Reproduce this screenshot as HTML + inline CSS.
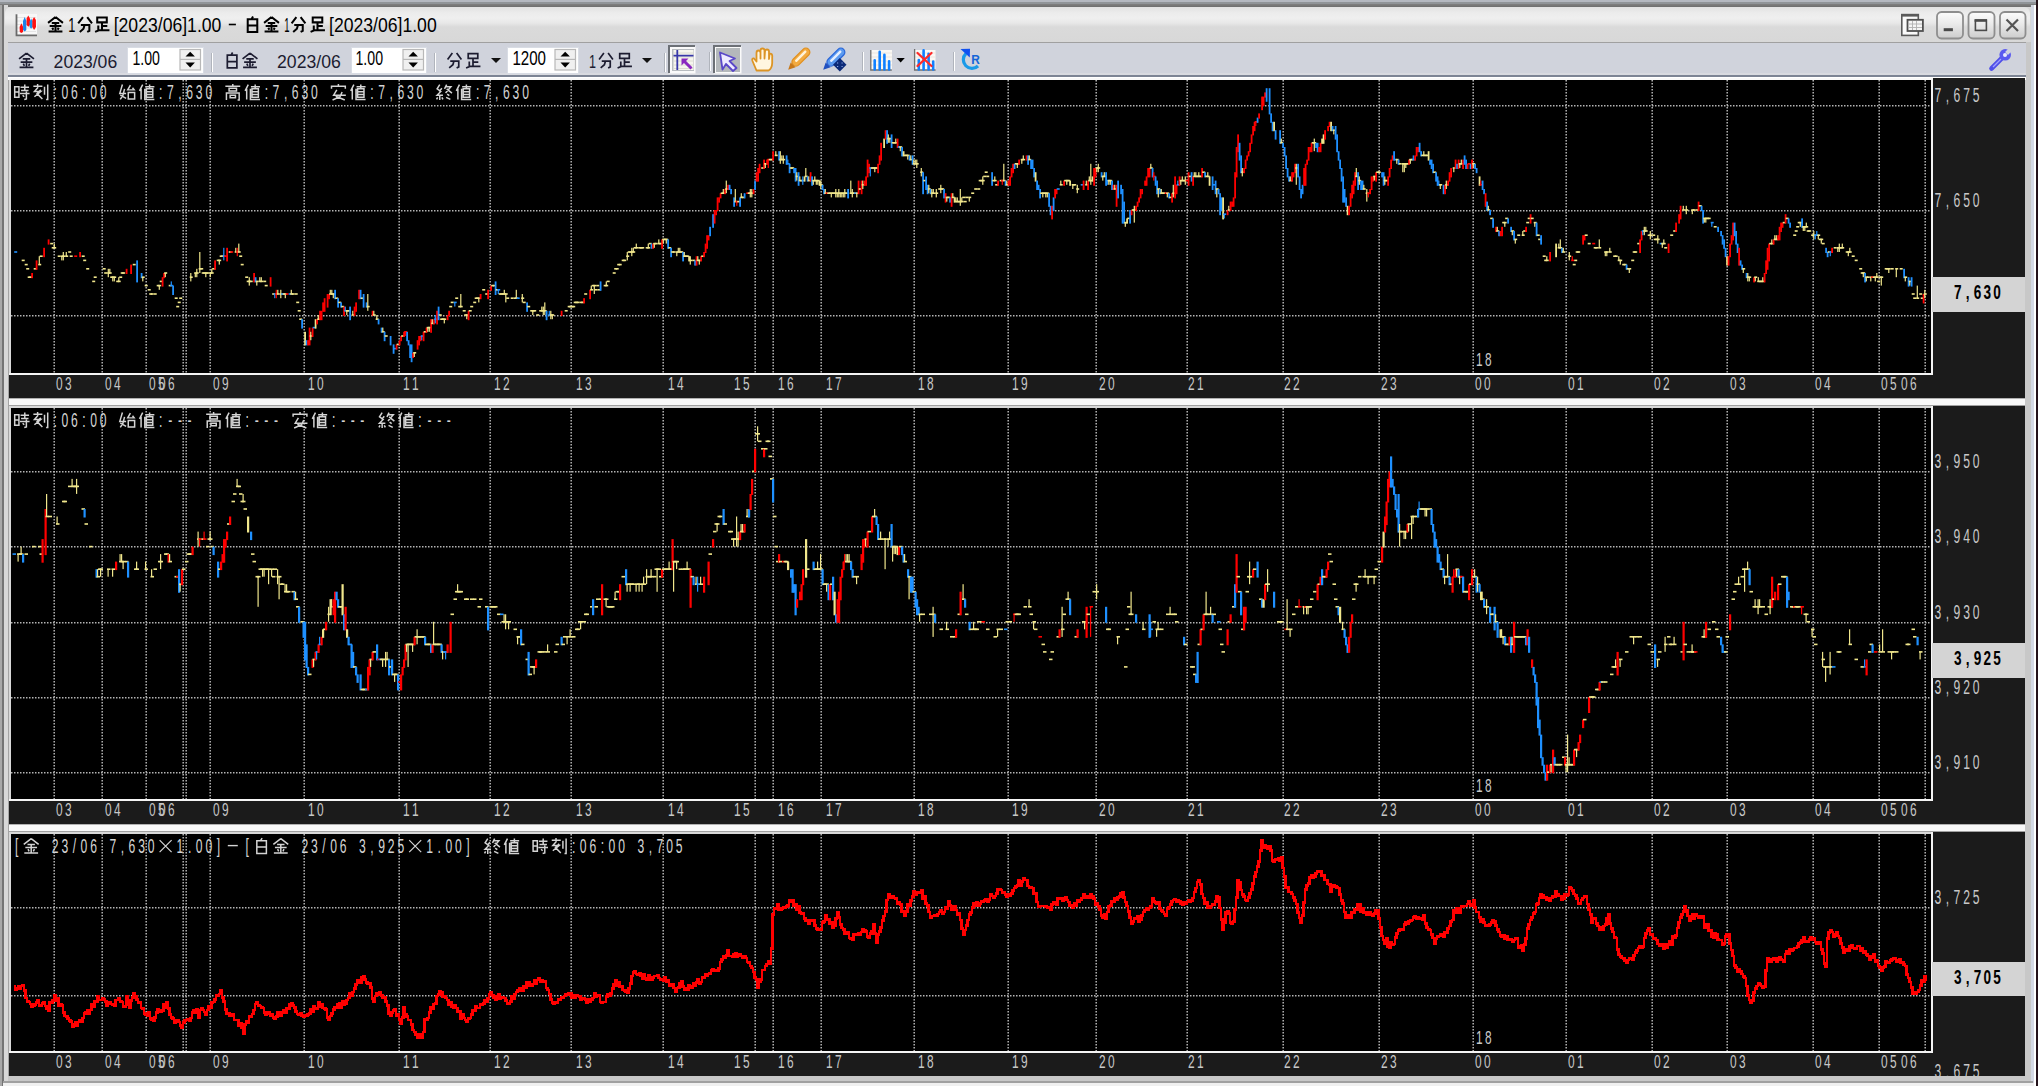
<!DOCTYPE html>
<html><head><meta charset="utf-8">
<style>
*{margin:0;padding:0;box-sizing:border-box}
html,body{width:2038px;height:1086px;overflow:hidden;background:#b4b8c0;font-family:"Liberation Sans",sans-serif}
.a{position:absolute}
#win{left:0;top:4px;width:2036px;height:1082px;background:#d8d8d8}
#rt{left:2036px;top:0;width:2px;height:1086px;background:#24121a}
#title{left:5px;top:7px;width:2025px;height:35px;border-radius:6px 6px 0 0;background:linear-gradient(#e2e2e2 0px,#ececec 6px,#efefef 11px,#e8e8e8 16px,#dadada 20px,#d8d8d8 35px)}
#tb{left:8px;top:42px;width:2018px;height:35px;background:#d0d3dc;border-top:1px solid #a0a0a0}
.tt{font-size:19px;color:#000;white-space:nowrap;transform-origin:0 0}
.tbt{font-size:18px;color:#1a1a2a;white-space:nowrap}
.inp{background:#fff;border:1px solid #d8dce4}
.inp span{position:absolute;left:5px;top:1px;font-size:17px;color:#000;transform:scaleY(1.1);transform-origin:0 0}
.spin{position:absolute;top:1px;width:21px;height:23px;background:#e6e6e6;border:1px solid #c8c8c8}
.sep{width:2px;height:19px;background:linear-gradient(90deg,#b0b4bc 50%,#fff 50%)}
.tri{width:0;height:0;border-left:5px solid transparent;border-right:5px solid transparent}
</style></head><body>
<div class="a" id="win"></div>
<div class="a" style="left:0;top:2px;width:2036px;height:2px;background:#909498"></div>
<div class="a" style="left:0;top:4px;width:2036px;height:3px;background:linear-gradient(#808080,#6e6e6e)"></div>
<div class="a" style="left:0;top:5px;width:2px;height:1081px;background:#a8a8a8"></div>
<div class="a" style="left:2px;top:5px;width:2px;height:1081px;background:#747474"></div>
<div class="a" style="left:4px;top:5px;width:4px;height:1081px;background:#d8d8d8"></div>
<div class="a" style="left:8px;top:42px;width:1px;height:1040px;background:#a4a4a4"></div>
<div class="a" style="left:2025px;top:42px;width:6px;height:1040px;background:#c8c8c8"></div>
<div class="a" style="left:2031px;top:5px;width:3px;height:1081px;background:#d4d8e4"></div>
<div class="a" style="left:2034px;top:5px;width:2px;height:1081px;background:#ffffff"></div>
<div class="a" id="rt"></div>
<div class="a" style="left:8px;top:1076px;width:2023px;height:5px;background:#c8c8c8"></div>
<div class="a" style="left:3px;top:1081px;width:2030px;height:2px;background:#a0a0a0"></div>
<div class="a" style="left:3px;top:1083px;width:2031px;height:3px;background:#f0f0f0"></div>
<div class="a" id="title"></div>
<!-- title icon -->
<svg class="a" style="left:10px;top:8px" width="35" height="34" viewBox="10 8 35 34">
<rect x="16" y="14" width="21" height="21" fill="#f8f8f8"/>
<path d="M17 17.5h19M17 21h19M17 24.5h19M17 28h19M17 31.5h19" stroke="#e4e4e4" stroke-width="1"/>
<path d="M21.4 23.3L23.2 27L23 32L21.4 33L19.8 32L19.6 27Z" fill="#ff1010"/>
<path d="M24.7 17L26.4 21L26.3 30L24.7 31.5L23.1 30L23 21Z" fill="#1a82e8"/>
<path d="M28.3 15.5L30 18.5L30 25L28.3 26.8L26.6 25L26.6 18.5Z" fill="#ff1010"/>
<path d="M31.1 18.6L32.6 21.5L32.6 27L31.1 28.7L29.6 27L29.6 21.5Z" fill="#1a90f0"/>
<path d="M34.1 17L35.9 20L36 27L34.1 29.9L32.3 27L32.3 20Z" fill="#ff1010"/>
<path d="M16.5 14.3V35.3H37" stroke="#6a6a6a" stroke-width="1.8" fill="none"/>
</svg>
<!-- title buttons -->
<svg class="a" style="left:1895px;top:8px" width="135" height="34" viewBox="1895 8 135 34">
<rect x="1901.8" y="14.6" width="16.5" height="20.8" fill="#fafafa" stroke="#5a5a5a" stroke-width="1.6"/>
<path d="M1902 15.5h16" stroke="#5a5a5a" stroke-width="2.2"/>
<rect x="1907.5" y="19.8" width="15.4" height="11.2" fill="#f4f4f4" stroke="#505050" stroke-width="1.8"/>
<path d="M1909 24h13M1909 27.5h13M1912.5 21v9M1916.5 21v9" stroke="#b0b0b0" stroke-width="0.9"/>
<defs><linearGradient id="bg" x1="0" y1="0" x2="0" y2="1"><stop offset="0" stop-color="#fcfcfc"/><stop offset="0.45" stop-color="#eaeaea"/><stop offset="1" stop-color="#cccccc"/></linearGradient></defs>
<rect x="1937" y="12" width="26" height="26.5" rx="4.5" fill="url(#bg)" stroke="#8e8e8e" stroke-width="1.8"/>
<rect x="1968.5" y="12" width="26" height="26.5" rx="4.5" fill="url(#bg)" stroke="#8e8e8e" stroke-width="1.8"/>
<rect x="2000" y="12" width="25.5" height="26.5" rx="4.5" fill="url(#bg)" stroke="#8e8e8e" stroke-width="1.8"/>
<rect x="1943.7" y="28.2" width="9.2" height="3" fill="#4a4a4a"/>
<rect x="1975.4" y="20.2" width="11" height="10.2" fill="none" stroke="#4a4a4a" stroke-width="1.6"/>
<rect x="1974.6" y="19.2" width="12.4" height="2.6" fill="#4a4a4a"/>
<path d="M2006.5 19.5L2018 31M2018 19.5L2006.5 31" stroke="#555" stroke-width="2.2"/>
</svg>
<!-- toolbar -->
<div class="a" id="tb"></div>
<div class="a" style="left:8px;top:73px;width:2018px;height:2px;background:#d8dae0"></div>
<div class="a" style="left:8px;top:75px;width:2018px;height:2px;background:#7c8494"></div>
<div class="a" style="left:8px;top:77px;width:2018px;height:3px;background:#ffffff"></div>
<div class="a inp" style="left:127px;top:47px;width:77px;height:27px"></div>
<div class="a sep" style="left:211px;top:53px"></div>
<div class="a inp" style="left:351px;top:47px;width:76px;height:27px"></div>
<div class="a sep" style="left:434px;top:53px"></div>
<div class="a tri" style="left:491px;top:58px;border-top:5px solid #111"></div>
<div class="a inp" style="left:507px;top:47px;width:72px;height:27px"></div>
<div class="a tri" style="left:642px;top:58px;border-top:5px solid #111"></div>
<div class="a sep" style="left:664px;top:53px"></div>
<!-- icons -->
<svg class="a" style="left:0;top:0" width="1100" height="80" viewBox="0 0 1100 80">
<rect x="669" y="46" width="26.5" height="27.5" fill="#fafafa"/>
<path d="M669 73V46H695" stroke="#6c7076" stroke-width="2" fill="none"/>
<rect x="672" y="49" width="22" height="22" fill="#b8bcc0"/>
<rect x="673.5" y="50" width="20" height="20" fill="#f6f6ee"/>
<path d="M674 53h19M674 57h19M674 61h19M674 65h19M674 68.5h19" stroke="#dcdcd0" stroke-width="1"/>
<path d="M677.3 50v20M673.5 55.7h20" stroke="#3838a8" stroke-width="1.8"/>
<path d="M683 60l8.5 8.5" stroke="#8a28c0" stroke-width="3"/>
<path d="M681.5 58.5h7l-7 7z" fill="#8a28c0"/>
<rect x="709" y="52" width="1" height="19" fill="#b0b4bc"/><rect x="710" y="52" width="1" height="19" fill="#fff"/>
<rect x="714" y="46" width="27.5" height="27.5" fill="#fafafa"/>
<path d="M714 73V46H741" stroke="#6c7076" stroke-width="2" fill="none"/>
<rect x="716" y="48" width="24" height="24" fill="#b4b8bb"/>
<path d="M720 52.5L735 58.5L729.5 61L736.5 68L733 71L726 64L722.5 69.5Z" fill="#eeeaff" stroke="#5a48c8" stroke-width="1.8" stroke-linejoin="round"/>
<path d="M756.5 70.5L752.5 61Q751.5 58 754 58.5L756.5 61.5V53Q756.5 50.5 758.5 50.5Q760.5 50.5 760.5 53V58.5V50.5Q760.5 48.5 762.5 48.5Q764.5 48.5 764.5 50.5V58.5L765 51.5Q765 49.5 767 49.5Q769 49.5 769 51.5V59L769.5 55Q770 53 771.5 54Q772.5 55 772.2 57V63Q772 68.5 768.5 70.5Z" fill="#fff6e0" stroke="#dc9424" stroke-width="1.8" stroke-linejoin="round"/>
<g transform="translate(799.5,58.5) rotate(-45)"><rect x="-9" y="-4" width="22" height="8" rx="4" fill="#f2aa40" stroke="#e09020" stroke-width="1.2"/><rect x="-5" y="-2" width="15" height="2.5" rx="1" fill="#fff2d8"/><path d="M-9 -3.5L-16 0L-9 3.5Z" fill="#c87818"/></g>
<g transform="translate(834.5,58.5) rotate(-45)"><rect x="-9" y="-4" width="22" height="8" rx="4" fill="#5a9af0" stroke="#2a66d8" stroke-width="1.2"/><rect x="-5" y="-2" width="15" height="2.5" rx="1" fill="#e4eeff"/><path d="M-9 -3.5L-16 0L-9 3.5Z" fill="#2050c0"/></g>
<rect x="835" y="60" width="9.5" height="9.5" transform="rotate(45 839.8 64.8)" fill="#0c2a78"/>
<path d="M837 63h1.2M841.5 63h1.2M837 66.5h1.2M841.5 66.5h1.2" stroke="#8aa8e8" stroke-width="1.2"/>
<rect x="862" y="52" width="1" height="19" fill="#b0b4bc"/><rect x="863" y="52" width="1" height="19" fill="#fff"/>
<rect x="871" y="50" width="21" height="20" fill="#faf8f4"/>
<path d="M871 53h21M871 57h21M871 61h21M871 65h21" stroke="#ece6de" stroke-width="1"/>
<path d="M870.8 50v20h21" stroke="#707070" stroke-width="1.3" fill="none"/>
<path d="M874.7 69.5V60.3M879.7 69.5V51.7M884.4 69.5V54.7M889.1 69.5V61.4" stroke="#1080ff" stroke-width="2.6" stroke-linecap="round"/>
<path d="M896.5 58h8.3l-4.15 4.6z" fill="#000"/>
<rect x="915" y="50" width="20.5" height="20" fill="#faf8f4"/>
<path d="M915 53h20M915 57h20M915 61h20M915 65h20" stroke="#ece6de" stroke-width="1"/>
<path d="M914.6 49v21h21" stroke="#707070" stroke-width="1.3" fill="none"/>
<path d="M918.8 69.5V60M923.6 69.5V50.4M928.6 69.5V53.8M933.2 69.5V61.6" stroke="#1080ff" stroke-width="2.6" stroke-linecap="round"/>
<path d="M917.5 53L931.5 66M931.5 53L917.5 66" stroke="#ff2a2a" stroke-width="2.3" stroke-linecap="round"/>
<rect x="953" y="52" width="1" height="19" fill="#b0b4bc"/><rect x="954" y="52" width="1" height="19" fill="#fff"/>
<path d="M966 53.5A8.5 8.5 0 1 0 978 66" fill="none" stroke="#1a9ae8" stroke-width="3.2"/>
<path d="M960.5 49L970 48.8L969.8 57.5Z" fill="#1050f0"/>
<text x="971.3" y="63.8" font-family="Liberation Sans" font-weight="bold" font-size="13.5" fill="#1466d8" textLength="8.6" lengthAdjust="spacingAndGlyphs">R</text>
</svg>
<svg class="a" style="left:0;top:0" width="2038" height="80" viewBox="0 0 2038 80">
<path d="M1991.5 68.5L2002 58" stroke="#5050e8" stroke-width="4.6" stroke-linecap="round"/>
<circle cx="2005.2" cy="54.8" r="5.8" fill="#5a5af0"/>
<circle cx="2005" cy="55" r="2" fill="#e8e8ff"/>
<path d="M2006.5 53.5L2013 47" stroke="#d0d3dc" stroke-width="4"/>
<path d="M1993 67L2001 59" stroke="#a0a0ff" stroke-width="1.2"/>
</svg>
<svg width="2038" height="1086" style="position:absolute;left:0;top:0">
<rect x="9" y="78" width="2016" height="320" fill="#1b1b1b"/>
<rect x="11" y="80" width="1920" height="293" fill="#000"/>
<rect x="9" y="78" width="2" height="296" fill="#d8d8d8"/>
<rect x="9" y="78" width="1924" height="2" fill="#f8f8f8"/>
<rect x="1931" y="78" width="2" height="297" fill="#f4f4f4"/>
<rect x="9" y="373" width="1924" height="2" fill="#f4f4f4"/>
<g stroke="#b4b4b4" stroke-width="1.5" stroke-dasharray="1.5 1.5"><line x1="54.2" y1="80" x2="54.2" y2="373"/><line x1="102.2" y1="80" x2="102.2" y2="373"/><line x1="146.2" y1="80" x2="146.2" y2="373"/><line x1="183.2" y1="80" x2="183.2" y2="373"/><line x1="186.2" y1="80" x2="186.2" y2="373"/><line x1="210.2" y1="80" x2="210.2" y2="373"/><line x1="304.2" y1="80" x2="304.2" y2="373"/><line x1="399.2" y1="80" x2="399.2" y2="373"/><line x1="490.2" y1="80" x2="490.2" y2="373"/><line x1="571.2" y1="80" x2="571.2" y2="373"/><line x1="663.2" y1="80" x2="663.2" y2="373"/><line x1="755.2" y1="80" x2="755.2" y2="373"/><line x1="773.2" y1="80" x2="773.2" y2="373"/><line x1="821.2" y1="80" x2="821.2" y2="373"/><line x1="914.2" y1="80" x2="914.2" y2="373"/><line x1="1008.2" y1="80" x2="1008.2" y2="373"/><line x1="1096.2" y1="80" x2="1096.2" y2="373"/><line x1="1187.2" y1="80" x2="1187.2" y2="373"/><line x1="1283.2" y1="80" x2="1283.2" y2="373"/><line x1="1379.2" y1="80" x2="1379.2" y2="373"/><line x1="1473.2" y1="80" x2="1473.2" y2="373"/><line x1="1566.2" y1="80" x2="1566.2" y2="373"/><line x1="1652.2" y1="80" x2="1652.2" y2="373"/><line x1="1727.2" y1="80" x2="1727.2" y2="373"/><line x1="1813.2" y1="80" x2="1813.2" y2="373"/><line x1="1879.2" y1="80" x2="1879.2" y2="373"/><line x1="1925.2" y1="80" x2="1925.2" y2="373"/><line x1="11" y1="105.8" x2="1931" y2="105.8"/><line x1="11" y1="210.8" x2="1931" y2="210.8"/><line x1="11" y1="315.8" x2="1931" y2="315.8"/></g>
<path transform="translate(13.10,83.50) scale(1.0625)" d="M1.5 3H5.5V13H1.5ZM1.5 8H5.5M7 3.5H15M11 1V6M7.5 6.5H14.5M6.5 9.5H15.5M12.5 7.5V14.5L10.5 15M9 11L10.5 12.5" fill="none" stroke="#d4d4d4" stroke-width="1.40"/>
<path transform="translate(32.30,83.50) scale(1.0625)" d="M5 0.5V2.5M1 2.5H9.5M5.5 3.5L2 7.5H8L2 12.5M8 6L4 10M5 10L9.5 14.5M11.5 3V10.5M14.5 1V15L13 15" fill="none" stroke="#d4d4d4" stroke-width="1.40"/>
<path transform="translate(118.70,83.50) scale(1.0625)" d="M3.5 1L2 6L1 9.5H7M5.5 5L4 11L1.5 15M1.5 11L7 14M11 1.5L8.5 6H14.5L13 4M9 8.5H15V14.5H9Z" fill="none" stroke="#d4d4d4" stroke-width="1.40"/>
<path transform="translate(137.90,83.50) scale(1.0625)" d="M4.5 1L1.5 7M3 5V15M7 3H15.5M11 1V5M8 5H14V13H8ZM8 7.7H14M8 10.3H14M6.5 5V15H15.5" fill="none" stroke="#d4d4d4" stroke-width="1.40"/>
<path transform="translate(224.30,83.50) scale(1.0625)" d="M8 0.5V2M1 2.5H15M4.5 4.5H11.5V7H4.5ZM2 15.5V9H14V15.5L12.5 15.5M5.5 11H10.5V13.5H5.5Z" fill="none" stroke="#d4d4d4" stroke-width="1.40"/>
<path transform="translate(243.50,83.50) scale(1.0625)" d="M4.5 1L1.5 7M3 5V15M7 3H15.5M11 1V5M8 5H14V13H8ZM8 7.7H14M8 10.3H14M6.5 5V15H15.5" fill="none" stroke="#d4d4d4" stroke-width="1.40"/>
<path transform="translate(329.90,83.50) scale(1.0625)" d="M8 0.5V2.5M1.5 5V2.5H14.5V5M6.5 6L3.5 11H15M11.5 8L9.5 12.5L2.5 15.5M5.5 12L14 15.5" fill="none" stroke="#d4d4d4" stroke-width="1.40"/>
<path transform="translate(349.10,83.50) scale(1.0625)" d="M4.5 1L1.5 7M3 5V15M7 3H15.5M11 1V5M8 5H14V13H8ZM8 7.7H14M8 10.3H14M6.5 5V15H15.5" fill="none" stroke="#d4d4d4" stroke-width="1.40"/>
<path transform="translate(435.50,83.50) scale(1.0625)" d="M4 1L1.5 5L5 7.5L1.5 11H7M6 4.5L3.5 7.5M4 11V15.5M2 13L1 15M6 13L7 15M10.5 1L8.5 5M9.5 3H14.5L9.5 9M10.5 5L15.5 9M11 10L13 11.5M10 13L14 15" fill="none" stroke="#d4d4d4" stroke-width="1.40"/>
<path transform="translate(454.70,83.50) scale(1.0625)" d="M4.5 1L1.5 7M3 5V15M7 3H15.5M11 1V5M8 5H14V13H8ZM8 7.7H14M8 10.3H14M6.5 5V15H15.5" fill="none" stroke="#d4d4d4" stroke-width="1.40"/>
<g transform="translate(0,98.60) scale(0.760,1.230)"><text x="72.63 85.26 97.89 110.53 123.16 135.79 211.58 224.21 236.84 249.47 262.11 274.74 350.53 363.16 375.79 388.42 401.05 413.68 489.47 502.11 514.74 527.37 540.00 552.63 628.42 641.05 653.68 666.32 678.95 691.58" y="0" text-anchor="middle" fill="#d4d4d4" font-family="Liberation Sans" font-size="16" font-weight="normal">:06:00:7,630:7,630:7,630:7,630</text></g>
<g transform="translate(0,101.50) scale(0.760,1.230)"><text x="2549.74 2562.37 2575.00 2587.63 2600.26" y="0" text-anchor="middle" fill="#c8c8c8" font-family="Liberation Sans" font-size="16" font-weight="normal">7,675</text></g>
<g transform="translate(0,206.50) scale(0.760,1.230)"><text x="2549.74 2562.37 2575.00 2587.63 2600.26" y="0" text-anchor="middle" fill="#c8c8c8" font-family="Liberation Sans" font-size="16" font-weight="normal">7,650</text></g>
<rect x="1932" y="277" width="93" height="35" fill="#d4d4d4"/>
<g transform="translate(0,299.30) scale(0.850,1.300)"><text x="2303.41 2314.94 2326.47 2338.00 2349.53" y="0" text-anchor="middle" fill="#000" font-family="Liberation Sans" font-size="16" font-weight="bold">7,630</text></g>
<g transform="translate(0,389.50) scale(0.850,1.310)"><text x="69.88 80.24" y="0" text-anchor="middle" fill="#c8c8c8" font-family="Liberation Sans" font-size="14" font-weight="normal">03</text></g>
<g transform="translate(0,389.50) scale(0.850,1.310)"><text x="127.53 137.88" y="0" text-anchor="middle" fill="#c8c8c8" font-family="Liberation Sans" font-size="14" font-weight="normal">04</text></g>
<g transform="translate(0,389.50) scale(0.850,1.310)"><text x="179.29 189.65" y="0" text-anchor="middle" fill="#c8c8c8" font-family="Liberation Sans" font-size="14" font-weight="normal">05</text></g>
<g transform="translate(0,389.50) scale(0.850,1.310)"><text x="191.06 201.41" y="0" text-anchor="middle" fill="#c8c8c8" font-family="Liberation Sans" font-size="14" font-weight="normal">06</text></g>
<g transform="translate(0,389.50) scale(0.850,1.310)"><text x="254.59 264.94" y="0" text-anchor="middle" fill="#c8c8c8" font-family="Liberation Sans" font-size="14" font-weight="normal">09</text></g>
<g transform="translate(0,389.50) scale(0.850,1.310)"><text x="366.35 376.71" y="0" text-anchor="middle" fill="#c8c8c8" font-family="Liberation Sans" font-size="14" font-weight="normal">10</text></g>
<g transform="translate(0,389.50) scale(0.850,1.310)"><text x="478.12 488.47" y="0" text-anchor="middle" fill="#c8c8c8" font-family="Liberation Sans" font-size="14" font-weight="normal">11</text></g>
<g transform="translate(0,389.50) scale(0.850,1.310)"><text x="585.18 595.53" y="0" text-anchor="middle" fill="#c8c8c8" font-family="Liberation Sans" font-size="14" font-weight="normal">12</text></g>
<g transform="translate(0,389.50) scale(0.850,1.310)"><text x="681.65 692.00" y="0" text-anchor="middle" fill="#c8c8c8" font-family="Liberation Sans" font-size="14" font-weight="normal">13</text></g>
<g transform="translate(0,389.50) scale(0.850,1.310)"><text x="789.88 800.24" y="0" text-anchor="middle" fill="#c8c8c8" font-family="Liberation Sans" font-size="14" font-weight="normal">14</text></g>
<g transform="translate(0,389.50) scale(0.850,1.310)"><text x="867.53 877.88" y="0" text-anchor="middle" fill="#c8c8c8" font-family="Liberation Sans" font-size="14" font-weight="normal">15</text></g>
<g transform="translate(0,389.50) scale(0.850,1.310)"><text x="919.29 929.65" y="0" text-anchor="middle" fill="#c8c8c8" font-family="Liberation Sans" font-size="14" font-weight="normal">16</text></g>
<g transform="translate(0,389.50) scale(0.850,1.310)"><text x="975.76 986.12" y="0" text-anchor="middle" fill="#c8c8c8" font-family="Liberation Sans" font-size="14" font-weight="normal">17</text></g>
<g transform="translate(0,389.50) scale(0.850,1.310)"><text x="1084.00 1094.35" y="0" text-anchor="middle" fill="#c8c8c8" font-family="Liberation Sans" font-size="14" font-weight="normal">18</text></g>
<g transform="translate(0,389.50) scale(0.850,1.310)"><text x="1194.59 1204.94" y="0" text-anchor="middle" fill="#c8c8c8" font-family="Liberation Sans" font-size="14" font-weight="normal">19</text></g>
<g transform="translate(0,389.50) scale(0.850,1.310)"><text x="1296.94 1307.29" y="0" text-anchor="middle" fill="#c8c8c8" font-family="Liberation Sans" font-size="14" font-weight="normal">20</text></g>
<g transform="translate(0,389.50) scale(0.850,1.310)"><text x="1401.65 1412.00" y="0" text-anchor="middle" fill="#c8c8c8" font-family="Liberation Sans" font-size="14" font-weight="normal">21</text></g>
<g transform="translate(0,389.50) scale(0.850,1.310)"><text x="1514.59 1524.94" y="0" text-anchor="middle" fill="#c8c8c8" font-family="Liberation Sans" font-size="14" font-weight="normal">22</text></g>
<g transform="translate(0,389.50) scale(0.850,1.310)"><text x="1628.71 1639.06" y="0" text-anchor="middle" fill="#c8c8c8" font-family="Liberation Sans" font-size="14" font-weight="normal">23</text></g>
<g transform="translate(0,389.50) scale(0.850,1.310)"><text x="1739.29 1749.65" y="0" text-anchor="middle" fill="#c8c8c8" font-family="Liberation Sans" font-size="14" font-weight="normal">00</text></g>
<g transform="translate(0,389.50) scale(0.850,1.310)"><text x="1848.71 1859.06" y="0" text-anchor="middle" fill="#c8c8c8" font-family="Liberation Sans" font-size="14" font-weight="normal">01</text></g>
<g transform="translate(0,389.50) scale(0.850,1.310)"><text x="1949.88 1960.24" y="0" text-anchor="middle" fill="#c8c8c8" font-family="Liberation Sans" font-size="14" font-weight="normal">02</text></g>
<g transform="translate(0,389.50) scale(0.850,1.310)"><text x="2039.29 2049.65" y="0" text-anchor="middle" fill="#c8c8c8" font-family="Liberation Sans" font-size="14" font-weight="normal">03</text></g>
<g transform="translate(0,389.50) scale(0.850,1.310)"><text x="2139.29 2149.65" y="0" text-anchor="middle" fill="#c8c8c8" font-family="Liberation Sans" font-size="14" font-weight="normal">04</text></g>
<g transform="translate(0,389.50) scale(0.850,1.310)"><text x="2216.94 2227.29" y="0" text-anchor="middle" fill="#c8c8c8" font-family="Liberation Sans" font-size="14" font-weight="normal">05</text></g>
<g transform="translate(0,389.50) scale(0.850,1.310)"><text x="2240.47 2250.82" y="0" text-anchor="middle" fill="#c8c8c8" font-family="Liberation Sans" font-size="14" font-weight="normal">06</text></g>
<g transform="translate(0,366.00) scale(0.850,1.310)"><text x="1740.47 1750.82" y="0" text-anchor="middle" fill="#c8c8c8" font-family="Liberation Sans" font-size="14" font-weight="normal">18</text></g>
<rect x="9" y="406" width="2016" height="418" fill="#1b1b1b"/>
<rect x="11" y="408" width="1920" height="391" fill="#000"/>
<rect x="9" y="406" width="2" height="394" fill="#d8d8d8"/>
<rect x="9" y="406" width="1924" height="2" fill="#d8d8d8"/>
<rect x="1931" y="406" width="2" height="395" fill="#f4f4f4"/>
<rect x="9" y="799" width="1924" height="2" fill="#f4f4f4"/>
<g stroke="#b4b4b4" stroke-width="1.5" stroke-dasharray="1.5 1.5"><line x1="54.2" y1="408" x2="54.2" y2="799"/><line x1="102.2" y1="408" x2="102.2" y2="799"/><line x1="146.2" y1="408" x2="146.2" y2="799"/><line x1="183.2" y1="408" x2="183.2" y2="799"/><line x1="186.2" y1="408" x2="186.2" y2="799"/><line x1="210.2" y1="408" x2="210.2" y2="799"/><line x1="304.2" y1="408" x2="304.2" y2="799"/><line x1="399.2" y1="408" x2="399.2" y2="799"/><line x1="490.2" y1="408" x2="490.2" y2="799"/><line x1="571.2" y1="408" x2="571.2" y2="799"/><line x1="663.2" y1="408" x2="663.2" y2="799"/><line x1="755.2" y1="408" x2="755.2" y2="799"/><line x1="773.2" y1="408" x2="773.2" y2="799"/><line x1="821.2" y1="408" x2="821.2" y2="799"/><line x1="914.2" y1="408" x2="914.2" y2="799"/><line x1="1008.2" y1="408" x2="1008.2" y2="799"/><line x1="1096.2" y1="408" x2="1096.2" y2="799"/><line x1="1187.2" y1="408" x2="1187.2" y2="799"/><line x1="1283.2" y1="408" x2="1283.2" y2="799"/><line x1="1379.2" y1="408" x2="1379.2" y2="799"/><line x1="1473.2" y1="408" x2="1473.2" y2="799"/><line x1="1566.2" y1="408" x2="1566.2" y2="799"/><line x1="1652.2" y1="408" x2="1652.2" y2="799"/><line x1="1727.2" y1="408" x2="1727.2" y2="799"/><line x1="1813.2" y1="408" x2="1813.2" y2="799"/><line x1="1879.2" y1="408" x2="1879.2" y2="799"/><line x1="1925.2" y1="408" x2="1925.2" y2="799"/><line x1="11" y1="471.8" x2="1931" y2="471.8"/><line x1="11" y1="546.8" x2="1931" y2="546.8"/><line x1="11" y1="622.8" x2="1931" y2="622.8"/><line x1="11" y1="697.8" x2="1931" y2="697.8"/><line x1="11" y1="772.8" x2="1931" y2="772.8"/></g>
<path transform="translate(13.10,411.50) scale(1.0625)" d="M1.5 3H5.5V13H1.5ZM1.5 8H5.5M7 3.5H15M11 1V6M7.5 6.5H14.5M6.5 9.5H15.5M12.5 7.5V14.5L10.5 15M9 11L10.5 12.5" fill="none" stroke="#d4d4d4" stroke-width="1.40"/>
<path transform="translate(32.30,411.50) scale(1.0625)" d="M5 0.5V2.5M1 2.5H9.5M5.5 3.5L2 7.5H8L2 12.5M8 6L4 10M5 10L9.5 14.5M11.5 3V10.5M14.5 1V15L13 15" fill="none" stroke="#d4d4d4" stroke-width="1.40"/>
<path transform="translate(118.70,411.50) scale(1.0625)" d="M3.5 1L2 6L1 9.5H7M5.5 5L4 11L1.5 15M1.5 11L7 14M11 1.5L8.5 6H14.5L13 4M9 8.5H15V14.5H9Z" fill="none" stroke="#d4d4d4" stroke-width="1.40"/>
<path transform="translate(137.90,411.50) scale(1.0625)" d="M4.5 1L1.5 7M3 5V15M7 3H15.5M11 1V5M8 5H14V13H8ZM8 7.7H14M8 10.3H14M6.5 5V15H15.5" fill="none" stroke="#d4d4d4" stroke-width="1.40"/>
<path transform="translate(205.10,411.50) scale(1.0625)" d="M8 0.5V2M1 2.5H15M4.5 4.5H11.5V7H4.5ZM2 15.5V9H14V15.5L12.5 15.5M5.5 11H10.5V13.5H5.5Z" fill="none" stroke="#d4d4d4" stroke-width="1.40"/>
<path transform="translate(224.30,411.50) scale(1.0625)" d="M4.5 1L1.5 7M3 5V15M7 3H15.5M11 1V5M8 5H14V13H8ZM8 7.7H14M8 10.3H14M6.5 5V15H15.5" fill="none" stroke="#d4d4d4" stroke-width="1.40"/>
<path transform="translate(291.50,411.50) scale(1.0625)" d="M8 0.5V2.5M1.5 5V2.5H14.5V5M6.5 6L3.5 11H15M11.5 8L9.5 12.5L2.5 15.5M5.5 12L14 15.5" fill="none" stroke="#d4d4d4" stroke-width="1.40"/>
<path transform="translate(310.70,411.50) scale(1.0625)" d="M4.5 1L1.5 7M3 5V15M7 3H15.5M11 1V5M8 5H14V13H8ZM8 7.7H14M8 10.3H14M6.5 5V15H15.5" fill="none" stroke="#d4d4d4" stroke-width="1.40"/>
<path transform="translate(377.90,411.50) scale(1.0625)" d="M4 1L1.5 5L5 7.5L1.5 11H7M6 4.5L3.5 7.5M4 11V15.5M2 13L1 15M6 13L7 15M10.5 1L8.5 5M9.5 3H14.5L9.5 9M10.5 5L15.5 9M11 10L13 11.5M10 13L14 15" fill="none" stroke="#d4d4d4" stroke-width="1.40"/>
<path transform="translate(397.10,411.50) scale(1.0625)" d="M4.5 1L1.5 7M3 5V15M7 3H15.5M11 1V5M8 5H14V13H8ZM8 7.7H14M8 10.3H14M6.5 5V15H15.5" fill="none" stroke="#d4d4d4" stroke-width="1.40"/>
<g transform="translate(0,426.60) scale(0.760,1.230)"><text x="72.63 85.26 97.89 110.53 123.16 135.79 211.58 224.21 236.84 249.47 325.26 337.89 350.53 363.16 438.95 451.58 464.21 476.84 552.63 565.26 577.89 590.53" y="0" text-anchor="middle" fill="#d4d4d4" font-family="Liberation Sans" font-size="16" font-weight="normal">:06:00:---:---:---:---</text></g>
<g transform="translate(0,467.50) scale(0.760,1.230)"><text x="2549.74 2562.37 2575.00 2587.63 2600.26" y="0" text-anchor="middle" fill="#c8c8c8" font-family="Liberation Sans" font-size="16" font-weight="normal">3,950</text></g>
<g transform="translate(0,542.50) scale(0.760,1.230)"><text x="2549.74 2562.37 2575.00 2587.63 2600.26" y="0" text-anchor="middle" fill="#c8c8c8" font-family="Liberation Sans" font-size="16" font-weight="normal">3,940</text></g>
<g transform="translate(0,618.50) scale(0.760,1.230)"><text x="2549.74 2562.37 2575.00 2587.63 2600.26" y="0" text-anchor="middle" fill="#c8c8c8" font-family="Liberation Sans" font-size="16" font-weight="normal">3,930</text></g>
<g transform="translate(0,693.50) scale(0.760,1.230)"><text x="2549.74 2562.37 2575.00 2587.63 2600.26" y="0" text-anchor="middle" fill="#c8c8c8" font-family="Liberation Sans" font-size="16" font-weight="normal">3,920</text></g>
<g transform="translate(0,768.50) scale(0.760,1.230)"><text x="2549.74 2562.37 2575.00 2587.63 2600.26" y="0" text-anchor="middle" fill="#c8c8c8" font-family="Liberation Sans" font-size="16" font-weight="normal">3,910</text></g>
<rect x="1932" y="643" width="93" height="35" fill="#d4d4d4"/>
<g transform="translate(0,665.30) scale(0.850,1.300)"><text x="2303.41 2314.94 2326.47 2338.00 2349.53" y="0" text-anchor="middle" fill="#000" font-family="Liberation Sans" font-size="16" font-weight="bold">3,925</text></g>
<g transform="translate(0,816.00) scale(0.850,1.310)"><text x="69.88 80.24" y="0" text-anchor="middle" fill="#c8c8c8" font-family="Liberation Sans" font-size="14" font-weight="normal">03</text></g>
<g transform="translate(0,816.00) scale(0.850,1.310)"><text x="127.53 137.88" y="0" text-anchor="middle" fill="#c8c8c8" font-family="Liberation Sans" font-size="14" font-weight="normal">04</text></g>
<g transform="translate(0,816.00) scale(0.850,1.310)"><text x="179.29 189.65" y="0" text-anchor="middle" fill="#c8c8c8" font-family="Liberation Sans" font-size="14" font-weight="normal">05</text></g>
<g transform="translate(0,816.00) scale(0.850,1.310)"><text x="191.06 201.41" y="0" text-anchor="middle" fill="#c8c8c8" font-family="Liberation Sans" font-size="14" font-weight="normal">06</text></g>
<g transform="translate(0,816.00) scale(0.850,1.310)"><text x="254.59 264.94" y="0" text-anchor="middle" fill="#c8c8c8" font-family="Liberation Sans" font-size="14" font-weight="normal">09</text></g>
<g transform="translate(0,816.00) scale(0.850,1.310)"><text x="366.35 376.71" y="0" text-anchor="middle" fill="#c8c8c8" font-family="Liberation Sans" font-size="14" font-weight="normal">10</text></g>
<g transform="translate(0,816.00) scale(0.850,1.310)"><text x="478.12 488.47" y="0" text-anchor="middle" fill="#c8c8c8" font-family="Liberation Sans" font-size="14" font-weight="normal">11</text></g>
<g transform="translate(0,816.00) scale(0.850,1.310)"><text x="585.18 595.53" y="0" text-anchor="middle" fill="#c8c8c8" font-family="Liberation Sans" font-size="14" font-weight="normal">12</text></g>
<g transform="translate(0,816.00) scale(0.850,1.310)"><text x="681.65 692.00" y="0" text-anchor="middle" fill="#c8c8c8" font-family="Liberation Sans" font-size="14" font-weight="normal">13</text></g>
<g transform="translate(0,816.00) scale(0.850,1.310)"><text x="789.88 800.24" y="0" text-anchor="middle" fill="#c8c8c8" font-family="Liberation Sans" font-size="14" font-weight="normal">14</text></g>
<g transform="translate(0,816.00) scale(0.850,1.310)"><text x="867.53 877.88" y="0" text-anchor="middle" fill="#c8c8c8" font-family="Liberation Sans" font-size="14" font-weight="normal">15</text></g>
<g transform="translate(0,816.00) scale(0.850,1.310)"><text x="919.29 929.65" y="0" text-anchor="middle" fill="#c8c8c8" font-family="Liberation Sans" font-size="14" font-weight="normal">16</text></g>
<g transform="translate(0,816.00) scale(0.850,1.310)"><text x="975.76 986.12" y="0" text-anchor="middle" fill="#c8c8c8" font-family="Liberation Sans" font-size="14" font-weight="normal">17</text></g>
<g transform="translate(0,816.00) scale(0.850,1.310)"><text x="1084.00 1094.35" y="0" text-anchor="middle" fill="#c8c8c8" font-family="Liberation Sans" font-size="14" font-weight="normal">18</text></g>
<g transform="translate(0,816.00) scale(0.850,1.310)"><text x="1194.59 1204.94" y="0" text-anchor="middle" fill="#c8c8c8" font-family="Liberation Sans" font-size="14" font-weight="normal">19</text></g>
<g transform="translate(0,816.00) scale(0.850,1.310)"><text x="1296.94 1307.29" y="0" text-anchor="middle" fill="#c8c8c8" font-family="Liberation Sans" font-size="14" font-weight="normal">20</text></g>
<g transform="translate(0,816.00) scale(0.850,1.310)"><text x="1401.65 1412.00" y="0" text-anchor="middle" fill="#c8c8c8" font-family="Liberation Sans" font-size="14" font-weight="normal">21</text></g>
<g transform="translate(0,816.00) scale(0.850,1.310)"><text x="1514.59 1524.94" y="0" text-anchor="middle" fill="#c8c8c8" font-family="Liberation Sans" font-size="14" font-weight="normal">22</text></g>
<g transform="translate(0,816.00) scale(0.850,1.310)"><text x="1628.71 1639.06" y="0" text-anchor="middle" fill="#c8c8c8" font-family="Liberation Sans" font-size="14" font-weight="normal">23</text></g>
<g transform="translate(0,816.00) scale(0.850,1.310)"><text x="1739.29 1749.65" y="0" text-anchor="middle" fill="#c8c8c8" font-family="Liberation Sans" font-size="14" font-weight="normal">00</text></g>
<g transform="translate(0,816.00) scale(0.850,1.310)"><text x="1848.71 1859.06" y="0" text-anchor="middle" fill="#c8c8c8" font-family="Liberation Sans" font-size="14" font-weight="normal">01</text></g>
<g transform="translate(0,816.00) scale(0.850,1.310)"><text x="1949.88 1960.24" y="0" text-anchor="middle" fill="#c8c8c8" font-family="Liberation Sans" font-size="14" font-weight="normal">02</text></g>
<g transform="translate(0,816.00) scale(0.850,1.310)"><text x="2039.29 2049.65" y="0" text-anchor="middle" fill="#c8c8c8" font-family="Liberation Sans" font-size="14" font-weight="normal">03</text></g>
<g transform="translate(0,816.00) scale(0.850,1.310)"><text x="2139.29 2149.65" y="0" text-anchor="middle" fill="#c8c8c8" font-family="Liberation Sans" font-size="14" font-weight="normal">04</text></g>
<g transform="translate(0,816.00) scale(0.850,1.310)"><text x="2216.94 2227.29" y="0" text-anchor="middle" fill="#c8c8c8" font-family="Liberation Sans" font-size="14" font-weight="normal">05</text></g>
<g transform="translate(0,816.00) scale(0.850,1.310)"><text x="2240.47 2250.82" y="0" text-anchor="middle" fill="#c8c8c8" font-family="Liberation Sans" font-size="14" font-weight="normal">06</text></g>
<g transform="translate(0,792.00) scale(0.850,1.310)"><text x="1740.47 1750.82" y="0" text-anchor="middle" fill="#c8c8c8" font-family="Liberation Sans" font-size="14" font-weight="normal">18</text></g>
<rect x="9" y="832" width="2016" height="244" fill="#1b1b1b"/>
<rect x="11" y="834" width="1920" height="217" fill="#000"/>
<rect x="9" y="832" width="2" height="220" fill="#d8d8d8"/>
<rect x="9" y="832" width="1924" height="2" fill="#d8d8d8"/>
<rect x="1931" y="832" width="2" height="221" fill="#f4f4f4"/>
<rect x="9" y="1051" width="1924" height="2" fill="#f4f4f4"/>
<g stroke="#b4b4b4" stroke-width="1.5" stroke-dasharray="1.5 1.5"><line x1="54.2" y1="834" x2="54.2" y2="1051"/><line x1="102.2" y1="834" x2="102.2" y2="1051"/><line x1="146.2" y1="834" x2="146.2" y2="1051"/><line x1="183.2" y1="834" x2="183.2" y2="1051"/><line x1="186.2" y1="834" x2="186.2" y2="1051"/><line x1="210.2" y1="834" x2="210.2" y2="1051"/><line x1="304.2" y1="834" x2="304.2" y2="1051"/><line x1="399.2" y1="834" x2="399.2" y2="1051"/><line x1="490.2" y1="834" x2="490.2" y2="1051"/><line x1="571.2" y1="834" x2="571.2" y2="1051"/><line x1="663.2" y1="834" x2="663.2" y2="1051"/><line x1="755.2" y1="834" x2="755.2" y2="1051"/><line x1="773.2" y1="834" x2="773.2" y2="1051"/><line x1="821.2" y1="834" x2="821.2" y2="1051"/><line x1="914.2" y1="834" x2="914.2" y2="1051"/><line x1="1008.2" y1="834" x2="1008.2" y2="1051"/><line x1="1096.2" y1="834" x2="1096.2" y2="1051"/><line x1="1187.2" y1="834" x2="1187.2" y2="1051"/><line x1="1283.2" y1="834" x2="1283.2" y2="1051"/><line x1="1379.2" y1="834" x2="1379.2" y2="1051"/><line x1="1473.2" y1="834" x2="1473.2" y2="1051"/><line x1="1566.2" y1="834" x2="1566.2" y2="1051"/><line x1="1652.2" y1="834" x2="1652.2" y2="1051"/><line x1="1727.2" y1="834" x2="1727.2" y2="1051"/><line x1="1813.2" y1="834" x2="1813.2" y2="1051"/><line x1="1879.2" y1="834" x2="1879.2" y2="1051"/><line x1="1925.2" y1="834" x2="1925.2" y2="1051"/><line x1="11" y1="907.8" x2="1931" y2="907.8"/><line x1="11" y1="995.8" x2="1931" y2="995.8"/></g>
<path transform="translate(22.70,837.50) scale(1.0625)" d="M8 1L1 6.5M8 1L15 6.5M4.5 6.5H11.5M2.5 9.5H13.5M8 6.5V14.5M5 11L6 13M11 11L10 13M1.5 14.5H14.5" fill="none" stroke="#d4d4d4" stroke-width="1.40"/>
<path d="M159.6 840.1L171.6 852.1M171.6 840.1L159.6 852.1" stroke="#d4d4d4" stroke-width="1.2"/>
<path d="M227.8 845.6H237.8" stroke="#d4d4d4" stroke-width="1.4"/>
<path transform="translate(253.10,837.50) scale(1.0625)" d="M8.5 0.5L7 3M3.5 3H12.5V15H3.5ZM3.5 9H12.5" fill="none" stroke="#d4d4d4" stroke-width="1.40"/>
<path transform="translate(272.30,837.50) scale(1.0625)" d="M8 1L1 6.5M8 1L15 6.5M4.5 6.5H11.5M2.5 9.5H13.5M8 6.5V14.5M5 11L6 13M11 11L10 13M1.5 14.5H14.5" fill="none" stroke="#d4d4d4" stroke-width="1.40"/>
<path d="M409.2 840.1L421.2 852.1M421.2 840.1L409.2 852.1" stroke="#d4d4d4" stroke-width="1.2"/>
<path transform="translate(483.50,837.50) scale(1.0625)" d="M4 1L1.5 5L5 7.5L1.5 11H7M6 4.5L3.5 7.5M4 11V15.5M2 13L1 15M6 13L7 15M10.5 1L8.5 5M9.5 3H14.5L9.5 9M10.5 5L15.5 9M11 10L13 11.5M10 13L14 15" fill="none" stroke="#d4d4d4" stroke-width="1.40"/>
<path transform="translate(502.70,837.50) scale(1.0625)" d="M4.5 1L1.5 7M3 5V15M7 3H15.5M11 1V5M8 5H14V13H8ZM8 7.7H14M8 10.3H14M6.5 5V15H15.5" fill="none" stroke="#d4d4d4" stroke-width="1.40"/>
<path transform="translate(531.50,837.50) scale(1.0625)" d="M1.5 3H5.5V13H1.5ZM1.5 8H5.5M7 3.5H15M11 1V6M7.5 6.5H14.5M6.5 9.5H15.5M12.5 7.5V14.5L10.5 15M9 11L10.5 12.5" fill="none" stroke="#d4d4d4" stroke-width="1.40"/>
<path transform="translate(550.70,837.50) scale(1.0625)" d="M5 0.5V2.5M1 2.5H9.5M5.5 3.5L2 7.5H8L2 12.5M8 6L4 10M5 10L9.5 14.5M11.5 3V10.5M14.5 1V15L13 15" fill="none" stroke="#d4d4d4" stroke-width="1.40"/>
<g transform="translate(0,852.60) scale(0.760,1.230)"><text x="22.11 72.63 85.26 97.89 110.53 123.16 148.42 161.05 173.68 186.32 198.95 236.84 249.47 262.11 274.74 287.37 325.26 401.05 413.68 426.32 438.95 451.58 476.84 489.47 502.11 514.74 527.37 565.26 577.89 590.53 603.16 615.79 754.74 767.37 780.00 792.63 805.26 817.89 843.16 855.79 868.42 881.05 893.68" y="0" text-anchor="middle" fill="#d4d4d4" font-family="Liberation Sans" font-size="16" font-weight="normal">[23/067,6301.00][23/063,9251.00]:06:003,705</text></g>
<g transform="translate(0,903.50) scale(0.760,1.230)"><text x="2549.74 2562.37 2575.00 2587.63 2600.26" y="0" text-anchor="middle" fill="#c8c8c8" font-family="Liberation Sans" font-size="16" font-weight="normal">3,725</text></g>
<g transform="translate(0,1077.50) scale(0.760,1.230)"><text x="2549.74 2562.37 2575.00 2587.63 2600.26" y="0" text-anchor="middle" fill="#c8c8c8" font-family="Liberation Sans" font-size="16" font-weight="normal">3,675</text></g>
<rect x="1932" y="962" width="93" height="34" fill="#d4d4d4"/>
<g transform="translate(0,983.80) scale(0.850,1.300)"><text x="2303.41 2314.94 2326.47 2338.00 2349.53" y="0" text-anchor="middle" fill="#000" font-family="Liberation Sans" font-size="16" font-weight="bold">3,705</text></g>
<g transform="translate(0,1067.50) scale(0.850,1.310)"><text x="69.88 80.24" y="0" text-anchor="middle" fill="#c8c8c8" font-family="Liberation Sans" font-size="14" font-weight="normal">03</text></g>
<g transform="translate(0,1067.50) scale(0.850,1.310)"><text x="127.53 137.88" y="0" text-anchor="middle" fill="#c8c8c8" font-family="Liberation Sans" font-size="14" font-weight="normal">04</text></g>
<g transform="translate(0,1067.50) scale(0.850,1.310)"><text x="179.29 189.65" y="0" text-anchor="middle" fill="#c8c8c8" font-family="Liberation Sans" font-size="14" font-weight="normal">05</text></g>
<g transform="translate(0,1067.50) scale(0.850,1.310)"><text x="191.06 201.41" y="0" text-anchor="middle" fill="#c8c8c8" font-family="Liberation Sans" font-size="14" font-weight="normal">06</text></g>
<g transform="translate(0,1067.50) scale(0.850,1.310)"><text x="254.59 264.94" y="0" text-anchor="middle" fill="#c8c8c8" font-family="Liberation Sans" font-size="14" font-weight="normal">09</text></g>
<g transform="translate(0,1067.50) scale(0.850,1.310)"><text x="366.35 376.71" y="0" text-anchor="middle" fill="#c8c8c8" font-family="Liberation Sans" font-size="14" font-weight="normal">10</text></g>
<g transform="translate(0,1067.50) scale(0.850,1.310)"><text x="478.12 488.47" y="0" text-anchor="middle" fill="#c8c8c8" font-family="Liberation Sans" font-size="14" font-weight="normal">11</text></g>
<g transform="translate(0,1067.50) scale(0.850,1.310)"><text x="585.18 595.53" y="0" text-anchor="middle" fill="#c8c8c8" font-family="Liberation Sans" font-size="14" font-weight="normal">12</text></g>
<g transform="translate(0,1067.50) scale(0.850,1.310)"><text x="681.65 692.00" y="0" text-anchor="middle" fill="#c8c8c8" font-family="Liberation Sans" font-size="14" font-weight="normal">13</text></g>
<g transform="translate(0,1067.50) scale(0.850,1.310)"><text x="789.88 800.24" y="0" text-anchor="middle" fill="#c8c8c8" font-family="Liberation Sans" font-size="14" font-weight="normal">14</text></g>
<g transform="translate(0,1067.50) scale(0.850,1.310)"><text x="867.53 877.88" y="0" text-anchor="middle" fill="#c8c8c8" font-family="Liberation Sans" font-size="14" font-weight="normal">15</text></g>
<g transform="translate(0,1067.50) scale(0.850,1.310)"><text x="919.29 929.65" y="0" text-anchor="middle" fill="#c8c8c8" font-family="Liberation Sans" font-size="14" font-weight="normal">16</text></g>
<g transform="translate(0,1067.50) scale(0.850,1.310)"><text x="975.76 986.12" y="0" text-anchor="middle" fill="#c8c8c8" font-family="Liberation Sans" font-size="14" font-weight="normal">17</text></g>
<g transform="translate(0,1067.50) scale(0.850,1.310)"><text x="1084.00 1094.35" y="0" text-anchor="middle" fill="#c8c8c8" font-family="Liberation Sans" font-size="14" font-weight="normal">18</text></g>
<g transform="translate(0,1067.50) scale(0.850,1.310)"><text x="1194.59 1204.94" y="0" text-anchor="middle" fill="#c8c8c8" font-family="Liberation Sans" font-size="14" font-weight="normal">19</text></g>
<g transform="translate(0,1067.50) scale(0.850,1.310)"><text x="1296.94 1307.29" y="0" text-anchor="middle" fill="#c8c8c8" font-family="Liberation Sans" font-size="14" font-weight="normal">20</text></g>
<g transform="translate(0,1067.50) scale(0.850,1.310)"><text x="1401.65 1412.00" y="0" text-anchor="middle" fill="#c8c8c8" font-family="Liberation Sans" font-size="14" font-weight="normal">21</text></g>
<g transform="translate(0,1067.50) scale(0.850,1.310)"><text x="1514.59 1524.94" y="0" text-anchor="middle" fill="#c8c8c8" font-family="Liberation Sans" font-size="14" font-weight="normal">22</text></g>
<g transform="translate(0,1067.50) scale(0.850,1.310)"><text x="1628.71 1639.06" y="0" text-anchor="middle" fill="#c8c8c8" font-family="Liberation Sans" font-size="14" font-weight="normal">23</text></g>
<g transform="translate(0,1067.50) scale(0.850,1.310)"><text x="1739.29 1749.65" y="0" text-anchor="middle" fill="#c8c8c8" font-family="Liberation Sans" font-size="14" font-weight="normal">00</text></g>
<g transform="translate(0,1067.50) scale(0.850,1.310)"><text x="1848.71 1859.06" y="0" text-anchor="middle" fill="#c8c8c8" font-family="Liberation Sans" font-size="14" font-weight="normal">01</text></g>
<g transform="translate(0,1067.50) scale(0.850,1.310)"><text x="1949.88 1960.24" y="0" text-anchor="middle" fill="#c8c8c8" font-family="Liberation Sans" font-size="14" font-weight="normal">02</text></g>
<g transform="translate(0,1067.50) scale(0.850,1.310)"><text x="2039.29 2049.65" y="0" text-anchor="middle" fill="#c8c8c8" font-family="Liberation Sans" font-size="14" font-weight="normal">03</text></g>
<g transform="translate(0,1067.50) scale(0.850,1.310)"><text x="2139.29 2149.65" y="0" text-anchor="middle" fill="#c8c8c8" font-family="Liberation Sans" font-size="14" font-weight="normal">04</text></g>
<g transform="translate(0,1067.50) scale(0.850,1.310)"><text x="2216.94 2227.29" y="0" text-anchor="middle" fill="#c8c8c8" font-family="Liberation Sans" font-size="14" font-weight="normal">05</text></g>
<g transform="translate(0,1067.50) scale(0.850,1.310)"><text x="2240.47 2250.82" y="0" text-anchor="middle" fill="#c8c8c8" font-family="Liberation Sans" font-size="14" font-weight="normal">06</text></g>
<g transform="translate(0,1044.00) scale(0.850,1.310)"><text x="1740.47 1750.82" y="0" text-anchor="middle" fill="#c8c8c8" font-family="Liberation Sans" font-size="14" font-weight="normal">18</text></g>
<rect x="9" y="398" width="2016" height="1" fill="#b0b0b0"/>
<rect x="9" y="399" width="2016" height="6" fill="#f8f8f8"/>
<rect x="9" y="405" width="2016" height="1" fill="#a0a0a0"/>
<rect x="9" y="824" width="2016" height="1" fill="#b0b0b0"/>
<rect x="9" y="825" width="2016" height="6" fill="#f8f8f8"/>
<rect x="9" y="831" width="2016" height="1" fill="#a0a0a0"/>
<g>
<rect x="14.2" y="251.2" width="3.0" height="1.6" fill="#1e90ff"/>
<rect x="21.7" y="259.6" width="3.0" height="1.6" fill="#f0e68c"/>
<rect x="24.7" y="263.8" width="3.0" height="1.6" fill="#f0e68c"/>
<rect x="26.2" y="268.0" width="3.0" height="1.6" fill="#f0e68c"/>
<rect x="27.7" y="276.4" width="3.0" height="1.6" fill="#f0e68c"/>
<rect x="29.2" y="276.4" width="3.0" height="1.6" fill="#f0e68c"/>
<rect x="31.2" y="273.0" width="1.8" height="5.2" fill="#ff0000"/>
<rect x="33.7" y="268.0" width="3.0" height="1.6" fill="#f0e68c"/>
<rect x="35.7" y="260.4" width="1.8" height="9.4" fill="#ff0000"/>
<rect x="38.7" y="256.2" width="1.2" height="8.4" fill="#f0e68c"/>
<rect x="38.2" y="263.8" width="3.0" height="1.6" fill="#f0e68c"/>
<rect x="39.7" y="255.4" width="3.0" height="1.6" fill="#f0e68c"/>
<rect x="43.2" y="247.8" width="1.8" height="9.4" fill="#ff0000"/>
<rect x="47.7" y="239.4" width="1.8" height="5.2" fill="#ff0000"/>
<rect x="50.2" y="242.8" width="3.0" height="1.6" fill="#f0e68c"/>
<rect x="51.7" y="247.0" width="3.0" height="1.6" fill="#f0e68c"/>
<rect x="53.7" y="243.6" width="1.2" height="4.2" fill="#f0e68c"/>
<rect x="53.2" y="247.0" width="3.0" height="1.6" fill="#f0e68c"/>
<rect x="57.7" y="255.4" width="3.0" height="1.6" fill="#f0e68c"/>
<rect x="61.2" y="256.2" width="1.2" height="4.2" fill="#f0e68c"/>
<rect x="60.7" y="255.4" width="3.0" height="1.6" fill="#f0e68c"/>
<rect x="62.7" y="252.0" width="1.2" height="8.4" fill="#f0e68c"/>
<rect x="62.2" y="255.4" width="3.0" height="1.6" fill="#f0e68c"/>
<rect x="65.7" y="252.0" width="1.2" height="4.2" fill="#f0e68c"/>
<rect x="65.2" y="255.4" width="3.0" height="1.6" fill="#f0e68c"/>
<rect x="68.2" y="251.2" width="3.0" height="1.6" fill="#f0e68c"/>
<rect x="69.7" y="255.4" width="3.0" height="1.6" fill="#f0e68c"/>
<rect x="74.2" y="255.4" width="3.0" height="1.6" fill="#ff0000"/>
<rect x="79.2" y="252.0" width="1.8" height="5.2" fill="#ff0000"/>
<rect x="81.7" y="255.4" width="3.0" height="1.6" fill="#f0e68c"/>
<rect x="83.2" y="259.6" width="3.0" height="1.6" fill="#f0e68c"/>
<rect x="86.2" y="268.0" width="3.0" height="1.6" fill="#f0e68c"/>
<rect x="92.2" y="280.6" width="3.0" height="1.6" fill="#f0e68c"/>
<rect x="93.7" y="276.4" width="3.0" height="1.6" fill="#f0e68c"/>
<rect x="102.7" y="268.0" width="3.0" height="1.6" fill="#f0e68c"/>
<rect x="104.2" y="272.2" width="3.0" height="1.6" fill="#f0e68c"/>
<rect x="107.7" y="268.8" width="1.2" height="8.4" fill="#f0e68c"/>
<rect x="107.2" y="272.2" width="3.0" height="1.6" fill="#f0e68c"/>
<rect x="109.2" y="268.8" width="1.2" height="4.2" fill="#f0e68c"/>
<rect x="108.7" y="272.2" width="3.0" height="1.6" fill="#f0e68c"/>
<rect x="110.2" y="276.4" width="3.0" height="1.6" fill="#f0e68c"/>
<rect x="112.2" y="277.2" width="1.2" height="4.2" fill="#f0e68c"/>
<rect x="111.7" y="276.4" width="3.0" height="1.6" fill="#f0e68c"/>
<rect x="113.7" y="277.2" width="1.2" height="4.2" fill="#f0e68c"/>
<rect x="113.2" y="276.4" width="3.0" height="1.6" fill="#f0e68c"/>
<rect x="116.2" y="280.6" width="3.0" height="1.6" fill="#f0e68c"/>
<rect x="118.2" y="277.2" width="1.2" height="4.2" fill="#f0e68c"/>
<rect x="117.7" y="280.6" width="3.0" height="1.6" fill="#f0e68c"/>
<rect x="119.2" y="276.4" width="3.0" height="1.6" fill="#f0e68c"/>
<rect x="120.7" y="272.2" width="3.0" height="1.6" fill="#f0e68c"/>
<rect x="122.2" y="272.2" width="3.0" height="1.6" fill="#f0e68c"/>
<rect x="125.7" y="268.8" width="1.8" height="5.2" fill="#ff0000"/>
<rect x="130.2" y="264.6" width="1.8" height="9.4" fill="#ff0000"/>
<rect x="132.7" y="263.8" width="3.0" height="1.6" fill="#f0e68c"/>
<rect x="136.2" y="260.4" width="1.8" height="22.0" fill="#1e90ff"/>
<rect x="140.7" y="273.0" width="1.8" height="5.2" fill="#1e90ff"/>
<rect x="142.2" y="277.2" width="1.2" height="4.2" fill="#f0e68c"/>
<rect x="141.7" y="276.4" width="3.0" height="1.6" fill="#f0e68c"/>
<rect x="144.7" y="284.8" width="3.0" height="1.6" fill="#f0e68c"/>
<rect x="147.7" y="289.0" width="3.0" height="1.6" fill="#f0e68c"/>
<rect x="149.2" y="293.2" width="3.0" height="1.6" fill="#f0e68c"/>
<rect x="150.7" y="293.2" width="3.0" height="1.6" fill="#f0e68c"/>
<rect x="153.7" y="293.2" width="3.0" height="1.6" fill="#f0e68c"/>
<rect x="156.7" y="284.8" width="3.0" height="1.6" fill="#f0e68c"/>
<rect x="158.7" y="285.6" width="1.2" height="4.2" fill="#f0e68c"/>
<rect x="158.2" y="284.8" width="3.0" height="1.6" fill="#f0e68c"/>
<rect x="159.7" y="280.6" width="3.0" height="1.6" fill="#f0e68c"/>
<rect x="161.7" y="277.2" width="1.8" height="9.4" fill="#ff0000"/>
<rect x="163.2" y="273.0" width="1.8" height="5.2" fill="#ff0000"/>
<rect x="164.7" y="273.0" width="1.2" height="4.2" fill="#f0e68c"/>
<rect x="164.2" y="272.2" width="3.0" height="1.6" fill="#f0e68c"/>
<rect x="168.7" y="284.8" width="3.0" height="1.6" fill="#f0e68c"/>
<rect x="170.7" y="281.4" width="1.2" height="4.2" fill="#1e90ff"/>
<rect x="170.2" y="284.8" width="3.0" height="1.6" fill="#1e90ff"/>
<rect x="172.2" y="285.6" width="1.8" height="9.4" fill="#1e90ff"/>
<rect x="174.7" y="297.4" width="3.0" height="1.6" fill="#f0e68c"/>
<rect x="176.2" y="305.8" width="3.0" height="1.6" fill="#f0e68c"/>
<rect x="177.7" y="301.6" width="3.0" height="1.6" fill="#f0e68c"/>
<rect x="179.2" y="297.4" width="3.0" height="1.6" fill="#f0e68c"/>
<rect x="190.2" y="273.0" width="1.2" height="8.4" fill="#f0e68c"/>
<rect x="189.7" y="276.4" width="3.0" height="1.6" fill="#f0e68c"/>
<rect x="194.7" y="273.0" width="1.2" height="4.2" fill="#f0e68c"/>
<rect x="194.2" y="272.2" width="3.0" height="1.6" fill="#f0e68c"/>
<rect x="196.2" y="268.8" width="1.2" height="8.4" fill="#f0e68c"/>
<rect x="195.7" y="272.2" width="3.0" height="1.6" fill="#f0e68c"/>
<rect x="199.2" y="252.0" width="1.2" height="21.0" fill="#f0e68c"/>
<rect x="198.7" y="268.0" width="3.0" height="1.6" fill="#f0e68c"/>
<rect x="200.2" y="268.0" width="3.0" height="1.6" fill="#f0e68c"/>
<rect x="201.7" y="272.2" width="3.0" height="1.6" fill="#f0e68c"/>
<rect x="203.2" y="272.2" width="3.0" height="1.6" fill="#f0e68c"/>
<rect x="205.2" y="273.0" width="1.2" height="4.2" fill="#f0e68c"/>
<rect x="204.7" y="272.2" width="3.0" height="1.6" fill="#f0e68c"/>
<rect x="206.2" y="272.2" width="3.0" height="1.6" fill="#f0e68c"/>
<rect x="209.7" y="273.0" width="1.2" height="4.2" fill="#f0e68c"/>
<rect x="209.2" y="272.2" width="3.0" height="1.6" fill="#f0e68c"/>
<rect x="211.2" y="268.8" width="1.2" height="4.2" fill="#f0e68c"/>
<rect x="210.7" y="272.2" width="3.0" height="1.6" fill="#f0e68c"/>
<rect x="212.2" y="268.0" width="3.0" height="1.6" fill="#f0e68c"/>
<rect x="214.2" y="260.4" width="1.8" height="9.4" fill="#ff0000"/>
<rect x="216.7" y="259.6" width="3.0" height="1.6" fill="#f0e68c"/>
<rect x="218.7" y="260.4" width="1.2" height="4.2" fill="#f0e68c"/>
<rect x="218.2" y="259.6" width="3.0" height="1.6" fill="#f0e68c"/>
<rect x="219.7" y="255.4" width="3.0" height="1.6" fill="#f0e68c"/>
<rect x="221.2" y="255.4" width="3.0" height="1.6" fill="#f0e68c"/>
<rect x="223.2" y="247.8" width="1.2" height="12.6" fill="#1e90ff"/>
<rect x="222.7" y="255.4" width="3.0" height="1.6" fill="#1e90ff"/>
<rect x="224.2" y="255.4" width="3.0" height="1.6" fill="#ff0000"/>
<rect x="226.2" y="247.8" width="1.8" height="13.6" fill="#ff0000"/>
<rect x="228.7" y="251.2" width="3.0" height="1.6" fill="#f0e68c"/>
<rect x="230.2" y="251.2" width="3.0" height="1.6" fill="#ff0000"/>
<rect x="235.2" y="247.8" width="1.2" height="4.2" fill="#f0e68c"/>
<rect x="234.7" y="251.2" width="3.0" height="1.6" fill="#f0e68c"/>
<rect x="236.7" y="247.8" width="1.2" height="8.4" fill="#ff0000"/>
<rect x="236.2" y="251.2" width="3.0" height="1.6" fill="#ff0000"/>
<rect x="238.2" y="243.6" width="1.2" height="8.4" fill="#f0e68c"/>
<rect x="237.7" y="251.2" width="3.0" height="1.6" fill="#f0e68c"/>
<rect x="239.2" y="255.4" width="3.0" height="1.6" fill="#f0e68c"/>
<rect x="240.7" y="263.8" width="3.0" height="1.6" fill="#f0e68c"/>
<rect x="245.2" y="276.4" width="3.0" height="1.6" fill="#f0e68c"/>
<rect x="246.7" y="280.6" width="3.0" height="1.6" fill="#f0e68c"/>
<rect x="248.7" y="277.2" width="1.2" height="8.4" fill="#f0e68c"/>
<rect x="248.2" y="280.6" width="3.0" height="1.6" fill="#f0e68c"/>
<rect x="249.7" y="280.6" width="3.0" height="1.6" fill="#f0e68c"/>
<rect x="253.2" y="273.0" width="1.8" height="9.4" fill="#ff0000"/>
<rect x="254.7" y="277.2" width="1.8" height="5.2" fill="#1e90ff"/>
<rect x="256.2" y="281.4" width="1.2" height="4.2" fill="#f0e68c"/>
<rect x="255.7" y="280.6" width="3.0" height="1.6" fill="#f0e68c"/>
<rect x="259.2" y="277.2" width="1.2" height="4.2" fill="#f0e68c"/>
<rect x="258.7" y="280.6" width="3.0" height="1.6" fill="#f0e68c"/>
<rect x="260.7" y="277.2" width="1.2" height="4.2" fill="#f0e68c"/>
<rect x="260.2" y="280.6" width="3.0" height="1.6" fill="#f0e68c"/>
<rect x="263.2" y="280.6" width="3.0" height="1.6" fill="#f0e68c"/>
<rect x="264.7" y="284.8" width="3.0" height="1.6" fill="#f0e68c"/>
<rect x="269.7" y="277.2" width="1.8" height="9.4" fill="#ff0000"/>
<rect x="272.2" y="293.2" width="3.0" height="1.6" fill="#f0e68c"/>
<rect x="274.2" y="294.0" width="1.2" height="4.2" fill="#1e90ff"/>
<rect x="273.7" y="293.2" width="3.0" height="1.6" fill="#1e90ff"/>
<rect x="275.7" y="289.8" width="1.2" height="8.4" fill="#ff0000"/>
<rect x="275.2" y="293.2" width="3.0" height="1.6" fill="#ff0000"/>
<rect x="277.2" y="289.8" width="1.2" height="4.2" fill="#f0e68c"/>
<rect x="276.7" y="293.2" width="3.0" height="1.6" fill="#f0e68c"/>
<rect x="280.2" y="289.8" width="1.2" height="8.4" fill="#f0e68c"/>
<rect x="279.7" y="293.2" width="3.0" height="1.6" fill="#f0e68c"/>
<rect x="281.2" y="293.2" width="3.0" height="1.6" fill="#1e90ff"/>
<rect x="282.7" y="293.2" width="3.0" height="1.6" fill="#f0e68c"/>
<rect x="284.7" y="294.0" width="1.2" height="4.2" fill="#f0e68c"/>
<rect x="284.2" y="293.2" width="3.0" height="1.6" fill="#f0e68c"/>
<rect x="285.7" y="293.2" width="3.0" height="1.6" fill="#ff0000"/>
<rect x="288.7" y="293.2" width="3.0" height="1.6" fill="#1e90ff"/>
<rect x="290.7" y="289.8" width="1.2" height="4.2" fill="#f0e68c"/>
<rect x="290.2" y="293.2" width="3.0" height="1.6" fill="#f0e68c"/>
<rect x="291.7" y="293.2" width="3.0" height="1.6" fill="#f0e68c"/>
<rect x="294.7" y="293.2" width="3.0" height="1.6" fill="#f0e68c"/>
<rect x="296.2" y="301.6" width="3.0" height="1.6" fill="#f0e68c"/>
<rect x="297.7" y="310.0" width="3.0" height="1.6" fill="#f0e68c"/>
<rect x="299.2" y="318.4" width="3.0" height="1.6" fill="#f0e68c"/>
<rect x="301.2" y="319.2" width="1.8" height="9.4" fill="#1e90ff"/>
<rect x="304.2" y="331.8" width="1.8" height="13.6" fill="#f0e68c"/>
<rect x="305.7" y="340.2" width="1.8" height="5.2" fill="#1e90ff"/>
<rect x="307.2" y="340.2" width="1.8" height="5.2" fill="#ff0000"/>
<rect x="308.7" y="327.6" width="1.8" height="17.8" fill="#ff0000"/>
<rect x="310.2" y="331.8" width="1.2" height="8.4" fill="#f0e68c"/>
<rect x="309.7" y="335.2" width="3.0" height="1.6" fill="#f0e68c"/>
<rect x="311.7" y="327.6" width="1.8" height="9.4" fill="#ff0000"/>
<rect x="312.7" y="326.8" width="3.0" height="1.6" fill="#1e90ff"/>
<rect x="314.7" y="319.2" width="1.8" height="9.4" fill="#f0e68c"/>
<rect x="316.2" y="319.2" width="1.8" height="5.2" fill="#ff0000"/>
<rect x="317.7" y="315.0" width="1.2" height="4.2" fill="#f0e68c"/>
<rect x="317.2" y="318.4" width="3.0" height="1.6" fill="#f0e68c"/>
<rect x="319.2" y="310.8" width="1.8" height="9.4" fill="#ff0000"/>
<rect x="320.7" y="310.8" width="1.8" height="9.4" fill="#ff0000"/>
<rect x="322.2" y="302.4" width="1.8" height="9.4" fill="#ff0000"/>
<rect x="323.7" y="298.2" width="1.8" height="13.6" fill="#ff0000"/>
<rect x="326.7" y="294.0" width="1.8" height="13.6" fill="#ff0000"/>
<rect x="328.2" y="294.0" width="1.8" height="5.2" fill="#ff0000"/>
<rect x="329.7" y="289.8" width="1.2" height="4.2" fill="#f0e68c"/>
<rect x="329.2" y="293.2" width="3.0" height="1.6" fill="#f0e68c"/>
<rect x="331.2" y="289.8" width="1.2" height="4.2" fill="#f0e68c"/>
<rect x="330.7" y="293.2" width="3.0" height="1.6" fill="#f0e68c"/>
<rect x="332.7" y="294.0" width="1.2" height="4.2" fill="#f0e68c"/>
<rect x="332.2" y="293.2" width="3.0" height="1.6" fill="#f0e68c"/>
<rect x="334.2" y="289.8" width="1.8" height="9.4" fill="#1e90ff"/>
<rect x="335.2" y="297.4" width="3.0" height="1.6" fill="#f0e68c"/>
<rect x="337.2" y="298.2" width="1.8" height="9.4" fill="#1e90ff"/>
<rect x="338.2" y="301.6" width="3.0" height="1.6" fill="#f0e68c"/>
<rect x="340.2" y="302.4" width="1.8" height="5.2" fill="#1e90ff"/>
<rect x="341.2" y="305.8" width="3.0" height="1.6" fill="#f0e68c"/>
<rect x="343.2" y="306.6" width="1.8" height="9.4" fill="#ff0000"/>
<rect x="344.7" y="306.6" width="1.2" height="4.2" fill="#1e90ff"/>
<rect x="344.2" y="310.0" width="3.0" height="1.6" fill="#1e90ff"/>
<rect x="346.2" y="310.8" width="1.2" height="4.2" fill="#f0e68c"/>
<rect x="345.7" y="310.0" width="3.0" height="1.6" fill="#f0e68c"/>
<rect x="347.2" y="310.0" width="3.0" height="1.6" fill="#f0e68c"/>
<rect x="349.2" y="306.6" width="1.8" height="13.6" fill="#1e90ff"/>
<rect x="352.2" y="310.8" width="1.2" height="4.2" fill="#f0e68c"/>
<rect x="351.7" y="314.2" width="3.0" height="1.6" fill="#f0e68c"/>
<rect x="353.7" y="306.6" width="1.8" height="9.4" fill="#ff0000"/>
<rect x="355.2" y="302.4" width="1.8" height="9.4" fill="#ff0000"/>
<rect x="358.2" y="289.8" width="1.8" height="9.4" fill="#ff0000"/>
<rect x="359.7" y="289.8" width="1.8" height="9.4" fill="#1e90ff"/>
<rect x="360.7" y="297.4" width="3.0" height="1.6" fill="#f0e68c"/>
<rect x="362.7" y="294.0" width="1.8" height="13.6" fill="#1e90ff"/>
<rect x="365.7" y="302.4" width="1.8" height="5.2" fill="#1e90ff"/>
<rect x="367.2" y="294.0" width="1.2" height="16.8" fill="#f0e68c"/>
<rect x="366.7" y="305.8" width="3.0" height="1.6" fill="#f0e68c"/>
<rect x="371.7" y="310.8" width="1.8" height="5.2" fill="#ff0000"/>
<rect x="373.2" y="310.8" width="1.2" height="4.2" fill="#f0e68c"/>
<rect x="372.7" y="314.2" width="3.0" height="1.6" fill="#f0e68c"/>
<rect x="376.2" y="315.0" width="1.2" height="4.2" fill="#f0e68c"/>
<rect x="375.7" y="318.4" width="3.0" height="1.6" fill="#f0e68c"/>
<rect x="377.7" y="319.2" width="1.8" height="5.2" fill="#1e90ff"/>
<rect x="380.7" y="327.6" width="1.8" height="5.2" fill="#1e90ff"/>
<rect x="382.2" y="327.6" width="1.2" height="4.2" fill="#f0e68c"/>
<rect x="381.7" y="331.0" width="3.0" height="1.6" fill="#f0e68c"/>
<rect x="383.7" y="331.8" width="1.8" height="9.4" fill="#1e90ff"/>
<rect x="384.7" y="335.2" width="3.0" height="1.6" fill="#f0e68c"/>
<rect x="389.7" y="336.0" width="1.8" height="9.4" fill="#1e90ff"/>
<rect x="392.7" y="344.4" width="1.8" height="9.4" fill="#1e90ff"/>
<rect x="393.7" y="347.8" width="3.0" height="1.6" fill="#1e90ff"/>
<rect x="395.7" y="344.4" width="1.8" height="5.2" fill="#ff0000"/>
<rect x="396.7" y="343.6" width="3.0" height="1.6" fill="#f0e68c"/>
<rect x="398.7" y="340.2" width="1.8" height="5.2" fill="#ff0000"/>
<rect x="400.2" y="336.0" width="1.8" height="5.2" fill="#ff0000"/>
<rect x="401.2" y="335.2" width="3.0" height="1.6" fill="#f0e68c"/>
<rect x="403.2" y="331.8" width="1.8" height="5.2" fill="#ff0000"/>
<rect x="404.7" y="331.8" width="1.2" height="4.2" fill="#ff0000"/>
<rect x="404.2" y="331.0" width="3.0" height="1.6" fill="#ff0000"/>
<rect x="406.2" y="331.8" width="1.8" height="9.4" fill="#1e90ff"/>
<rect x="407.7" y="340.2" width="1.8" height="5.2" fill="#1e90ff"/>
<rect x="409.2" y="344.4" width="1.8" height="13.6" fill="#1e90ff"/>
<rect x="410.7" y="344.4" width="1.8" height="17.8" fill="#1e90ff"/>
<rect x="412.2" y="352.8" width="1.8" height="5.2" fill="#ff0000"/>
<rect x="413.7" y="352.8" width="1.2" height="4.2" fill="#f0e68c"/>
<rect x="413.2" y="352.0" width="3.0" height="1.6" fill="#f0e68c"/>
<rect x="416.7" y="340.2" width="1.8" height="9.4" fill="#ff0000"/>
<rect x="418.2" y="336.0" width="1.8" height="9.4" fill="#ff0000"/>
<rect x="419.7" y="336.0" width="1.8" height="5.2" fill="#ff0000"/>
<rect x="421.2" y="336.0" width="1.2" height="4.2" fill="#1e90ff"/>
<rect x="420.7" y="335.2" width="3.0" height="1.6" fill="#1e90ff"/>
<rect x="422.7" y="331.8" width="1.8" height="9.4" fill="#ff0000"/>
<rect x="423.7" y="331.0" width="3.0" height="1.6" fill="#f0e68c"/>
<rect x="425.7" y="327.6" width="1.8" height="5.2" fill="#ff0000"/>
<rect x="427.2" y="327.6" width="1.2" height="4.2" fill="#f0e68c"/>
<rect x="426.7" y="326.8" width="3.0" height="1.6" fill="#f0e68c"/>
<rect x="428.7" y="327.6" width="1.2" height="4.2" fill="#f0e68c"/>
<rect x="428.2" y="326.8" width="3.0" height="1.6" fill="#f0e68c"/>
<rect x="430.2" y="319.2" width="1.8" height="13.6" fill="#ff0000"/>
<rect x="431.7" y="319.2" width="1.2" height="4.2" fill="#f0e68c"/>
<rect x="431.2" y="322.6" width="3.0" height="1.6" fill="#f0e68c"/>
<rect x="433.2" y="319.2" width="1.8" height="5.2" fill="#ff0000"/>
<rect x="434.7" y="315.0" width="1.2" height="8.4" fill="#1e90ff"/>
<rect x="434.2" y="318.4" width="3.0" height="1.6" fill="#1e90ff"/>
<rect x="436.2" y="310.8" width="1.8" height="13.6" fill="#ff0000"/>
<rect x="437.7" y="306.6" width="1.8" height="13.6" fill="#1e90ff"/>
<rect x="438.7" y="314.2" width="3.0" height="1.6" fill="#f0e68c"/>
<rect x="440.2" y="318.4" width="3.0" height="1.6" fill="#f0e68c"/>
<rect x="441.7" y="318.4" width="3.0" height="1.6" fill="#f0e68c"/>
<rect x="443.7" y="319.2" width="1.2" height="4.2" fill="#f0e68c"/>
<rect x="443.2" y="318.4" width="3.0" height="1.6" fill="#f0e68c"/>
<rect x="446.7" y="315.0" width="1.8" height="5.2" fill="#ff0000"/>
<rect x="448.2" y="310.8" width="1.8" height="5.2" fill="#ff0000"/>
<rect x="449.2" y="305.8" width="3.0" height="1.6" fill="#f0e68c"/>
<rect x="450.7" y="301.6" width="3.0" height="1.6" fill="#f0e68c"/>
<rect x="454.2" y="302.4" width="1.2" height="4.2" fill="#1e90ff"/>
<rect x="453.7" y="301.6" width="3.0" height="1.6" fill="#1e90ff"/>
<rect x="455.2" y="297.4" width="3.0" height="1.6" fill="#f0e68c"/>
<rect x="458.2" y="305.8" width="3.0" height="1.6" fill="#f0e68c"/>
<rect x="460.2" y="294.0" width="1.2" height="12.6" fill="#f0e68c"/>
<rect x="459.7" y="305.8" width="3.0" height="1.6" fill="#f0e68c"/>
<rect x="462.7" y="310.0" width="3.0" height="1.6" fill="#f0e68c"/>
<rect x="464.2" y="314.2" width="3.0" height="1.6" fill="#f0e68c"/>
<rect x="466.2" y="315.0" width="1.2" height="4.2" fill="#f0e68c"/>
<rect x="465.7" y="314.2" width="3.0" height="1.6" fill="#f0e68c"/>
<rect x="467.7" y="310.8" width="1.8" height="9.4" fill="#ff0000"/>
<rect x="468.7" y="310.0" width="3.0" height="1.6" fill="#f0e68c"/>
<rect x="470.2" y="305.8" width="3.0" height="1.6" fill="#f0e68c"/>
<rect x="473.2" y="301.6" width="3.0" height="1.6" fill="#f0e68c"/>
<rect x="474.7" y="297.4" width="3.0" height="1.6" fill="#f0e68c"/>
<rect x="476.2" y="297.4" width="3.0" height="1.6" fill="#f0e68c"/>
<rect x="478.2" y="298.2" width="1.2" height="4.2" fill="#f0e68c"/>
<rect x="477.7" y="297.4" width="3.0" height="1.6" fill="#f0e68c"/>
<rect x="479.7" y="294.0" width="1.8" height="5.2" fill="#ff0000"/>
<rect x="482.2" y="289.0" width="3.0" height="1.6" fill="#f0e68c"/>
<rect x="485.2" y="293.2" width="3.0" height="1.6" fill="#f0e68c"/>
<rect x="487.2" y="289.8" width="1.8" height="9.4" fill="#ff0000"/>
<rect x="490.2" y="285.6" width="1.8" height="5.2" fill="#ff0000"/>
<rect x="491.2" y="284.8" width="3.0" height="1.6" fill="#f0e68c"/>
<rect x="492.7" y="284.8" width="3.0" height="1.6" fill="#f0e68c"/>
<rect x="494.7" y="281.4" width="1.8" height="13.6" fill="#1e90ff"/>
<rect x="495.7" y="289.0" width="3.0" height="1.6" fill="#f0e68c"/>
<rect x="497.7" y="289.8" width="1.2" height="4.2" fill="#1e90ff"/>
<rect x="497.2" y="289.0" width="3.0" height="1.6" fill="#1e90ff"/>
<rect x="498.7" y="293.2" width="3.0" height="1.6" fill="#f0e68c"/>
<rect x="500.2" y="293.2" width="3.0" height="1.6" fill="#f0e68c"/>
<rect x="501.7" y="293.2" width="3.0" height="1.6" fill="#f0e68c"/>
<rect x="503.7" y="289.8" width="1.2" height="4.2" fill="#f0e68c"/>
<rect x="503.2" y="293.2" width="3.0" height="1.6" fill="#f0e68c"/>
<rect x="505.2" y="294.0" width="1.2" height="8.4" fill="#f0e68c"/>
<rect x="504.7" y="293.2" width="3.0" height="1.6" fill="#f0e68c"/>
<rect x="506.2" y="297.4" width="3.0" height="1.6" fill="#f0e68c"/>
<rect x="510.7" y="297.4" width="3.0" height="1.6" fill="#f0e68c"/>
<rect x="513.7" y="297.4" width="3.0" height="1.6" fill="#f0e68c"/>
<rect x="515.7" y="289.8" width="1.2" height="8.4" fill="#f0e68c"/>
<rect x="515.2" y="297.4" width="3.0" height="1.6" fill="#f0e68c"/>
<rect x="516.7" y="297.4" width="3.0" height="1.6" fill="#1e90ff"/>
<rect x="521.7" y="294.0" width="1.2" height="8.4" fill="#f0e68c"/>
<rect x="521.2" y="297.4" width="3.0" height="1.6" fill="#f0e68c"/>
<rect x="522.7" y="301.6" width="3.0" height="1.6" fill="#f0e68c"/>
<rect x="526.2" y="302.4" width="1.8" height="9.4" fill="#1e90ff"/>
<rect x="527.2" y="305.8" width="3.0" height="1.6" fill="#f0e68c"/>
<rect x="530.2" y="310.0" width="3.0" height="1.6" fill="#f0e68c"/>
<rect x="532.2" y="310.8" width="1.2" height="4.2" fill="#f0e68c"/>
<rect x="531.7" y="310.0" width="3.0" height="1.6" fill="#f0e68c"/>
<rect x="533.2" y="310.0" width="3.0" height="1.6" fill="#f0e68c"/>
<rect x="536.2" y="314.2" width="3.0" height="1.6" fill="#f0e68c"/>
<rect x="539.2" y="310.0" width="3.0" height="1.6" fill="#f0e68c"/>
<rect x="541.2" y="306.6" width="1.2" height="4.2" fill="#f0e68c"/>
<rect x="540.7" y="310.0" width="3.0" height="1.6" fill="#f0e68c"/>
<rect x="542.7" y="306.6" width="1.2" height="8.4" fill="#f0e68c"/>
<rect x="542.2" y="310.0" width="3.0" height="1.6" fill="#f0e68c"/>
<rect x="544.2" y="302.4" width="1.2" height="12.6" fill="#f0e68c"/>
<rect x="543.7" y="310.0" width="3.0" height="1.6" fill="#f0e68c"/>
<rect x="545.7" y="310.8" width="1.8" height="9.4" fill="#1e90ff"/>
<rect x="548.7" y="310.8" width="1.2" height="4.2" fill="#1e90ff"/>
<rect x="548.2" y="314.2" width="3.0" height="1.6" fill="#1e90ff"/>
<rect x="550.2" y="310.8" width="1.2" height="8.4" fill="#f0e68c"/>
<rect x="549.7" y="314.2" width="3.0" height="1.6" fill="#f0e68c"/>
<rect x="551.7" y="315.0" width="1.2" height="4.2" fill="#f0e68c"/>
<rect x="551.2" y="314.2" width="3.0" height="1.6" fill="#f0e68c"/>
<rect x="560.7" y="310.8" width="1.8" height="5.2" fill="#ff0000"/>
<rect x="564.7" y="310.0" width="3.0" height="1.6" fill="#f0e68c"/>
<rect x="567.7" y="305.8" width="3.0" height="1.6" fill="#f0e68c"/>
<rect x="569.2" y="305.8" width="3.0" height="1.6" fill="#f0e68c"/>
<rect x="570.7" y="305.8" width="3.0" height="1.6" fill="#f0e68c"/>
<rect x="572.2" y="305.8" width="3.0" height="1.6" fill="#f0e68c"/>
<rect x="573.7" y="301.6" width="3.0" height="1.6" fill="#f0e68c"/>
<rect x="575.2" y="301.6" width="3.0" height="1.6" fill="#f0e68c"/>
<rect x="576.7" y="301.6" width="3.0" height="1.6" fill="#f0e68c"/>
<rect x="579.7" y="301.6" width="3.0" height="1.6" fill="#f0e68c"/>
<rect x="581.2" y="301.6" width="3.0" height="1.6" fill="#f0e68c"/>
<rect x="583.2" y="298.2" width="1.8" height="5.2" fill="#ff0000"/>
<rect x="584.2" y="293.2" width="3.0" height="1.6" fill="#f0e68c"/>
<rect x="589.2" y="289.8" width="1.8" height="9.4" fill="#ff0000"/>
<rect x="590.7" y="285.6" width="1.2" height="4.2" fill="#f0e68c"/>
<rect x="590.2" y="289.0" width="3.0" height="1.6" fill="#f0e68c"/>
<rect x="591.7" y="284.8" width="3.0" height="1.6" fill="#f0e68c"/>
<rect x="593.7" y="285.6" width="1.2" height="8.4" fill="#f0e68c"/>
<rect x="593.2" y="284.8" width="3.0" height="1.6" fill="#f0e68c"/>
<rect x="594.7" y="289.0" width="3.0" height="1.6" fill="#f0e68c"/>
<rect x="596.2" y="284.8" width="3.0" height="1.6" fill="#f0e68c"/>
<rect x="597.7" y="289.0" width="3.0" height="1.6" fill="#f0e68c"/>
<rect x="599.7" y="281.4" width="1.8" height="9.4" fill="#1e90ff"/>
<rect x="603.7" y="284.8" width="3.0" height="1.6" fill="#f0e68c"/>
<rect x="605.7" y="281.4" width="1.2" height="4.2" fill="#f0e68c"/>
<rect x="605.2" y="284.8" width="3.0" height="1.6" fill="#f0e68c"/>
<rect x="606.7" y="280.6" width="3.0" height="1.6" fill="#f0e68c"/>
<rect x="612.7" y="272.2" width="3.0" height="1.6" fill="#f0e68c"/>
<rect x="614.2" y="268.0" width="3.0" height="1.6" fill="#f0e68c"/>
<rect x="615.7" y="268.0" width="3.0" height="1.6" fill="#f0e68c"/>
<rect x="617.2" y="263.8" width="3.0" height="1.6" fill="#f0e68c"/>
<rect x="618.7" y="263.8" width="3.0" height="1.6" fill="#f0e68c"/>
<rect x="621.7" y="259.6" width="3.0" height="1.6" fill="#f0e68c"/>
<rect x="623.2" y="259.6" width="3.0" height="1.6" fill="#f0e68c"/>
<rect x="626.7" y="252.0" width="1.2" height="8.4" fill="#f0e68c"/>
<rect x="626.2" y="255.4" width="3.0" height="1.6" fill="#f0e68c"/>
<rect x="627.7" y="251.2" width="3.0" height="1.6" fill="#f0e68c"/>
<rect x="629.2" y="251.2" width="3.0" height="1.6" fill="#f0e68c"/>
<rect x="631.2" y="247.8" width="1.2" height="8.4" fill="#f0e68c"/>
<rect x="630.7" y="251.2" width="3.0" height="1.6" fill="#f0e68c"/>
<rect x="632.7" y="247.8" width="1.2" height="4.2" fill="#f0e68c"/>
<rect x="632.2" y="251.2" width="3.0" height="1.6" fill="#f0e68c"/>
<rect x="633.7" y="247.0" width="3.0" height="1.6" fill="#f0e68c"/>
<rect x="635.7" y="243.6" width="1.2" height="4.2" fill="#f0e68c"/>
<rect x="635.2" y="247.0" width="3.0" height="1.6" fill="#f0e68c"/>
<rect x="638.2" y="247.0" width="3.0" height="1.6" fill="#f0e68c"/>
<rect x="639.7" y="247.0" width="3.0" height="1.6" fill="#f0e68c"/>
<rect x="641.2" y="247.0" width="3.0" height="1.6" fill="#f0e68c"/>
<rect x="645.7" y="247.0" width="3.0" height="1.6" fill="#f0e68c"/>
<rect x="647.7" y="243.6" width="1.2" height="4.2" fill="#f0e68c"/>
<rect x="647.2" y="247.0" width="3.0" height="1.6" fill="#f0e68c"/>
<rect x="648.7" y="242.8" width="3.0" height="1.6" fill="#f0e68c"/>
<rect x="650.7" y="243.6" width="1.8" height="5.2" fill="#1e90ff"/>
<rect x="652.2" y="243.6" width="1.8" height="5.2" fill="#ff0000"/>
<rect x="653.7" y="243.6" width="1.2" height="4.2" fill="#f0e68c"/>
<rect x="653.2" y="242.8" width="3.0" height="1.6" fill="#f0e68c"/>
<rect x="654.7" y="242.8" width="3.0" height="1.6" fill="#f0e68c"/>
<rect x="658.2" y="239.4" width="1.2" height="4.2" fill="#f0e68c"/>
<rect x="657.7" y="242.8" width="3.0" height="1.6" fill="#f0e68c"/>
<rect x="659.2" y="242.8" width="3.0" height="1.6" fill="#f0e68c"/>
<rect x="661.2" y="239.4" width="1.8" height="9.4" fill="#ff0000"/>
<rect x="662.7" y="239.4" width="1.2" height="4.2" fill="#f0e68c"/>
<rect x="662.2" y="238.6" width="3.0" height="1.6" fill="#f0e68c"/>
<rect x="663.7" y="238.6" width="3.0" height="1.6" fill="#f0e68c"/>
<rect x="665.7" y="239.4" width="1.2" height="4.2" fill="#f0e68c"/>
<rect x="665.2" y="238.6" width="3.0" height="1.6" fill="#f0e68c"/>
<rect x="667.2" y="239.4" width="1.8" height="9.4" fill="#1e90ff"/>
<rect x="668.2" y="247.0" width="3.0" height="1.6" fill="#f0e68c"/>
<rect x="670.2" y="247.8" width="1.8" height="9.4" fill="#1e90ff"/>
<rect x="671.2" y="251.2" width="3.0" height="1.6" fill="#f0e68c"/>
<rect x="672.7" y="251.2" width="3.0" height="1.6" fill="#f0e68c"/>
<rect x="676.2" y="252.0" width="1.2" height="4.2" fill="#f0e68c"/>
<rect x="675.7" y="251.2" width="3.0" height="1.6" fill="#f0e68c"/>
<rect x="677.7" y="247.8" width="1.2" height="4.2" fill="#f0e68c"/>
<rect x="677.2" y="251.2" width="3.0" height="1.6" fill="#f0e68c"/>
<rect x="679.2" y="247.8" width="1.2" height="4.2" fill="#f0e68c"/>
<rect x="678.7" y="251.2" width="3.0" height="1.6" fill="#f0e68c"/>
<rect x="680.2" y="251.2" width="3.0" height="1.6" fill="#f0e68c"/>
<rect x="682.2" y="252.0" width="1.8" height="9.4" fill="#1e90ff"/>
<rect x="683.7" y="252.0" width="1.2" height="4.2" fill="#f0e68c"/>
<rect x="683.2" y="255.4" width="3.0" height="1.6" fill="#f0e68c"/>
<rect x="684.7" y="255.4" width="3.0" height="1.6" fill="#f0e68c"/>
<rect x="686.2" y="255.4" width="3.0" height="1.6" fill="#f0e68c"/>
<rect x="688.2" y="256.2" width="1.8" height="5.2" fill="#f0e68c"/>
<rect x="689.7" y="256.2" width="1.2" height="8.4" fill="#f0e68c"/>
<rect x="689.2" y="259.6" width="3.0" height="1.6" fill="#f0e68c"/>
<rect x="692.2" y="259.6" width="3.0" height="1.6" fill="#f0e68c"/>
<rect x="694.2" y="260.4" width="1.8" height="5.2" fill="#1e90ff"/>
<rect x="695.7" y="256.2" width="1.8" height="9.4" fill="#ff0000"/>
<rect x="697.2" y="256.2" width="1.2" height="4.2" fill="#f0e68c"/>
<rect x="696.7" y="259.6" width="3.0" height="1.6" fill="#f0e68c"/>
<rect x="698.7" y="260.4" width="1.2" height="4.2" fill="#f0e68c"/>
<rect x="698.2" y="259.6" width="3.0" height="1.6" fill="#f0e68c"/>
<rect x="700.2" y="256.2" width="1.8" height="5.2" fill="#ff0000"/>
<rect x="701.2" y="255.4" width="3.0" height="1.6" fill="#f0e68c"/>
<rect x="703.2" y="252.0" width="1.8" height="5.2" fill="#ff0000"/>
<rect x="704.7" y="243.6" width="1.8" height="9.4" fill="#ff0000"/>
<rect x="706.2" y="235.2" width="1.8" height="13.6" fill="#ff0000"/>
<rect x="707.7" y="235.2" width="1.8" height="5.2" fill="#ff0000"/>
<rect x="709.2" y="226.8" width="1.8" height="9.4" fill="#1e90ff"/>
<rect x="712.2" y="214.2" width="1.8" height="13.6" fill="#1e90ff"/>
<rect x="713.7" y="210.0" width="1.8" height="13.6" fill="#ff0000"/>
<rect x="715.2" y="210.0" width="1.8" height="5.2" fill="#ff0000"/>
<rect x="716.7" y="197.4" width="1.8" height="13.6" fill="#ff0000"/>
<rect x="718.2" y="197.4" width="1.8" height="5.2" fill="#ff0000"/>
<rect x="719.7" y="193.2" width="1.8" height="5.2" fill="#ff0000"/>
<rect x="720.7" y="192.4" width="3.0" height="1.6" fill="#f0e68c"/>
<rect x="722.7" y="189.0" width="1.2" height="4.2" fill="#f0e68c"/>
<rect x="722.2" y="192.4" width="3.0" height="1.6" fill="#f0e68c"/>
<rect x="724.2" y="189.0" width="1.8" height="5.2" fill="#ff0000"/>
<rect x="725.7" y="180.6" width="1.2" height="12.6" fill="#f0e68c"/>
<rect x="725.2" y="188.2" width="3.0" height="1.6" fill="#f0e68c"/>
<rect x="727.2" y="184.8" width="1.8" height="5.2" fill="#ff0000"/>
<rect x="728.7" y="184.8" width="1.8" height="5.2" fill="#1e90ff"/>
<rect x="730.2" y="189.0" width="1.8" height="5.2" fill="#1e90ff"/>
<rect x="733.2" y="197.4" width="1.8" height="9.4" fill="#1e90ff"/>
<rect x="734.7" y="189.0" width="1.2" height="12.6" fill="#f0e68c"/>
<rect x="734.2" y="200.8" width="3.0" height="1.6" fill="#f0e68c"/>
<rect x="736.2" y="201.6" width="1.2" height="4.2" fill="#ff0000"/>
<rect x="735.7" y="200.8" width="3.0" height="1.6" fill="#ff0000"/>
<rect x="737.2" y="200.8" width="3.0" height="1.6" fill="#f0e68c"/>
<rect x="739.2" y="197.4" width="1.8" height="9.4" fill="#1e90ff"/>
<rect x="740.7" y="193.2" width="1.2" height="4.2" fill="#f0e68c"/>
<rect x="740.2" y="196.6" width="3.0" height="1.6" fill="#f0e68c"/>
<rect x="741.7" y="196.6" width="3.0" height="1.6" fill="#f0e68c"/>
<rect x="743.7" y="193.2" width="1.8" height="5.2" fill="#1e90ff"/>
<rect x="746.2" y="192.4" width="3.0" height="1.6" fill="#ff0000"/>
<rect x="747.7" y="192.4" width="3.0" height="1.6" fill="#f0e68c"/>
<rect x="749.7" y="189.0" width="1.2" height="8.4" fill="#f0e68c"/>
<rect x="749.2" y="192.4" width="3.0" height="1.6" fill="#f0e68c"/>
<rect x="751.2" y="189.0" width="1.2" height="8.4" fill="#f0e68c"/>
<rect x="750.7" y="192.4" width="3.0" height="1.6" fill="#f0e68c"/>
<rect x="752.7" y="189.0" width="1.8" height="5.2" fill="#ff0000"/>
<rect x="754.2" y="180.6" width="1.8" height="9.4" fill="#1e90ff"/>
<rect x="755.7" y="172.2" width="1.8" height="9.4" fill="#ff0000"/>
<rect x="757.2" y="168.0" width="1.8" height="13.6" fill="#ff0000"/>
<rect x="758.7" y="163.8" width="1.8" height="9.4" fill="#ff0000"/>
<rect x="761.2" y="167.2" width="3.0" height="1.6" fill="#f0e68c"/>
<rect x="763.2" y="159.6" width="1.8" height="9.4" fill="#ff0000"/>
<rect x="764.7" y="163.8" width="1.2" height="4.2" fill="#f0e68c"/>
<rect x="764.2" y="163.0" width="3.0" height="1.6" fill="#f0e68c"/>
<rect x="766.2" y="159.6" width="1.8" height="5.2" fill="#ff0000"/>
<rect x="767.7" y="159.6" width="1.2" height="8.4" fill="#ff0000"/>
<rect x="767.2" y="158.8" width="3.0" height="1.6" fill="#ff0000"/>
<rect x="768.7" y="158.8" width="3.0" height="1.6" fill="#f0e68c"/>
<rect x="770.2" y="158.8" width="3.0" height="1.6" fill="#f0e68c"/>
<rect x="772.2" y="151.2" width="1.8" height="9.4" fill="#ff0000"/>
<rect x="775.2" y="151.2" width="1.2" height="4.2" fill="#f0e68c"/>
<rect x="774.7" y="154.6" width="3.0" height="1.6" fill="#f0e68c"/>
<rect x="778.2" y="151.2" width="1.8" height="9.4" fill="#1e90ff"/>
<rect x="779.7" y="151.2" width="1.2" height="12.6" fill="#f0e68c"/>
<rect x="779.2" y="158.8" width="3.0" height="1.6" fill="#f0e68c"/>
<rect x="781.2" y="155.4" width="1.2" height="4.2" fill="#f0e68c"/>
<rect x="780.7" y="158.8" width="3.0" height="1.6" fill="#f0e68c"/>
<rect x="782.7" y="155.4" width="1.2" height="8.4" fill="#f0e68c"/>
<rect x="782.2" y="158.8" width="3.0" height="1.6" fill="#f0e68c"/>
<rect x="785.7" y="155.4" width="1.8" height="9.4" fill="#1e90ff"/>
<rect x="787.2" y="159.6" width="1.2" height="4.2" fill="#1e90ff"/>
<rect x="786.7" y="163.0" width="3.0" height="1.6" fill="#1e90ff"/>
<rect x="788.7" y="163.8" width="1.8" height="9.4" fill="#1e90ff"/>
<rect x="789.7" y="167.2" width="3.0" height="1.6" fill="#f0e68c"/>
<rect x="791.2" y="167.2" width="3.0" height="1.6" fill="#f0e68c"/>
<rect x="793.2" y="168.0" width="1.8" height="5.2" fill="#1e90ff"/>
<rect x="794.7" y="168.0" width="1.8" height="13.6" fill="#1e90ff"/>
<rect x="796.2" y="172.2" width="1.2" height="8.4" fill="#f0e68c"/>
<rect x="795.7" y="175.6" width="3.0" height="1.6" fill="#f0e68c"/>
<rect x="797.7" y="172.2" width="1.8" height="13.6" fill="#1e90ff"/>
<rect x="799.2" y="176.4" width="1.2" height="4.2" fill="#f0e68c"/>
<rect x="798.7" y="179.8" width="3.0" height="1.6" fill="#f0e68c"/>
<rect x="800.2" y="179.8" width="3.0" height="1.6" fill="#f0e68c"/>
<rect x="802.2" y="176.4" width="1.2" height="8.4" fill="#1e90ff"/>
<rect x="801.7" y="179.8" width="3.0" height="1.6" fill="#1e90ff"/>
<rect x="803.7" y="176.4" width="1.8" height="5.2" fill="#f0e68c"/>
<rect x="805.2" y="168.0" width="1.2" height="8.4" fill="#f0e68c"/>
<rect x="804.7" y="175.6" width="3.0" height="1.6" fill="#f0e68c"/>
<rect x="806.7" y="176.4" width="1.8" height="5.2" fill="#1e90ff"/>
<rect x="808.2" y="176.4" width="1.2" height="4.2" fill="#f0e68c"/>
<rect x="807.7" y="179.8" width="3.0" height="1.6" fill="#f0e68c"/>
<rect x="809.7" y="172.2" width="1.8" height="9.4" fill="#ff0000"/>
<rect x="811.2" y="176.4" width="1.8" height="9.4" fill="#1e90ff"/>
<rect x="812.7" y="180.6" width="1.2" height="4.2" fill="#f0e68c"/>
<rect x="812.2" y="179.8" width="3.0" height="1.6" fill="#f0e68c"/>
<rect x="814.2" y="176.4" width="1.2" height="4.2" fill="#f0e68c"/>
<rect x="813.7" y="179.8" width="3.0" height="1.6" fill="#f0e68c"/>
<rect x="815.7" y="180.6" width="1.2" height="4.2" fill="#f0e68c"/>
<rect x="815.2" y="179.8" width="3.0" height="1.6" fill="#f0e68c"/>
<rect x="817.2" y="180.6" width="1.2" height="4.2" fill="#f0e68c"/>
<rect x="816.7" y="179.8" width="3.0" height="1.6" fill="#f0e68c"/>
<rect x="818.7" y="180.6" width="1.8" height="5.2" fill="#f0e68c"/>
<rect x="820.2" y="180.6" width="1.2" height="8.4" fill="#f0e68c"/>
<rect x="819.7" y="184.0" width="3.0" height="1.6" fill="#f0e68c"/>
<rect x="821.7" y="184.8" width="1.8" height="5.2" fill="#1e90ff"/>
<rect x="823.2" y="189.0" width="1.8" height="5.2" fill="#1e90ff"/>
<rect x="824.7" y="189.0" width="1.2" height="4.2" fill="#f0e68c"/>
<rect x="824.2" y="192.4" width="3.0" height="1.6" fill="#f0e68c"/>
<rect x="825.7" y="192.4" width="3.0" height="1.6" fill="#ff0000"/>
<rect x="827.2" y="192.4" width="3.0" height="1.6" fill="#f0e68c"/>
<rect x="828.7" y="192.4" width="3.0" height="1.6" fill="#f0e68c"/>
<rect x="830.7" y="193.2" width="1.2" height="4.2" fill="#f0e68c"/>
<rect x="830.2" y="192.4" width="3.0" height="1.6" fill="#f0e68c"/>
<rect x="831.7" y="192.4" width="3.0" height="1.6" fill="#f0e68c"/>
<rect x="833.2" y="192.4" width="3.0" height="1.6" fill="#f0e68c"/>
<rect x="835.2" y="189.0" width="1.2" height="8.4" fill="#f0e68c"/>
<rect x="834.7" y="192.4" width="3.0" height="1.6" fill="#f0e68c"/>
<rect x="836.7" y="193.2" width="1.2" height="4.2" fill="#f0e68c"/>
<rect x="836.2" y="192.4" width="3.0" height="1.6" fill="#f0e68c"/>
<rect x="838.2" y="189.0" width="1.2" height="8.4" fill="#f0e68c"/>
<rect x="837.7" y="192.4" width="3.0" height="1.6" fill="#f0e68c"/>
<rect x="839.7" y="193.2" width="1.2" height="4.2" fill="#f0e68c"/>
<rect x="839.2" y="192.4" width="3.0" height="1.6" fill="#f0e68c"/>
<rect x="841.2" y="193.2" width="1.2" height="4.2" fill="#f0e68c"/>
<rect x="840.7" y="192.4" width="3.0" height="1.6" fill="#f0e68c"/>
<rect x="842.7" y="193.2" width="1.2" height="4.2" fill="#f0e68c"/>
<rect x="842.2" y="192.4" width="3.0" height="1.6" fill="#f0e68c"/>
<rect x="844.2" y="189.0" width="1.2" height="8.4" fill="#f0e68c"/>
<rect x="843.7" y="192.4" width="3.0" height="1.6" fill="#f0e68c"/>
<rect x="845.2" y="192.4" width="3.0" height="1.6" fill="#f0e68c"/>
<rect x="847.2" y="189.0" width="1.8" height="9.4" fill="#1e90ff"/>
<rect x="850.2" y="180.6" width="1.2" height="12.6" fill="#f0e68c"/>
<rect x="849.7" y="192.4" width="3.0" height="1.6" fill="#f0e68c"/>
<rect x="851.7" y="189.0" width="1.2" height="8.4" fill="#f0e68c"/>
<rect x="851.2" y="192.4" width="3.0" height="1.6" fill="#f0e68c"/>
<rect x="852.7" y="192.4" width="3.0" height="1.6" fill="#f0e68c"/>
<rect x="854.2" y="192.4" width="3.0" height="1.6" fill="#1e90ff"/>
<rect x="856.2" y="193.2" width="1.2" height="4.2" fill="#f0e68c"/>
<rect x="855.7" y="192.4" width="3.0" height="1.6" fill="#f0e68c"/>
<rect x="857.7" y="180.6" width="1.8" height="13.6" fill="#ff0000"/>
<rect x="858.7" y="188.2" width="3.0" height="1.6" fill="#f0e68c"/>
<rect x="860.7" y="180.6" width="1.8" height="13.6" fill="#ff0000"/>
<rect x="862.2" y="180.6" width="1.2" height="8.4" fill="#f0e68c"/>
<rect x="861.7" y="184.0" width="3.0" height="1.6" fill="#f0e68c"/>
<rect x="863.7" y="180.6" width="1.8" height="5.2" fill="#ff0000"/>
<rect x="865.2" y="176.4" width="1.8" height="9.4" fill="#ff0000"/>
<rect x="866.7" y="159.6" width="1.8" height="17.8" fill="#ff0000"/>
<rect x="868.2" y="163.8" width="1.8" height="9.4" fill="#ff0000"/>
<rect x="869.7" y="168.0" width="1.2" height="8.4" fill="#1e90ff"/>
<rect x="869.2" y="167.2" width="3.0" height="1.6" fill="#1e90ff"/>
<rect x="870.7" y="167.2" width="3.0" height="1.6" fill="#f0e68c"/>
<rect x="872.2" y="167.2" width="3.0" height="1.6" fill="#f0e68c"/>
<rect x="874.2" y="168.0" width="1.2" height="4.2" fill="#f0e68c"/>
<rect x="873.7" y="167.2" width="3.0" height="1.6" fill="#f0e68c"/>
<rect x="875.2" y="167.2" width="3.0" height="1.6" fill="#f0e68c"/>
<rect x="877.2" y="163.8" width="1.8" height="9.4" fill="#ff0000"/>
<rect x="878.7" y="155.4" width="1.8" height="9.4" fill="#ff0000"/>
<rect x="880.2" y="142.8" width="1.8" height="17.8" fill="#ff0000"/>
<rect x="883.2" y="138.6" width="1.8" height="9.4" fill="#f0e68c"/>
<rect x="884.7" y="130.2" width="1.8" height="9.4" fill="#ff0000"/>
<rect x="886.2" y="130.2" width="1.8" height="13.6" fill="#1e90ff"/>
<rect x="887.7" y="134.4" width="1.2" height="8.4" fill="#f0e68c"/>
<rect x="887.2" y="137.8" width="3.0" height="1.6" fill="#f0e68c"/>
<rect x="889.2" y="138.6" width="1.2" height="4.2" fill="#f0e68c"/>
<rect x="888.7" y="137.8" width="3.0" height="1.6" fill="#f0e68c"/>
<rect x="890.7" y="134.4" width="1.8" height="13.6" fill="#1e90ff"/>
<rect x="891.7" y="142.0" width="3.0" height="1.6" fill="#f0e68c"/>
<rect x="893.2" y="142.0" width="3.0" height="1.6" fill="#f0e68c"/>
<rect x="895.2" y="138.6" width="1.2" height="4.2" fill="#f0e68c"/>
<rect x="894.7" y="142.0" width="3.0" height="1.6" fill="#f0e68c"/>
<rect x="896.7" y="138.6" width="1.8" height="9.4" fill="#ff0000"/>
<rect x="897.7" y="146.2" width="3.0" height="1.6" fill="#1e90ff"/>
<rect x="899.7" y="147.0" width="1.2" height="4.2" fill="#f0e68c"/>
<rect x="899.2" y="146.2" width="3.0" height="1.6" fill="#f0e68c"/>
<rect x="901.2" y="147.0" width="1.8" height="9.4" fill="#1e90ff"/>
<rect x="902.7" y="151.2" width="1.8" height="5.2" fill="#f0e68c"/>
<rect x="903.7" y="154.6" width="3.0" height="1.6" fill="#f0e68c"/>
<rect x="905.2" y="154.6" width="3.0" height="1.6" fill="#f0e68c"/>
<rect x="907.2" y="155.4" width="1.2" height="4.2" fill="#f0e68c"/>
<rect x="906.7" y="154.6" width="3.0" height="1.6" fill="#f0e68c"/>
<rect x="908.7" y="155.4" width="1.8" height="5.2" fill="#1e90ff"/>
<rect x="910.2" y="155.4" width="1.2" height="4.2" fill="#f0e68c"/>
<rect x="909.7" y="158.8" width="3.0" height="1.6" fill="#f0e68c"/>
<rect x="911.7" y="155.4" width="1.8" height="9.4" fill="#1e90ff"/>
<rect x="913.2" y="159.6" width="1.2" height="4.2" fill="#f0e68c"/>
<rect x="912.7" y="163.0" width="3.0" height="1.6" fill="#f0e68c"/>
<rect x="914.7" y="159.6" width="1.2" height="4.2" fill="#f0e68c"/>
<rect x="914.2" y="163.0" width="3.0" height="1.6" fill="#f0e68c"/>
<rect x="916.2" y="159.6" width="1.2" height="8.4" fill="#f0e68c"/>
<rect x="915.7" y="163.0" width="3.0" height="1.6" fill="#f0e68c"/>
<rect x="920.7" y="168.0" width="1.2" height="8.4" fill="#f0e68c"/>
<rect x="920.2" y="171.4" width="3.0" height="1.6" fill="#f0e68c"/>
<rect x="922.2" y="172.2" width="1.8" height="22.0" fill="#1e90ff"/>
<rect x="923.2" y="179.8" width="3.0" height="1.6" fill="#f0e68c"/>
<rect x="925.2" y="176.4" width="1.8" height="13.6" fill="#1e90ff"/>
<rect x="926.7" y="184.8" width="1.8" height="9.4" fill="#1e90ff"/>
<rect x="928.2" y="184.8" width="1.2" height="8.4" fill="#f0e68c"/>
<rect x="927.7" y="188.2" width="3.0" height="1.6" fill="#f0e68c"/>
<rect x="929.7" y="189.0" width="1.8" height="5.2" fill="#1e90ff"/>
<rect x="931.2" y="189.0" width="1.2" height="8.4" fill="#f0e68c"/>
<rect x="930.7" y="192.4" width="3.0" height="1.6" fill="#f0e68c"/>
<rect x="932.7" y="189.0" width="1.2" height="4.2" fill="#f0e68c"/>
<rect x="932.2" y="192.4" width="3.0" height="1.6" fill="#f0e68c"/>
<rect x="935.7" y="189.0" width="1.2" height="8.4" fill="#f0e68c"/>
<rect x="935.2" y="192.4" width="3.0" height="1.6" fill="#f0e68c"/>
<rect x="938.2" y="188.2" width="3.0" height="1.6" fill="#f0e68c"/>
<rect x="940.2" y="184.8" width="1.2" height="8.4" fill="#f0e68c"/>
<rect x="939.7" y="188.2" width="3.0" height="1.6" fill="#f0e68c"/>
<rect x="941.2" y="188.2" width="3.0" height="1.6" fill="#f0e68c"/>
<rect x="943.2" y="189.0" width="1.8" height="9.4" fill="#1e90ff"/>
<rect x="944.7" y="193.2" width="1.8" height="9.4" fill="#ff0000"/>
<rect x="946.2" y="197.4" width="1.2" height="4.2" fill="#f0e68c"/>
<rect x="945.7" y="196.6" width="3.0" height="1.6" fill="#f0e68c"/>
<rect x="947.2" y="196.6" width="3.0" height="1.6" fill="#f0e68c"/>
<rect x="949.2" y="197.4" width="1.8" height="5.2" fill="#1e90ff"/>
<rect x="950.7" y="193.2" width="1.8" height="13.6" fill="#ff0000"/>
<rect x="952.2" y="193.2" width="1.2" height="4.2" fill="#f0e68c"/>
<rect x="951.7" y="196.6" width="3.0" height="1.6" fill="#f0e68c"/>
<rect x="953.7" y="197.4" width="1.8" height="5.2" fill="#f0e68c"/>
<rect x="955.2" y="197.4" width="1.2" height="4.2" fill="#f0e68c"/>
<rect x="954.7" y="200.8" width="3.0" height="1.6" fill="#f0e68c"/>
<rect x="956.7" y="197.4" width="1.2" height="4.2" fill="#f0e68c"/>
<rect x="956.2" y="200.8" width="3.0" height="1.6" fill="#f0e68c"/>
<rect x="957.7" y="200.8" width="3.0" height="1.6" fill="#f0e68c"/>
<rect x="959.7" y="189.0" width="1.2" height="16.8" fill="#f0e68c"/>
<rect x="959.2" y="200.8" width="3.0" height="1.6" fill="#f0e68c"/>
<rect x="961.2" y="197.4" width="1.2" height="4.2" fill="#f0e68c"/>
<rect x="960.7" y="200.8" width="3.0" height="1.6" fill="#f0e68c"/>
<rect x="962.2" y="196.6" width="3.0" height="1.6" fill="#f0e68c"/>
<rect x="963.7" y="200.8" width="3.0" height="1.6" fill="#f0e68c"/>
<rect x="965.2" y="196.6" width="3.0" height="1.6" fill="#f0e68c"/>
<rect x="968.7" y="197.4" width="1.2" height="4.2" fill="#f0e68c"/>
<rect x="968.2" y="196.6" width="3.0" height="1.6" fill="#f0e68c"/>
<rect x="971.2" y="192.4" width="3.0" height="1.6" fill="#f0e68c"/>
<rect x="974.2" y="188.2" width="3.0" height="1.6" fill="#f0e68c"/>
<rect x="977.2" y="188.2" width="3.0" height="1.6" fill="#f0e68c"/>
<rect x="978.7" y="179.8" width="3.0" height="1.6" fill="#f0e68c"/>
<rect x="980.2" y="179.8" width="3.0" height="1.6" fill="#f0e68c"/>
<rect x="982.2" y="176.4" width="1.2" height="8.4" fill="#f0e68c"/>
<rect x="981.7" y="179.8" width="3.0" height="1.6" fill="#f0e68c"/>
<rect x="983.2" y="175.6" width="3.0" height="1.6" fill="#f0e68c"/>
<rect x="984.7" y="171.4" width="3.0" height="1.6" fill="#f0e68c"/>
<rect x="986.2" y="175.6" width="3.0" height="1.6" fill="#f0e68c"/>
<rect x="991.2" y="172.2" width="1.8" height="13.6" fill="#1e90ff"/>
<rect x="992.2" y="179.8" width="3.0" height="1.6" fill="#f0e68c"/>
<rect x="994.2" y="176.4" width="1.2" height="4.2" fill="#f0e68c"/>
<rect x="993.7" y="179.8" width="3.0" height="1.6" fill="#f0e68c"/>
<rect x="995.2" y="184.0" width="3.0" height="1.6" fill="#f0e68c"/>
<rect x="997.2" y="180.6" width="1.8" height="5.2" fill="#ff0000"/>
<rect x="999.7" y="179.8" width="3.0" height="1.6" fill="#f0e68c"/>
<rect x="1001.7" y="180.6" width="1.2" height="4.2" fill="#ff0000"/>
<rect x="1001.2" y="179.8" width="3.0" height="1.6" fill="#ff0000"/>
<rect x="1003.2" y="163.8" width="1.2" height="16.8" fill="#f0e68c"/>
<rect x="1002.7" y="179.8" width="3.0" height="1.6" fill="#f0e68c"/>
<rect x="1004.7" y="180.6" width="1.8" height="5.2" fill="#1e90ff"/>
<rect x="1006.2" y="180.6" width="1.2" height="4.2" fill="#f0e68c"/>
<rect x="1005.7" y="184.0" width="3.0" height="1.6" fill="#f0e68c"/>
<rect x="1007.7" y="180.6" width="1.8" height="5.2" fill="#ff0000"/>
<rect x="1009.2" y="176.4" width="1.8" height="9.4" fill="#ff0000"/>
<rect x="1010.7" y="168.0" width="1.8" height="9.4" fill="#ff0000"/>
<rect x="1012.2" y="163.8" width="1.8" height="9.4" fill="#ff0000"/>
<rect x="1013.7" y="163.8" width="1.8" height="5.2" fill="#1e90ff"/>
<rect x="1014.7" y="163.0" width="3.0" height="1.6" fill="#f0e68c"/>
<rect x="1016.7" y="163.8" width="1.2" height="4.2" fill="#f0e68c"/>
<rect x="1016.2" y="163.0" width="3.0" height="1.6" fill="#f0e68c"/>
<rect x="1018.2" y="159.6" width="1.8" height="5.2" fill="#ff0000"/>
<rect x="1021.2" y="159.6" width="1.2" height="4.2" fill="#f0e68c"/>
<rect x="1020.7" y="158.8" width="3.0" height="1.6" fill="#f0e68c"/>
<rect x="1022.7" y="155.4" width="1.2" height="4.2" fill="#f0e68c"/>
<rect x="1022.2" y="158.8" width="3.0" height="1.6" fill="#f0e68c"/>
<rect x="1025.7" y="155.4" width="1.8" height="5.2" fill="#ff0000"/>
<rect x="1027.2" y="155.4" width="1.8" height="9.4" fill="#1e90ff"/>
<rect x="1028.7" y="155.4" width="1.2" height="4.2" fill="#f0e68c"/>
<rect x="1028.2" y="158.8" width="3.0" height="1.6" fill="#f0e68c"/>
<rect x="1030.2" y="159.6" width="1.8" height="9.4" fill="#1e90ff"/>
<rect x="1031.7" y="159.6" width="1.8" height="9.4" fill="#1e90ff"/>
<rect x="1033.2" y="168.0" width="1.8" height="9.4" fill="#1e90ff"/>
<rect x="1034.7" y="172.2" width="1.8" height="9.4" fill="#f0e68c"/>
<rect x="1036.2" y="180.6" width="1.8" height="9.4" fill="#1e90ff"/>
<rect x="1037.7" y="184.8" width="1.8" height="5.2" fill="#1e90ff"/>
<rect x="1039.2" y="189.0" width="1.8" height="9.4" fill="#1e90ff"/>
<rect x="1040.2" y="192.4" width="3.0" height="1.6" fill="#f0e68c"/>
<rect x="1042.2" y="193.2" width="1.2" height="4.2" fill="#f0e68c"/>
<rect x="1041.7" y="192.4" width="3.0" height="1.6" fill="#f0e68c"/>
<rect x="1043.2" y="192.4" width="3.0" height="1.6" fill="#f0e68c"/>
<rect x="1045.2" y="193.2" width="1.2" height="4.2" fill="#f0e68c"/>
<rect x="1044.7" y="192.4" width="3.0" height="1.6" fill="#f0e68c"/>
<rect x="1046.7" y="193.2" width="1.2" height="4.2" fill="#f0e68c"/>
<rect x="1046.2" y="192.4" width="3.0" height="1.6" fill="#f0e68c"/>
<rect x="1048.2" y="193.2" width="1.8" height="13.6" fill="#1e90ff"/>
<rect x="1049.7" y="205.8" width="1.8" height="9.4" fill="#1e90ff"/>
<rect x="1051.2" y="205.8" width="1.8" height="13.6" fill="#ff0000"/>
<rect x="1052.7" y="197.4" width="1.8" height="13.6" fill="#1e90ff"/>
<rect x="1054.2" y="189.0" width="1.8" height="9.4" fill="#ff0000"/>
<rect x="1055.7" y="189.0" width="1.8" height="5.2" fill="#ff0000"/>
<rect x="1056.7" y="188.2" width="3.0" height="1.6" fill="#1e90ff"/>
<rect x="1060.2" y="180.6" width="1.2" height="4.2" fill="#f0e68c"/>
<rect x="1059.7" y="184.0" width="3.0" height="1.6" fill="#f0e68c"/>
<rect x="1063.2" y="180.6" width="1.8" height="5.2" fill="#ff0000"/>
<rect x="1064.2" y="179.8" width="3.0" height="1.6" fill="#f0e68c"/>
<rect x="1066.2" y="180.6" width="1.2" height="4.2" fill="#f0e68c"/>
<rect x="1065.7" y="179.8" width="3.0" height="1.6" fill="#f0e68c"/>
<rect x="1067.2" y="179.8" width="3.0" height="1.6" fill="#f0e68c"/>
<rect x="1069.2" y="180.6" width="1.8" height="5.2" fill="#f0e68c"/>
<rect x="1072.2" y="184.8" width="1.2" height="4.2" fill="#f0e68c"/>
<rect x="1071.7" y="184.0" width="3.0" height="1.6" fill="#f0e68c"/>
<rect x="1073.2" y="184.0" width="3.0" height="1.6" fill="#f0e68c"/>
<rect x="1076.7" y="184.8" width="1.2" height="8.4" fill="#f0e68c"/>
<rect x="1076.2" y="188.2" width="3.0" height="1.6" fill="#f0e68c"/>
<rect x="1080.7" y="184.0" width="3.0" height="1.6" fill="#1e90ff"/>
<rect x="1082.7" y="180.6" width="1.8" height="9.4" fill="#ff0000"/>
<rect x="1085.7" y="180.6" width="1.2" height="4.2" fill="#f0e68c"/>
<rect x="1085.2" y="184.0" width="3.0" height="1.6" fill="#f0e68c"/>
<rect x="1087.2" y="180.6" width="1.8" height="9.4" fill="#ff0000"/>
<rect x="1088.7" y="176.4" width="1.2" height="4.2" fill="#f0e68c"/>
<rect x="1088.2" y="179.8" width="3.0" height="1.6" fill="#f0e68c"/>
<rect x="1090.2" y="163.8" width="1.2" height="21.0" fill="#f0e68c"/>
<rect x="1089.7" y="179.8" width="3.0" height="1.6" fill="#f0e68c"/>
<rect x="1091.7" y="176.4" width="1.8" height="5.2" fill="#f0e68c"/>
<rect x="1093.2" y="168.0" width="1.8" height="17.8" fill="#ff0000"/>
<rect x="1094.7" y="168.0" width="1.8" height="9.4" fill="#ff0000"/>
<rect x="1096.2" y="168.0" width="1.2" height="4.2" fill="#f0e68c"/>
<rect x="1095.7" y="167.2" width="3.0" height="1.6" fill="#f0e68c"/>
<rect x="1097.7" y="163.8" width="1.2" height="8.4" fill="#f0e68c"/>
<rect x="1097.2" y="167.2" width="3.0" height="1.6" fill="#f0e68c"/>
<rect x="1100.7" y="172.2" width="1.8" height="5.2" fill="#1e90ff"/>
<rect x="1102.2" y="176.4" width="1.2" height="4.2" fill="#f0e68c"/>
<rect x="1101.7" y="175.6" width="3.0" height="1.6" fill="#f0e68c"/>
<rect x="1103.7" y="172.2" width="1.2" height="4.2" fill="#f0e68c"/>
<rect x="1103.2" y="175.6" width="3.0" height="1.6" fill="#f0e68c"/>
<rect x="1105.2" y="172.2" width="1.8" height="13.6" fill="#1e90ff"/>
<rect x="1106.7" y="180.6" width="1.2" height="4.2" fill="#1e90ff"/>
<rect x="1106.2" y="179.8" width="3.0" height="1.6" fill="#1e90ff"/>
<rect x="1108.2" y="180.6" width="1.2" height="4.2" fill="#f0e68c"/>
<rect x="1107.7" y="179.8" width="3.0" height="1.6" fill="#f0e68c"/>
<rect x="1109.7" y="180.6" width="1.2" height="4.2" fill="#f0e68c"/>
<rect x="1109.2" y="179.8" width="3.0" height="1.6" fill="#f0e68c"/>
<rect x="1111.2" y="180.6" width="1.8" height="9.4" fill="#1e90ff"/>
<rect x="1112.7" y="184.8" width="1.8" height="5.2" fill="#ff0000"/>
<rect x="1114.2" y="184.8" width="1.2" height="4.2" fill="#f0e68c"/>
<rect x="1113.7" y="188.2" width="3.0" height="1.6" fill="#f0e68c"/>
<rect x="1115.7" y="184.8" width="1.8" height="22.0" fill="#ff0000"/>
<rect x="1117.2" y="180.6" width="1.8" height="17.8" fill="#1e90ff"/>
<rect x="1120.2" y="184.8" width="1.8" height="9.4" fill="#1e90ff"/>
<rect x="1121.7" y="189.0" width="1.8" height="34.6" fill="#1e90ff"/>
<rect x="1123.2" y="201.6" width="1.8" height="22.0" fill="#1e90ff"/>
<rect x="1124.7" y="222.6" width="1.2" height="4.2" fill="#f0e68c"/>
<rect x="1124.2" y="221.8" width="3.0" height="1.6" fill="#f0e68c"/>
<rect x="1126.2" y="218.4" width="1.8" height="5.2" fill="#f0e68c"/>
<rect x="1127.2" y="217.6" width="3.0" height="1.6" fill="#f0e68c"/>
<rect x="1129.2" y="210.0" width="1.8" height="13.6" fill="#1e90ff"/>
<rect x="1130.7" y="210.0" width="1.8" height="5.2" fill="#ff0000"/>
<rect x="1131.7" y="209.2" width="3.0" height="1.6" fill="#f0e68c"/>
<rect x="1133.7" y="205.8" width="1.2" height="16.8" fill="#f0e68c"/>
<rect x="1133.2" y="209.2" width="3.0" height="1.6" fill="#f0e68c"/>
<rect x="1135.2" y="205.8" width="1.8" height="5.2" fill="#ff0000"/>
<rect x="1136.7" y="201.6" width="1.8" height="5.2" fill="#ff0000"/>
<rect x="1138.2" y="197.4" width="1.8" height="5.2" fill="#ff0000"/>
<rect x="1139.7" y="189.0" width="1.8" height="9.4" fill="#ff0000"/>
<rect x="1141.2" y="189.0" width="1.8" height="5.2" fill="#ff0000"/>
<rect x="1144.2" y="180.6" width="1.8" height="5.2" fill="#ff0000"/>
<rect x="1145.7" y="176.4" width="1.8" height="9.4" fill="#ff0000"/>
<rect x="1147.2" y="168.0" width="1.8" height="9.4" fill="#ff0000"/>
<rect x="1148.7" y="168.0" width="1.8" height="9.4" fill="#ff0000"/>
<rect x="1150.2" y="163.8" width="1.2" height="4.2" fill="#f0e68c"/>
<rect x="1149.7" y="167.2" width="3.0" height="1.6" fill="#f0e68c"/>
<rect x="1151.7" y="168.0" width="1.8" height="9.4" fill="#1e90ff"/>
<rect x="1153.2" y="172.2" width="1.2" height="8.4" fill="#ff0000"/>
<rect x="1152.7" y="175.6" width="3.0" height="1.6" fill="#ff0000"/>
<rect x="1154.7" y="176.4" width="1.8" height="9.4" fill="#1e90ff"/>
<rect x="1156.2" y="180.6" width="1.8" height="13.6" fill="#1e90ff"/>
<rect x="1157.7" y="189.0" width="1.2" height="8.4" fill="#f0e68c"/>
<rect x="1157.2" y="188.2" width="3.0" height="1.6" fill="#f0e68c"/>
<rect x="1159.2" y="189.0" width="1.8" height="5.2" fill="#1e90ff"/>
<rect x="1160.7" y="189.0" width="1.2" height="4.2" fill="#f0e68c"/>
<rect x="1160.2" y="192.4" width="3.0" height="1.6" fill="#f0e68c"/>
<rect x="1161.7" y="192.4" width="3.0" height="1.6" fill="#f0e68c"/>
<rect x="1163.2" y="192.4" width="3.0" height="1.6" fill="#f0e68c"/>
<rect x="1164.7" y="192.4" width="3.0" height="1.6" fill="#ff0000"/>
<rect x="1166.7" y="193.2" width="1.2" height="4.2" fill="#f0e68c"/>
<rect x="1166.2" y="192.4" width="3.0" height="1.6" fill="#f0e68c"/>
<rect x="1168.2" y="193.2" width="1.8" height="5.2" fill="#1e90ff"/>
<rect x="1169.2" y="196.6" width="3.0" height="1.6" fill="#f0e68c"/>
<rect x="1171.2" y="193.2" width="1.8" height="9.4" fill="#ff0000"/>
<rect x="1172.7" y="184.8" width="1.2" height="12.6" fill="#f0e68c"/>
<rect x="1172.2" y="192.4" width="3.0" height="1.6" fill="#f0e68c"/>
<rect x="1174.2" y="176.4" width="1.8" height="22.0" fill="#ff0000"/>
<rect x="1175.7" y="184.8" width="1.8" height="9.4" fill="#ff0000"/>
<rect x="1177.2" y="180.6" width="1.2" height="4.2" fill="#1e90ff"/>
<rect x="1176.7" y="184.0" width="3.0" height="1.6" fill="#1e90ff"/>
<rect x="1178.7" y="176.4" width="1.8" height="9.4" fill="#ff0000"/>
<rect x="1180.2" y="180.6" width="1.2" height="4.2" fill="#f0e68c"/>
<rect x="1179.7" y="179.8" width="3.0" height="1.6" fill="#f0e68c"/>
<rect x="1181.7" y="176.4" width="1.2" height="4.2" fill="#f0e68c"/>
<rect x="1181.2" y="179.8" width="3.0" height="1.6" fill="#f0e68c"/>
<rect x="1182.7" y="179.8" width="3.0" height="1.6" fill="#f0e68c"/>
<rect x="1184.7" y="176.4" width="1.2" height="8.4" fill="#f0e68c"/>
<rect x="1184.2" y="179.8" width="3.0" height="1.6" fill="#f0e68c"/>
<rect x="1185.7" y="179.8" width="3.0" height="1.6" fill="#ff0000"/>
<rect x="1187.7" y="172.2" width="1.8" height="13.6" fill="#ff0000"/>
<rect x="1188.7" y="175.6" width="3.0" height="1.6" fill="#f0e68c"/>
<rect x="1190.7" y="172.2" width="1.8" height="9.4" fill="#1e90ff"/>
<rect x="1192.2" y="176.4" width="1.8" height="9.4" fill="#ff0000"/>
<rect x="1193.7" y="172.2" width="1.2" height="4.2" fill="#f0e68c"/>
<rect x="1193.2" y="175.6" width="3.0" height="1.6" fill="#f0e68c"/>
<rect x="1195.2" y="172.2" width="1.2" height="4.2" fill="#f0e68c"/>
<rect x="1194.7" y="175.6" width="3.0" height="1.6" fill="#f0e68c"/>
<rect x="1196.2" y="175.6" width="3.0" height="1.6" fill="#f0e68c"/>
<rect x="1198.2" y="172.2" width="1.2" height="4.2" fill="#f0e68c"/>
<rect x="1197.7" y="175.6" width="3.0" height="1.6" fill="#f0e68c"/>
<rect x="1199.2" y="175.6" width="3.0" height="1.6" fill="#f0e68c"/>
<rect x="1201.2" y="168.0" width="1.8" height="9.4" fill="#ff0000"/>
<rect x="1202.2" y="171.4" width="3.0" height="1.6" fill="#f0e68c"/>
<rect x="1204.2" y="172.2" width="1.8" height="5.2" fill="#1e90ff"/>
<rect x="1205.2" y="175.6" width="3.0" height="1.6" fill="#f0e68c"/>
<rect x="1207.2" y="172.2" width="1.2" height="4.2" fill="#f0e68c"/>
<rect x="1206.7" y="175.6" width="3.0" height="1.6" fill="#f0e68c"/>
<rect x="1208.7" y="176.4" width="1.8" height="9.4" fill="#f0e68c"/>
<rect x="1211.7" y="176.4" width="1.8" height="13.6" fill="#1e90ff"/>
<rect x="1212.7" y="184.0" width="3.0" height="1.6" fill="#1e90ff"/>
<rect x="1214.7" y="180.6" width="1.8" height="13.6" fill="#1e90ff"/>
<rect x="1216.2" y="189.0" width="1.2" height="8.4" fill="#f0e68c"/>
<rect x="1215.7" y="188.2" width="3.0" height="1.6" fill="#f0e68c"/>
<rect x="1217.7" y="189.0" width="1.8" height="5.2" fill="#1e90ff"/>
<rect x="1219.2" y="193.2" width="1.8" height="22.0" fill="#1e90ff"/>
<rect x="1220.7" y="197.4" width="1.8" height="13.6" fill="#1e90ff"/>
<rect x="1222.2" y="197.4" width="1.8" height="22.0" fill="#f0e68c"/>
<rect x="1223.7" y="214.2" width="1.2" height="4.2" fill="#1e90ff"/>
<rect x="1223.2" y="213.4" width="3.0" height="1.6" fill="#1e90ff"/>
<rect x="1226.7" y="210.0" width="1.8" height="5.2" fill="#ff0000"/>
<rect x="1228.2" y="205.8" width="1.2" height="4.2" fill="#f0e68c"/>
<rect x="1227.7" y="209.2" width="3.0" height="1.6" fill="#f0e68c"/>
<rect x="1229.7" y="201.6" width="1.8" height="9.4" fill="#ff0000"/>
<rect x="1231.2" y="201.6" width="1.8" height="5.2" fill="#ff0000"/>
<rect x="1232.7" y="197.4" width="1.8" height="9.4" fill="#ff0000"/>
<rect x="1234.2" y="172.2" width="1.8" height="26.2" fill="#ff0000"/>
<rect x="1235.7" y="147.0" width="1.8" height="30.4" fill="#ff0000"/>
<rect x="1237.2" y="134.4" width="1.8" height="17.8" fill="#ff0000"/>
<rect x="1238.7" y="142.8" width="1.8" height="17.8" fill="#1e90ff"/>
<rect x="1240.2" y="155.4" width="1.8" height="17.8" fill="#1e90ff"/>
<rect x="1241.7" y="168.0" width="1.2" height="8.4" fill="#f0e68c"/>
<rect x="1241.2" y="171.4" width="3.0" height="1.6" fill="#f0e68c"/>
<rect x="1243.2" y="168.0" width="1.8" height="5.2" fill="#ff0000"/>
<rect x="1244.7" y="159.6" width="1.8" height="9.4" fill="#ff0000"/>
<rect x="1246.2" y="155.4" width="1.8" height="5.2" fill="#ff0000"/>
<rect x="1247.7" y="151.2" width="1.8" height="5.2" fill="#ff0000"/>
<rect x="1249.2" y="142.8" width="1.8" height="9.4" fill="#ff0000"/>
<rect x="1250.7" y="134.4" width="1.8" height="9.4" fill="#ff0000"/>
<rect x="1252.2" y="126.0" width="1.8" height="9.4" fill="#ff0000"/>
<rect x="1253.7" y="121.8" width="1.8" height="9.4" fill="#ff0000"/>
<rect x="1255.2" y="121.8" width="1.2" height="4.2" fill="#ff0000"/>
<rect x="1254.7" y="121.0" width="3.0" height="1.6" fill="#ff0000"/>
<rect x="1256.7" y="117.6" width="1.8" height="5.2" fill="#1e90ff"/>
<rect x="1258.2" y="113.4" width="1.8" height="5.2" fill="#ff0000"/>
<rect x="1261.2" y="96.6" width="1.8" height="13.6" fill="#ff0000"/>
<rect x="1262.7" y="96.6" width="1.8" height="9.4" fill="#ff0000"/>
<rect x="1264.2" y="92.4" width="1.8" height="5.2" fill="#ff0000"/>
<rect x="1265.7" y="88.2" width="1.8" height="13.6" fill="#1e90ff"/>
<rect x="1268.7" y="88.2" width="1.8" height="26.2" fill="#1e90ff"/>
<rect x="1270.2" y="113.4" width="1.8" height="9.4" fill="#1e90ff"/>
<rect x="1271.7" y="121.8" width="1.8" height="9.4" fill="#1e90ff"/>
<rect x="1273.2" y="121.8" width="1.8" height="9.4" fill="#f0e68c"/>
<rect x="1274.7" y="130.2" width="1.8" height="9.4" fill="#1e90ff"/>
<rect x="1279.2" y="130.2" width="1.8" height="13.6" fill="#1e90ff"/>
<rect x="1280.7" y="138.6" width="1.2" height="4.2" fill="#f0e68c"/>
<rect x="1280.2" y="142.0" width="3.0" height="1.6" fill="#f0e68c"/>
<rect x="1282.2" y="142.8" width="1.8" height="5.2" fill="#1e90ff"/>
<rect x="1283.7" y="147.0" width="1.8" height="9.4" fill="#1e90ff"/>
<rect x="1285.2" y="155.4" width="1.8" height="13.6" fill="#1e90ff"/>
<rect x="1286.7" y="168.0" width="1.8" height="9.4" fill="#1e90ff"/>
<rect x="1288.2" y="176.4" width="1.8" height="5.2" fill="#1e90ff"/>
<rect x="1289.7" y="176.4" width="1.2" height="4.2" fill="#f0e68c"/>
<rect x="1289.2" y="179.8" width="3.0" height="1.6" fill="#f0e68c"/>
<rect x="1291.2" y="172.2" width="1.8" height="9.4" fill="#ff0000"/>
<rect x="1292.7" y="172.2" width="1.8" height="5.2" fill="#ff0000"/>
<rect x="1294.2" y="163.8" width="1.8" height="9.4" fill="#ff0000"/>
<rect x="1295.7" y="163.8" width="1.2" height="21.0" fill="#f0e68c"/>
<rect x="1295.2" y="167.2" width="3.0" height="1.6" fill="#f0e68c"/>
<rect x="1297.2" y="163.8" width="1.8" height="13.6" fill="#1e90ff"/>
<rect x="1298.7" y="176.4" width="1.8" height="13.6" fill="#1e90ff"/>
<rect x="1300.2" y="189.0" width="1.8" height="9.4" fill="#1e90ff"/>
<rect x="1301.7" y="184.8" width="1.8" height="9.4" fill="#1e90ff"/>
<rect x="1303.2" y="168.0" width="1.8" height="17.8" fill="#ff0000"/>
<rect x="1304.7" y="163.8" width="1.8" height="22.0" fill="#ff0000"/>
<rect x="1306.2" y="159.6" width="1.8" height="5.2" fill="#ff0000"/>
<rect x="1307.7" y="147.0" width="1.8" height="13.6" fill="#ff0000"/>
<rect x="1309.2" y="147.0" width="1.8" height="5.2" fill="#ff0000"/>
<rect x="1310.7" y="142.8" width="1.8" height="9.4" fill="#ff0000"/>
<rect x="1311.7" y="142.0" width="3.0" height="1.6" fill="#f0e68c"/>
<rect x="1313.7" y="138.6" width="1.2" height="12.6" fill="#f0e68c"/>
<rect x="1313.2" y="142.0" width="3.0" height="1.6" fill="#f0e68c"/>
<rect x="1315.2" y="142.8" width="1.8" height="5.2" fill="#1e90ff"/>
<rect x="1316.7" y="142.8" width="1.8" height="9.4" fill="#1e90ff"/>
<rect x="1318.2" y="147.0" width="1.8" height="5.2" fill="#ff0000"/>
<rect x="1319.7" y="142.8" width="1.8" height="9.4" fill="#ff0000"/>
<rect x="1321.2" y="138.6" width="1.8" height="5.2" fill="#f0e68c"/>
<rect x="1322.7" y="134.4" width="1.8" height="9.4" fill="#f0e68c"/>
<rect x="1324.2" y="130.2" width="1.8" height="9.4" fill="#ff0000"/>
<rect x="1327.2" y="126.0" width="1.8" height="5.2" fill="#ff0000"/>
<rect x="1328.7" y="121.8" width="1.8" height="5.2" fill="#ff0000"/>
<rect x="1330.2" y="121.8" width="1.8" height="9.4" fill="#f0e68c"/>
<rect x="1331.7" y="126.0" width="1.8" height="5.2" fill="#1e90ff"/>
<rect x="1333.2" y="130.2" width="1.2" height="4.2" fill="#f0e68c"/>
<rect x="1332.7" y="129.4" width="3.0" height="1.6" fill="#f0e68c"/>
<rect x="1334.7" y="126.0" width="1.8" height="13.6" fill="#1e90ff"/>
<rect x="1336.2" y="134.4" width="1.8" height="17.8" fill="#1e90ff"/>
<rect x="1337.7" y="151.2" width="1.8" height="9.4" fill="#1e90ff"/>
<rect x="1339.2" y="159.6" width="1.8" height="9.4" fill="#1e90ff"/>
<rect x="1340.7" y="168.0" width="1.8" height="13.6" fill="#1e90ff"/>
<rect x="1342.2" y="176.4" width="1.8" height="26.2" fill="#1e90ff"/>
<rect x="1343.7" y="189.0" width="1.8" height="13.6" fill="#1e90ff"/>
<rect x="1345.2" y="197.4" width="1.8" height="9.4" fill="#1e90ff"/>
<rect x="1346.7" y="205.8" width="1.8" height="9.4" fill="#f0e68c"/>
<rect x="1348.2" y="205.8" width="1.8" height="9.4" fill="#ff0000"/>
<rect x="1349.7" y="193.2" width="1.8" height="13.6" fill="#ff0000"/>
<rect x="1351.2" y="184.8" width="1.8" height="13.6" fill="#ff0000"/>
<rect x="1352.7" y="180.6" width="1.8" height="13.6" fill="#ff0000"/>
<rect x="1354.2" y="172.2" width="1.8" height="13.6" fill="#ff0000"/>
<rect x="1355.7" y="168.0" width="1.2" height="8.4" fill="#f0e68c"/>
<rect x="1355.2" y="175.6" width="3.0" height="1.6" fill="#f0e68c"/>
<rect x="1357.2" y="172.2" width="1.8" height="17.8" fill="#1e90ff"/>
<rect x="1358.7" y="176.4" width="1.2" height="8.4" fill="#f0e68c"/>
<rect x="1358.2" y="179.8" width="3.0" height="1.6" fill="#f0e68c"/>
<rect x="1360.2" y="180.6" width="1.8" height="9.4" fill="#1e90ff"/>
<rect x="1361.7" y="180.6" width="1.8" height="9.4" fill="#1e90ff"/>
<rect x="1363.2" y="184.8" width="1.2" height="4.2" fill="#f0e68c"/>
<rect x="1362.7" y="188.2" width="3.0" height="1.6" fill="#f0e68c"/>
<rect x="1366.2" y="189.0" width="1.2" height="12.6" fill="#f0e68c"/>
<rect x="1365.7" y="192.4" width="3.0" height="1.6" fill="#f0e68c"/>
<rect x="1367.7" y="193.2" width="1.2" height="4.2" fill="#ff0000"/>
<rect x="1367.2" y="192.4" width="3.0" height="1.6" fill="#ff0000"/>
<rect x="1369.2" y="189.0" width="1.8" height="5.2" fill="#ff0000"/>
<rect x="1370.7" y="176.4" width="1.8" height="13.6" fill="#ff0000"/>
<rect x="1372.2" y="176.4" width="1.8" height="5.2" fill="#ff0000"/>
<rect x="1373.7" y="176.4" width="1.2" height="4.2" fill="#f0e68c"/>
<rect x="1373.2" y="175.6" width="3.0" height="1.6" fill="#f0e68c"/>
<rect x="1375.2" y="172.2" width="1.8" height="9.4" fill="#ff0000"/>
<rect x="1376.2" y="171.4" width="3.0" height="1.6" fill="#f0e68c"/>
<rect x="1377.7" y="171.4" width="3.0" height="1.6" fill="#f0e68c"/>
<rect x="1381.2" y="172.2" width="1.8" height="5.2" fill="#1e90ff"/>
<rect x="1382.7" y="172.2" width="1.8" height="13.6" fill="#1e90ff"/>
<rect x="1384.2" y="176.4" width="1.2" height="8.4" fill="#f0e68c"/>
<rect x="1383.7" y="179.8" width="3.0" height="1.6" fill="#f0e68c"/>
<rect x="1385.2" y="179.8" width="3.0" height="1.6" fill="#f0e68c"/>
<rect x="1387.2" y="176.4" width="1.8" height="9.4" fill="#ff0000"/>
<rect x="1388.7" y="168.0" width="1.8" height="9.4" fill="#ff0000"/>
<rect x="1390.2" y="159.6" width="1.8" height="9.4" fill="#ff0000"/>
<rect x="1391.7" y="155.4" width="1.8" height="5.2" fill="#ff0000"/>
<rect x="1393.2" y="151.2" width="1.8" height="9.4" fill="#1e90ff"/>
<rect x="1394.2" y="158.8" width="3.0" height="1.6" fill="#1e90ff"/>
<rect x="1396.2" y="159.6" width="1.2" height="4.2" fill="#f0e68c"/>
<rect x="1395.7" y="158.8" width="3.0" height="1.6" fill="#f0e68c"/>
<rect x="1397.7" y="159.6" width="1.8" height="5.2" fill="#1e90ff"/>
<rect x="1398.7" y="163.0" width="3.0" height="1.6" fill="#f0e68c"/>
<rect x="1402.2" y="163.8" width="1.2" height="8.4" fill="#f0e68c"/>
<rect x="1401.7" y="163.0" width="3.0" height="1.6" fill="#f0e68c"/>
<rect x="1403.7" y="163.8" width="1.2" height="8.4" fill="#f0e68c"/>
<rect x="1403.2" y="163.0" width="3.0" height="1.6" fill="#f0e68c"/>
<rect x="1405.2" y="163.8" width="1.2" height="4.2" fill="#f0e68c"/>
<rect x="1404.7" y="163.0" width="3.0" height="1.6" fill="#f0e68c"/>
<rect x="1406.2" y="163.0" width="3.0" height="1.6" fill="#f0e68c"/>
<rect x="1408.2" y="159.6" width="1.8" height="5.2" fill="#ff0000"/>
<rect x="1409.7" y="159.6" width="1.2" height="4.2" fill="#f0e68c"/>
<rect x="1409.2" y="158.8" width="3.0" height="1.6" fill="#f0e68c"/>
<rect x="1410.7" y="158.8" width="3.0" height="1.6" fill="#f0e68c"/>
<rect x="1412.7" y="155.4" width="1.2" height="4.2" fill="#1e90ff"/>
<rect x="1412.2" y="158.8" width="3.0" height="1.6" fill="#1e90ff"/>
<rect x="1414.2" y="155.4" width="1.8" height="5.2" fill="#ff0000"/>
<rect x="1415.7" y="147.0" width="1.8" height="9.4" fill="#ff0000"/>
<rect x="1417.2" y="147.0" width="1.8" height="5.2" fill="#ff0000"/>
<rect x="1418.7" y="142.8" width="1.8" height="9.4" fill="#1e90ff"/>
<rect x="1420.2" y="151.2" width="1.8" height="5.2" fill="#1e90ff"/>
<rect x="1421.2" y="154.6" width="3.0" height="1.6" fill="#f0e68c"/>
<rect x="1423.2" y="151.2" width="1.2" height="4.2" fill="#f0e68c"/>
<rect x="1422.7" y="154.6" width="3.0" height="1.6" fill="#f0e68c"/>
<rect x="1424.2" y="154.6" width="3.0" height="1.6" fill="#f0e68c"/>
<rect x="1425.7" y="154.6" width="3.0" height="1.6" fill="#f0e68c"/>
<rect x="1427.7" y="151.2" width="1.8" height="9.4" fill="#f0e68c"/>
<rect x="1429.2" y="159.6" width="1.8" height="5.2" fill="#1e90ff"/>
<rect x="1430.7" y="159.6" width="1.8" height="9.4" fill="#1e90ff"/>
<rect x="1432.2" y="163.8" width="1.8" height="9.4" fill="#1e90ff"/>
<rect x="1433.2" y="171.4" width="3.0" height="1.6" fill="#f0e68c"/>
<rect x="1435.2" y="172.2" width="1.8" height="9.4" fill="#1e90ff"/>
<rect x="1436.7" y="176.4" width="1.8" height="9.4" fill="#1e90ff"/>
<rect x="1438.2" y="180.6" width="1.2" height="4.2" fill="#1e90ff"/>
<rect x="1437.7" y="184.0" width="3.0" height="1.6" fill="#1e90ff"/>
<rect x="1439.7" y="184.8" width="1.2" height="4.2" fill="#f0e68c"/>
<rect x="1439.2" y="184.0" width="3.0" height="1.6" fill="#f0e68c"/>
<rect x="1442.7" y="184.8" width="1.8" height="9.4" fill="#1e90ff"/>
<rect x="1444.2" y="184.8" width="1.8" height="9.4" fill="#ff0000"/>
<rect x="1445.7" y="180.6" width="1.2" height="8.4" fill="#f0e68c"/>
<rect x="1445.2" y="184.0" width="3.0" height="1.6" fill="#f0e68c"/>
<rect x="1447.2" y="180.6" width="1.8" height="5.2" fill="#ff0000"/>
<rect x="1448.7" y="172.2" width="1.8" height="9.4" fill="#ff0000"/>
<rect x="1450.2" y="168.0" width="1.8" height="9.4" fill="#ff0000"/>
<rect x="1453.2" y="168.0" width="1.2" height="4.2" fill="#f0e68c"/>
<rect x="1452.7" y="167.2" width="3.0" height="1.6" fill="#f0e68c"/>
<rect x="1454.7" y="159.6" width="1.8" height="9.4" fill="#ff0000"/>
<rect x="1456.2" y="163.8" width="1.8" height="5.2" fill="#1e90ff"/>
<rect x="1457.7" y="159.6" width="1.8" height="9.4" fill="#ff0000"/>
<rect x="1459.2" y="163.8" width="1.2" height="4.2" fill="#f0e68c"/>
<rect x="1458.7" y="163.0" width="3.0" height="1.6" fill="#f0e68c"/>
<rect x="1460.7" y="159.6" width="1.2" height="4.2" fill="#f0e68c"/>
<rect x="1460.2" y="163.0" width="3.0" height="1.6" fill="#f0e68c"/>
<rect x="1462.2" y="159.6" width="1.8" height="9.4" fill="#ff0000"/>
<rect x="1463.7" y="155.4" width="1.8" height="9.4" fill="#1e90ff"/>
<rect x="1465.2" y="159.6" width="1.8" height="9.4" fill="#1e90ff"/>
<rect x="1466.7" y="163.8" width="1.8" height="5.2" fill="#ff0000"/>
<rect x="1467.7" y="163.0" width="3.0" height="1.6" fill="#ff0000"/>
<rect x="1469.7" y="163.8" width="1.8" height="5.2" fill="#1e90ff"/>
<rect x="1471.2" y="159.6" width="1.8" height="9.4" fill="#ff0000"/>
<rect x="1472.7" y="163.8" width="1.2" height="4.2" fill="#f0e68c"/>
<rect x="1472.2" y="163.0" width="3.0" height="1.6" fill="#f0e68c"/>
<rect x="1474.2" y="163.8" width="1.8" height="5.2" fill="#1e90ff"/>
<rect x="1475.7" y="168.0" width="1.8" height="5.2" fill="#1e90ff"/>
<rect x="1478.7" y="176.4" width="1.8" height="9.4" fill="#f0e68c"/>
<rect x="1480.2" y="180.6" width="1.2" height="4.2" fill="#ff0000"/>
<rect x="1479.7" y="184.0" width="3.0" height="1.6" fill="#ff0000"/>
<rect x="1481.7" y="180.6" width="1.8" height="9.4" fill="#1e90ff"/>
<rect x="1483.2" y="189.0" width="1.8" height="5.2" fill="#1e90ff"/>
<rect x="1484.7" y="193.2" width="1.8" height="13.6" fill="#ff0000"/>
<rect x="1486.2" y="201.6" width="1.8" height="9.4" fill="#1e90ff"/>
<rect x="1487.7" y="205.8" width="1.2" height="4.2" fill="#f0e68c"/>
<rect x="1487.2" y="209.2" width="3.0" height="1.6" fill="#f0e68c"/>
<rect x="1489.2" y="210.0" width="1.8" height="5.2" fill="#1e90ff"/>
<rect x="1490.2" y="217.6" width="3.0" height="1.6" fill="#f0e68c"/>
<rect x="1492.2" y="218.4" width="1.8" height="9.4" fill="#1e90ff"/>
<rect x="1495.2" y="226.8" width="1.8" height="5.2" fill="#ff0000"/>
<rect x="1496.7" y="226.8" width="1.2" height="4.2" fill="#f0e68c"/>
<rect x="1496.2" y="230.2" width="3.0" height="1.6" fill="#f0e68c"/>
<rect x="1498.2" y="231.0" width="1.8" height="5.2" fill="#1e90ff"/>
<rect x="1499.7" y="231.0" width="1.8" height="5.2" fill="#ff0000"/>
<rect x="1501.2" y="226.8" width="1.8" height="9.4" fill="#ff0000"/>
<rect x="1502.2" y="221.8" width="3.0" height="1.6" fill="#f0e68c"/>
<rect x="1504.2" y="222.6" width="1.2" height="4.2" fill="#f0e68c"/>
<rect x="1503.7" y="221.8" width="3.0" height="1.6" fill="#f0e68c"/>
<rect x="1505.2" y="217.6" width="3.0" height="1.6" fill="#f0e68c"/>
<rect x="1507.2" y="218.4" width="1.8" height="5.2" fill="#1e90ff"/>
<rect x="1510.2" y="226.8" width="1.8" height="5.2" fill="#1e90ff"/>
<rect x="1511.7" y="231.0" width="1.2" height="4.2" fill="#f0e68c"/>
<rect x="1511.2" y="230.2" width="3.0" height="1.6" fill="#f0e68c"/>
<rect x="1513.2" y="231.0" width="1.8" height="9.4" fill="#1e90ff"/>
<rect x="1514.7" y="239.4" width="1.2" height="4.2" fill="#f0e68c"/>
<rect x="1514.2" y="238.6" width="3.0" height="1.6" fill="#f0e68c"/>
<rect x="1517.2" y="234.4" width="3.0" height="1.6" fill="#f0e68c"/>
<rect x="1522.2" y="231.0" width="1.2" height="4.2" fill="#f0e68c"/>
<rect x="1521.7" y="234.4" width="3.0" height="1.6" fill="#f0e68c"/>
<rect x="1523.2" y="230.2" width="3.0" height="1.6" fill="#f0e68c"/>
<rect x="1525.2" y="226.8" width="1.8" height="5.2" fill="#ff0000"/>
<rect x="1526.2" y="221.8" width="3.0" height="1.6" fill="#f0e68c"/>
<rect x="1527.7" y="217.6" width="3.0" height="1.6" fill="#f0e68c"/>
<rect x="1529.7" y="214.2" width="1.8" height="9.4" fill="#ff0000"/>
<rect x="1530.7" y="217.6" width="3.0" height="1.6" fill="#f0e68c"/>
<rect x="1534.2" y="222.6" width="1.2" height="4.2" fill="#f0e68c"/>
<rect x="1533.7" y="221.8" width="3.0" height="1.6" fill="#f0e68c"/>
<rect x="1535.7" y="222.6" width="1.8" height="13.6" fill="#1e90ff"/>
<rect x="1536.7" y="234.4" width="3.0" height="1.6" fill="#f0e68c"/>
<rect x="1538.2" y="238.6" width="3.0" height="1.6" fill="#f0e68c"/>
<rect x="1540.2" y="235.2" width="1.8" height="9.4" fill="#1e90ff"/>
<rect x="1542.7" y="255.4" width="3.0" height="1.6" fill="#f0e68c"/>
<rect x="1544.2" y="259.6" width="3.0" height="1.6" fill="#f0e68c"/>
<rect x="1546.2" y="256.2" width="1.2" height="4.2" fill="#f0e68c"/>
<rect x="1545.7" y="259.6" width="3.0" height="1.6" fill="#f0e68c"/>
<rect x="1549.2" y="252.0" width="1.8" height="9.4" fill="#ff0000"/>
<rect x="1555.2" y="243.6" width="1.8" height="13.6" fill="#f0e68c"/>
<rect x="1558.2" y="243.6" width="1.2" height="4.2" fill="#f0e68c"/>
<rect x="1557.7" y="247.0" width="3.0" height="1.6" fill="#f0e68c"/>
<rect x="1559.7" y="239.4" width="1.2" height="8.4" fill="#f0e68c"/>
<rect x="1559.2" y="247.0" width="3.0" height="1.6" fill="#f0e68c"/>
<rect x="1561.2" y="247.8" width="1.8" height="5.2" fill="#1e90ff"/>
<rect x="1562.7" y="247.8" width="1.2" height="4.2" fill="#f0e68c"/>
<rect x="1562.2" y="251.2" width="3.0" height="1.6" fill="#f0e68c"/>
<rect x="1568.7" y="252.0" width="1.2" height="8.4" fill="#f0e68c"/>
<rect x="1568.2" y="255.4" width="3.0" height="1.6" fill="#f0e68c"/>
<rect x="1571.7" y="256.2" width="1.2" height="4.2" fill="#ff0000"/>
<rect x="1571.2" y="259.6" width="3.0" height="1.6" fill="#ff0000"/>
<rect x="1572.7" y="263.8" width="3.0" height="1.6" fill="#f0e68c"/>
<rect x="1574.2" y="259.6" width="3.0" height="1.6" fill="#f0e68c"/>
<rect x="1575.7" y="251.2" width="3.0" height="1.6" fill="#f0e68c"/>
<rect x="1577.2" y="251.2" width="3.0" height="1.6" fill="#f0e68c"/>
<rect x="1582.2" y="235.2" width="1.8" height="9.4" fill="#ff0000"/>
<rect x="1583.7" y="235.2" width="1.8" height="5.2" fill="#ff0000"/>
<rect x="1584.7" y="234.4" width="3.0" height="1.6" fill="#f0e68c"/>
<rect x="1587.7" y="242.8" width="3.0" height="1.6" fill="#f0e68c"/>
<rect x="1592.2" y="242.8" width="3.0" height="1.6" fill="#ff0000"/>
<rect x="1593.7" y="247.0" width="3.0" height="1.6" fill="#f0e68c"/>
<rect x="1595.2" y="247.0" width="3.0" height="1.6" fill="#f0e68c"/>
<rect x="1598.7" y="239.4" width="1.2" height="8.4" fill="#f0e68c"/>
<rect x="1598.2" y="247.0" width="3.0" height="1.6" fill="#f0e68c"/>
<rect x="1604.7" y="252.0" width="1.2" height="4.2" fill="#f0e68c"/>
<rect x="1604.2" y="251.2" width="3.0" height="1.6" fill="#f0e68c"/>
<rect x="1606.2" y="252.0" width="1.2" height="4.2" fill="#f0e68c"/>
<rect x="1605.7" y="251.2" width="3.0" height="1.6" fill="#f0e68c"/>
<rect x="1609.2" y="247.8" width="1.2" height="4.2" fill="#f0e68c"/>
<rect x="1608.7" y="251.2" width="3.0" height="1.6" fill="#f0e68c"/>
<rect x="1613.2" y="255.4" width="3.0" height="1.6" fill="#f0e68c"/>
<rect x="1614.7" y="255.4" width="3.0" height="1.6" fill="#f0e68c"/>
<rect x="1618.2" y="256.2" width="1.2" height="4.2" fill="#f0e68c"/>
<rect x="1617.7" y="259.6" width="3.0" height="1.6" fill="#f0e68c"/>
<rect x="1619.7" y="260.4" width="1.2" height="4.2" fill="#f0e68c"/>
<rect x="1619.2" y="259.6" width="3.0" height="1.6" fill="#f0e68c"/>
<rect x="1622.2" y="263.8" width="3.0" height="1.6" fill="#f0e68c"/>
<rect x="1623.7" y="263.8" width="3.0" height="1.6" fill="#f0e68c"/>
<rect x="1625.7" y="264.6" width="1.8" height="5.2" fill="#1e90ff"/>
<rect x="1626.7" y="268.0" width="3.0" height="1.6" fill="#f0e68c"/>
<rect x="1628.7" y="268.8" width="1.2" height="4.2" fill="#f0e68c"/>
<rect x="1628.2" y="268.0" width="3.0" height="1.6" fill="#f0e68c"/>
<rect x="1631.2" y="259.6" width="3.0" height="1.6" fill="#f0e68c"/>
<rect x="1632.7" y="251.2" width="3.0" height="1.6" fill="#f0e68c"/>
<rect x="1634.2" y="251.2" width="3.0" height="1.6" fill="#f0e68c"/>
<rect x="1637.2" y="242.8" width="3.0" height="1.6" fill="#f0e68c"/>
<rect x="1639.2" y="239.4" width="1.8" height="13.6" fill="#ff0000"/>
<rect x="1640.7" y="231.0" width="1.8" height="9.4" fill="#ff0000"/>
<rect x="1642.2" y="231.0" width="1.2" height="4.2" fill="#1e90ff"/>
<rect x="1641.7" y="230.2" width="3.0" height="1.6" fill="#1e90ff"/>
<rect x="1643.7" y="226.8" width="1.2" height="8.4" fill="#f0e68c"/>
<rect x="1643.2" y="230.2" width="3.0" height="1.6" fill="#f0e68c"/>
<rect x="1645.2" y="226.8" width="1.2" height="4.2" fill="#f0e68c"/>
<rect x="1644.7" y="230.2" width="3.0" height="1.6" fill="#f0e68c"/>
<rect x="1647.7" y="234.4" width="3.0" height="1.6" fill="#f0e68c"/>
<rect x="1649.7" y="231.0" width="1.2" height="8.4" fill="#f0e68c"/>
<rect x="1649.2" y="234.4" width="3.0" height="1.6" fill="#f0e68c"/>
<rect x="1652.2" y="234.4" width="3.0" height="1.6" fill="#f0e68c"/>
<rect x="1653.7" y="238.6" width="3.0" height="1.6" fill="#f0e68c"/>
<rect x="1655.2" y="238.6" width="3.0" height="1.6" fill="#f0e68c"/>
<rect x="1657.2" y="235.2" width="1.2" height="8.4" fill="#f0e68c"/>
<rect x="1656.7" y="238.6" width="3.0" height="1.6" fill="#f0e68c"/>
<rect x="1659.7" y="242.8" width="3.0" height="1.6" fill="#1e90ff"/>
<rect x="1661.7" y="243.6" width="1.2" height="4.2" fill="#f0e68c"/>
<rect x="1661.2" y="242.8" width="3.0" height="1.6" fill="#f0e68c"/>
<rect x="1663.2" y="239.4" width="1.2" height="4.2" fill="#f0e68c"/>
<rect x="1662.7" y="242.8" width="3.0" height="1.6" fill="#f0e68c"/>
<rect x="1664.2" y="247.0" width="3.0" height="1.6" fill="#f0e68c"/>
<rect x="1667.7" y="243.6" width="1.8" height="9.4" fill="#ff0000"/>
<rect x="1670.2" y="234.4" width="3.0" height="1.6" fill="#f0e68c"/>
<rect x="1673.2" y="230.2" width="3.0" height="1.6" fill="#f0e68c"/>
<rect x="1675.2" y="222.6" width="1.8" height="9.4" fill="#ff0000"/>
<rect x="1678.2" y="214.2" width="1.8" height="9.4" fill="#ff0000"/>
<rect x="1679.7" y="205.8" width="1.8" height="13.6" fill="#ff0000"/>
<rect x="1682.7" y="205.8" width="1.2" height="4.2" fill="#f0e68c"/>
<rect x="1682.2" y="209.2" width="3.0" height="1.6" fill="#f0e68c"/>
<rect x="1685.7" y="205.8" width="1.2" height="8.4" fill="#f0e68c"/>
<rect x="1685.2" y="209.2" width="3.0" height="1.6" fill="#f0e68c"/>
<rect x="1691.7" y="210.0" width="1.2" height="4.2" fill="#f0e68c"/>
<rect x="1691.2" y="209.2" width="3.0" height="1.6" fill="#f0e68c"/>
<rect x="1692.7" y="209.2" width="3.0" height="1.6" fill="#f0e68c"/>
<rect x="1695.7" y="209.2" width="3.0" height="1.6" fill="#f0e68c"/>
<rect x="1697.7" y="201.6" width="1.8" height="9.4" fill="#ff0000"/>
<rect x="1698.7" y="205.0" width="3.0" height="1.6" fill="#f0e68c"/>
<rect x="1700.7" y="205.8" width="1.8" height="5.2" fill="#1e90ff"/>
<rect x="1702.2" y="210.0" width="1.8" height="13.6" fill="#1e90ff"/>
<rect x="1703.7" y="218.4" width="1.2" height="4.2" fill="#f0e68c"/>
<rect x="1703.2" y="217.6" width="3.0" height="1.6" fill="#f0e68c"/>
<rect x="1705.2" y="218.4" width="1.2" height="4.2" fill="#f0e68c"/>
<rect x="1704.7" y="217.6" width="3.0" height="1.6" fill="#f0e68c"/>
<rect x="1706.2" y="217.6" width="3.0" height="1.6" fill="#f0e68c"/>
<rect x="1707.7" y="217.6" width="3.0" height="1.6" fill="#f0e68c"/>
<rect x="1711.2" y="222.6" width="1.2" height="4.2" fill="#1e90ff"/>
<rect x="1710.7" y="221.8" width="3.0" height="1.6" fill="#1e90ff"/>
<rect x="1713.7" y="226.0" width="3.0" height="1.6" fill="#f0e68c"/>
<rect x="1717.2" y="226.8" width="1.8" height="5.2" fill="#1e90ff"/>
<rect x="1720.2" y="231.0" width="1.8" height="5.2" fill="#1e90ff"/>
<rect x="1721.7" y="235.2" width="1.8" height="9.4" fill="#1e90ff"/>
<rect x="1723.2" y="239.4" width="1.8" height="9.4" fill="#1e90ff"/>
<rect x="1724.7" y="247.8" width="1.8" height="9.4" fill="#1e90ff"/>
<rect x="1726.2" y="256.2" width="1.8" height="9.4" fill="#f0e68c"/>
<rect x="1727.7" y="256.2" width="1.8" height="9.4" fill="#ff0000"/>
<rect x="1729.2" y="243.6" width="1.8" height="13.6" fill="#ff0000"/>
<rect x="1730.7" y="235.2" width="1.8" height="9.4" fill="#ff0000"/>
<rect x="1732.2" y="222.6" width="1.8" height="17.8" fill="#ff0000"/>
<rect x="1733.7" y="222.6" width="1.8" height="13.6" fill="#1e90ff"/>
<rect x="1735.2" y="231.0" width="1.8" height="13.6" fill="#1e90ff"/>
<rect x="1736.7" y="243.6" width="1.8" height="9.4" fill="#1e90ff"/>
<rect x="1738.2" y="247.8" width="1.8" height="17.8" fill="#ff0000"/>
<rect x="1739.7" y="260.4" width="1.8" height="5.2" fill="#1e90ff"/>
<rect x="1741.2" y="264.6" width="1.8" height="5.2" fill="#1e90ff"/>
<rect x="1742.7" y="268.8" width="1.2" height="4.2" fill="#f0e68c"/>
<rect x="1742.2" y="268.0" width="3.0" height="1.6" fill="#f0e68c"/>
<rect x="1745.7" y="273.0" width="1.8" height="5.2" fill="#1e90ff"/>
<rect x="1747.2" y="273.0" width="1.2" height="8.4" fill="#f0e68c"/>
<rect x="1746.7" y="276.4" width="3.0" height="1.6" fill="#f0e68c"/>
<rect x="1748.7" y="277.2" width="1.2" height="4.2" fill="#f0e68c"/>
<rect x="1748.2" y="276.4" width="3.0" height="1.6" fill="#f0e68c"/>
<rect x="1753.2" y="277.2" width="1.8" height="5.2" fill="#ff0000"/>
<rect x="1754.7" y="277.2" width="1.2" height="4.2" fill="#f0e68c"/>
<rect x="1754.2" y="276.4" width="3.0" height="1.6" fill="#f0e68c"/>
<rect x="1757.7" y="277.2" width="1.2" height="4.2" fill="#f0e68c"/>
<rect x="1757.2" y="280.6" width="3.0" height="1.6" fill="#f0e68c"/>
<rect x="1758.7" y="280.6" width="3.0" height="1.6" fill="#f0e68c"/>
<rect x="1760.2" y="280.6" width="3.0" height="1.6" fill="#f0e68c"/>
<rect x="1762.2" y="277.2" width="1.2" height="4.2" fill="#f0e68c"/>
<rect x="1761.7" y="280.6" width="3.0" height="1.6" fill="#f0e68c"/>
<rect x="1763.7" y="273.0" width="1.8" height="9.4" fill="#ff0000"/>
<rect x="1765.2" y="260.4" width="1.8" height="13.6" fill="#ff0000"/>
<rect x="1766.7" y="247.8" width="1.8" height="22.0" fill="#ff0000"/>
<rect x="1768.2" y="243.6" width="1.8" height="17.8" fill="#ff0000"/>
<rect x="1769.2" y="242.8" width="3.0" height="1.6" fill="#f0e68c"/>
<rect x="1771.2" y="239.4" width="1.2" height="4.2" fill="#f0e68c"/>
<rect x="1770.7" y="242.8" width="3.0" height="1.6" fill="#f0e68c"/>
<rect x="1772.7" y="239.4" width="1.8" height="5.2" fill="#ff0000"/>
<rect x="1774.2" y="235.2" width="1.2" height="4.2" fill="#f0e68c"/>
<rect x="1773.7" y="238.6" width="3.0" height="1.6" fill="#f0e68c"/>
<rect x="1775.7" y="235.2" width="1.2" height="4.2" fill="#f0e68c"/>
<rect x="1775.2" y="238.6" width="3.0" height="1.6" fill="#f0e68c"/>
<rect x="1777.2" y="235.2" width="1.8" height="5.2" fill="#ff0000"/>
<rect x="1778.7" y="226.8" width="1.8" height="13.6" fill="#ff0000"/>
<rect x="1780.2" y="222.6" width="1.8" height="9.4" fill="#ff0000"/>
<rect x="1781.7" y="222.6" width="1.8" height="5.2" fill="#ff0000"/>
<rect x="1782.7" y="221.8" width="3.0" height="1.6" fill="#f0e68c"/>
<rect x="1784.7" y="214.2" width="1.8" height="9.4" fill="#ff0000"/>
<rect x="1785.7" y="217.6" width="3.0" height="1.6" fill="#f0e68c"/>
<rect x="1787.7" y="218.4" width="1.8" height="5.2" fill="#1e90ff"/>
<rect x="1789.2" y="222.6" width="1.8" height="5.2" fill="#1e90ff"/>
<rect x="1793.2" y="234.4" width="3.0" height="1.6" fill="#f0e68c"/>
<rect x="1794.7" y="230.2" width="3.0" height="1.6" fill="#f0e68c"/>
<rect x="1796.2" y="226.0" width="3.0" height="1.6" fill="#f0e68c"/>
<rect x="1797.7" y="221.8" width="3.0" height="1.6" fill="#f0e68c"/>
<rect x="1799.7" y="222.6" width="1.2" height="4.2" fill="#f0e68c"/>
<rect x="1799.2" y="221.8" width="3.0" height="1.6" fill="#f0e68c"/>
<rect x="1801.2" y="218.4" width="1.8" height="9.4" fill="#1e90ff"/>
<rect x="1802.7" y="226.8" width="1.2" height="4.2" fill="#f0e68c"/>
<rect x="1802.2" y="226.0" width="3.0" height="1.6" fill="#f0e68c"/>
<rect x="1804.2" y="226.8" width="1.2" height="4.2" fill="#f0e68c"/>
<rect x="1803.7" y="226.0" width="3.0" height="1.6" fill="#f0e68c"/>
<rect x="1805.7" y="222.6" width="1.2" height="4.2" fill="#f0e68c"/>
<rect x="1805.2" y="226.0" width="3.0" height="1.6" fill="#f0e68c"/>
<rect x="1806.7" y="230.2" width="3.0" height="1.6" fill="#f0e68c"/>
<rect x="1808.2" y="230.2" width="3.0" height="1.6" fill="#f0e68c"/>
<rect x="1811.2" y="234.4" width="3.0" height="1.6" fill="#f0e68c"/>
<rect x="1813.2" y="231.0" width="1.2" height="8.4" fill="#f0e68c"/>
<rect x="1812.7" y="234.4" width="3.0" height="1.6" fill="#f0e68c"/>
<rect x="1814.7" y="235.2" width="1.2" height="4.2" fill="#1e90ff"/>
<rect x="1814.2" y="234.4" width="3.0" height="1.6" fill="#1e90ff"/>
<rect x="1816.2" y="231.0" width="1.2" height="4.2" fill="#1e90ff"/>
<rect x="1815.7" y="234.4" width="3.0" height="1.6" fill="#1e90ff"/>
<rect x="1817.7" y="235.2" width="1.2" height="4.2" fill="#f0e68c"/>
<rect x="1817.2" y="234.4" width="3.0" height="1.6" fill="#f0e68c"/>
<rect x="1818.7" y="238.6" width="3.0" height="1.6" fill="#f0e68c"/>
<rect x="1820.7" y="239.4" width="1.2" height="4.2" fill="#f0e68c"/>
<rect x="1820.2" y="238.6" width="3.0" height="1.6" fill="#f0e68c"/>
<rect x="1821.7" y="242.8" width="3.0" height="1.6" fill="#f0e68c"/>
<rect x="1825.2" y="247.8" width="1.8" height="5.2" fill="#1e90ff"/>
<rect x="1826.7" y="252.0" width="1.8" height="5.2" fill="#1e90ff"/>
<rect x="1827.7" y="251.2" width="3.0" height="1.6" fill="#f0e68c"/>
<rect x="1829.7" y="252.0" width="1.2" height="4.2" fill="#1e90ff"/>
<rect x="1829.2" y="251.2" width="3.0" height="1.6" fill="#1e90ff"/>
<rect x="1831.2" y="247.8" width="1.8" height="5.2" fill="#ff0000"/>
<rect x="1833.7" y="247.0" width="3.0" height="1.6" fill="#f0e68c"/>
<rect x="1837.2" y="247.8" width="1.2" height="4.2" fill="#f0e68c"/>
<rect x="1836.7" y="247.0" width="3.0" height="1.6" fill="#f0e68c"/>
<rect x="1838.7" y="243.6" width="1.2" height="8.4" fill="#f0e68c"/>
<rect x="1838.2" y="247.0" width="3.0" height="1.6" fill="#f0e68c"/>
<rect x="1839.7" y="247.0" width="3.0" height="1.6" fill="#f0e68c"/>
<rect x="1841.7" y="243.6" width="1.2" height="4.2" fill="#f0e68c"/>
<rect x="1841.2" y="247.0" width="3.0" height="1.6" fill="#f0e68c"/>
<rect x="1845.7" y="251.2" width="3.0" height="1.6" fill="#f0e68c"/>
<rect x="1847.7" y="252.0" width="1.2" height="4.2" fill="#f0e68c"/>
<rect x="1847.2" y="251.2" width="3.0" height="1.6" fill="#f0e68c"/>
<rect x="1849.2" y="247.8" width="1.2" height="4.2" fill="#f0e68c"/>
<rect x="1848.7" y="251.2" width="3.0" height="1.6" fill="#f0e68c"/>
<rect x="1851.7" y="255.4" width="3.0" height="1.6" fill="#f0e68c"/>
<rect x="1854.7" y="259.6" width="3.0" height="1.6" fill="#f0e68c"/>
<rect x="1859.2" y="268.0" width="3.0" height="1.6" fill="#f0e68c"/>
<rect x="1860.7" y="272.2" width="3.0" height="1.6" fill="#f0e68c"/>
<rect x="1862.7" y="273.0" width="1.2" height="4.2" fill="#f0e68c"/>
<rect x="1862.2" y="272.2" width="3.0" height="1.6" fill="#f0e68c"/>
<rect x="1864.2" y="273.0" width="1.8" height="9.4" fill="#1e90ff"/>
<rect x="1865.7" y="277.2" width="1.2" height="4.2" fill="#f0e68c"/>
<rect x="1865.2" y="276.4" width="3.0" height="1.6" fill="#f0e68c"/>
<rect x="1866.7" y="276.4" width="3.0" height="1.6" fill="#f0e68c"/>
<rect x="1870.2" y="277.2" width="1.2" height="4.2" fill="#f0e68c"/>
<rect x="1869.7" y="276.4" width="3.0" height="1.6" fill="#f0e68c"/>
<rect x="1871.2" y="276.4" width="3.0" height="1.6" fill="#ff0000"/>
<rect x="1872.7" y="276.4" width="3.0" height="1.6" fill="#f0e68c"/>
<rect x="1874.7" y="277.2" width="1.2" height="4.2" fill="#f0e68c"/>
<rect x="1874.2" y="276.4" width="3.0" height="1.6" fill="#f0e68c"/>
<rect x="1876.2" y="273.0" width="1.2" height="4.2" fill="#f0e68c"/>
<rect x="1875.7" y="276.4" width="3.0" height="1.6" fill="#f0e68c"/>
<rect x="1877.2" y="280.6" width="3.0" height="1.6" fill="#f0e68c"/>
<rect x="1878.7" y="276.4" width="3.0" height="1.6" fill="#f0e68c"/>
<rect x="1880.7" y="277.2" width="1.2" height="8.4" fill="#f0e68c"/>
<rect x="1880.2" y="276.4" width="3.0" height="1.6" fill="#f0e68c"/>
<rect x="1884.7" y="268.0" width="3.0" height="1.6" fill="#f0e68c"/>
<rect x="1886.2" y="268.0" width="3.0" height="1.6" fill="#f0e68c"/>
<rect x="1888.2" y="268.8" width="1.2" height="4.2" fill="#f0e68c"/>
<rect x="1887.7" y="268.0" width="3.0" height="1.6" fill="#f0e68c"/>
<rect x="1890.7" y="268.0" width="3.0" height="1.6" fill="#f0e68c"/>
<rect x="1895.7" y="268.8" width="1.2" height="8.4" fill="#f0e68c"/>
<rect x="1895.2" y="268.0" width="3.0" height="1.6" fill="#f0e68c"/>
<rect x="1899.7" y="268.0" width="3.0" height="1.6" fill="#f0e68c"/>
<rect x="1903.2" y="268.8" width="1.8" height="9.4" fill="#1e90ff"/>
<rect x="1904.7" y="277.2" width="1.2" height="4.2" fill="#f0e68c"/>
<rect x="1904.2" y="276.4" width="3.0" height="1.6" fill="#f0e68c"/>
<rect x="1907.7" y="277.2" width="1.8" height="9.4" fill="#1e90ff"/>
<rect x="1909.2" y="281.4" width="1.2" height="4.2" fill="#f0e68c"/>
<rect x="1908.7" y="280.6" width="3.0" height="1.6" fill="#f0e68c"/>
<rect x="1910.7" y="277.2" width="1.8" height="9.4" fill="#1e90ff"/>
<rect x="1911.7" y="293.2" width="3.0" height="1.6" fill="#f0e68c"/>
<rect x="1913.2" y="297.4" width="3.0" height="1.6" fill="#f0e68c"/>
<rect x="1916.7" y="285.6" width="1.2" height="12.6" fill="#f0e68c"/>
<rect x="1916.2" y="297.4" width="3.0" height="1.6" fill="#f0e68c"/>
<rect x="1919.2" y="293.2" width="3.0" height="1.6" fill="#f0e68c"/>
<rect x="1920.7" y="297.4" width="3.0" height="1.6" fill="#f0e68c"/>
<rect x="1922.7" y="294.0" width="1.8" height="9.4" fill="#ff0000"/>
<rect x="1924.2" y="289.8" width="1.2" height="8.4" fill="#f0e68c"/>
<rect x="1923.7" y="293.2" width="3.0" height="1.6" fill="#f0e68c"/>
<rect x="12.5" y="553.3" width="3.5" height="1.6" fill="#1e90ff"/>
<rect x="17.5" y="554.1" width="1.2" height="7.5" fill="#f0e68c"/>
<rect x="17.0" y="553.3" width="3.5" height="1.6" fill="#f0e68c"/>
<rect x="18.5" y="553.3" width="3.5" height="1.6" fill="#f0e68c"/>
<rect x="20.5" y="546.6" width="1.2" height="7.5" fill="#f0e68c"/>
<rect x="20.0" y="553.3" width="3.5" height="1.6" fill="#f0e68c"/>
<rect x="22.0" y="554.1" width="2.2" height="8.5" fill="#1e90ff"/>
<rect x="24.5" y="553.3" width="3.5" height="1.6" fill="#f0e68c"/>
<rect x="32.0" y="545.8" width="3.5" height="1.6" fill="#f0e68c"/>
<rect x="38.0" y="545.8" width="3.5" height="1.6" fill="#f0e68c"/>
<rect x="39.5" y="553.3" width="3.5" height="1.6" fill="#f0e68c"/>
<rect x="41.5" y="539.1" width="2.2" height="23.6" fill="#ff0000"/>
<rect x="44.5" y="509.0" width="2.2" height="46.1" fill="#ff0000"/>
<rect x="46.0" y="494.0" width="1.2" height="22.6" fill="#f0e68c"/>
<rect x="45.5" y="515.7" width="3.5" height="1.6" fill="#f0e68c"/>
<rect x="48.5" y="515.7" width="3.5" height="1.6" fill="#f0e68c"/>
<rect x="56.5" y="516.5" width="1.2" height="7.5" fill="#f0e68c"/>
<rect x="56.0" y="523.2" width="3.5" height="1.6" fill="#f0e68c"/>
<rect x="62.0" y="500.7" width="3.5" height="1.6" fill="#f0e68c"/>
<rect x="63.5" y="500.7" width="3.5" height="1.6" fill="#f0e68c"/>
<rect x="68.0" y="485.6" width="3.5" height="1.6" fill="#f0e68c"/>
<rect x="71.5" y="478.9" width="1.2" height="7.5" fill="#f0e68c"/>
<rect x="71.0" y="485.6" width="3.5" height="1.6" fill="#f0e68c"/>
<rect x="72.5" y="485.6" width="3.5" height="1.6" fill="#f0e68c"/>
<rect x="74.0" y="485.6" width="3.5" height="1.6" fill="#f0e68c"/>
<rect x="76.0" y="478.9" width="1.2" height="15.0" fill="#f0e68c"/>
<rect x="75.5" y="485.6" width="3.5" height="1.6" fill="#f0e68c"/>
<rect x="81.5" y="508.2" width="3.5" height="1.6" fill="#f0e68c"/>
<rect x="83.5" y="509.0" width="2.2" height="8.5" fill="#1e90ff"/>
<rect x="84.5" y="523.2" width="3.5" height="1.6" fill="#f0e68c"/>
<rect x="89.0" y="545.8" width="3.5" height="1.6" fill="#f0e68c"/>
<rect x="95.5" y="569.2" width="2.2" height="8.5" fill="#1e90ff"/>
<rect x="97.0" y="569.2" width="1.2" height="7.5" fill="#f0e68c"/>
<rect x="96.5" y="575.9" width="3.5" height="1.6" fill="#f0e68c"/>
<rect x="98.0" y="568.4" width="3.5" height="1.6" fill="#f0e68c"/>
<rect x="100.0" y="569.2" width="1.2" height="7.5" fill="#f0e68c"/>
<rect x="99.5" y="568.4" width="3.5" height="1.6" fill="#f0e68c"/>
<rect x="107.5" y="569.2" width="1.2" height="7.5" fill="#f0e68c"/>
<rect x="107.0" y="568.4" width="3.5" height="1.6" fill="#f0e68c"/>
<rect x="112.0" y="569.2" width="1.2" height="7.5" fill="#f0e68c"/>
<rect x="111.5" y="568.4" width="3.5" height="1.6" fill="#f0e68c"/>
<rect x="115.0" y="561.6" width="2.2" height="8.5" fill="#ff0000"/>
<rect x="119.5" y="554.1" width="1.2" height="7.5" fill="#f0e68c"/>
<rect x="119.0" y="560.8" width="3.5" height="1.6" fill="#f0e68c"/>
<rect x="121.0" y="554.1" width="1.2" height="7.5" fill="#f0e68c"/>
<rect x="120.5" y="560.8" width="3.5" height="1.6" fill="#f0e68c"/>
<rect x="122.5" y="561.6" width="1.2" height="7.5" fill="#f0e68c"/>
<rect x="122.0" y="560.8" width="3.5" height="1.6" fill="#f0e68c"/>
<rect x="125.0" y="560.8" width="3.5" height="1.6" fill="#f0e68c"/>
<rect x="127.0" y="561.6" width="2.2" height="16.0" fill="#1e90ff"/>
<rect x="134.0" y="568.4" width="3.5" height="1.6" fill="#f0e68c"/>
<rect x="136.0" y="561.6" width="1.2" height="7.5" fill="#f0e68c"/>
<rect x="135.5" y="568.4" width="3.5" height="1.6" fill="#f0e68c"/>
<rect x="145.0" y="561.6" width="1.2" height="7.5" fill="#f0e68c"/>
<rect x="144.5" y="568.4" width="3.5" height="1.6" fill="#f0e68c"/>
<rect x="151.0" y="569.2" width="1.2" height="7.5" fill="#f0e68c"/>
<rect x="150.5" y="575.9" width="3.5" height="1.6" fill="#f0e68c"/>
<rect x="153.5" y="568.4" width="3.5" height="1.6" fill="#f0e68c"/>
<rect x="158.0" y="560.8" width="3.5" height="1.6" fill="#f0e68c"/>
<rect x="160.0" y="554.1" width="1.2" height="15.0" fill="#f0e68c"/>
<rect x="159.5" y="560.8" width="3.5" height="1.6" fill="#f0e68c"/>
<rect x="164.0" y="553.3" width="3.5" height="1.6" fill="#f0e68c"/>
<rect x="165.5" y="553.3" width="3.5" height="1.6" fill="#f0e68c"/>
<rect x="167.5" y="554.1" width="2.2" height="8.5" fill="#ff0000"/>
<rect x="169.0" y="554.1" width="1.2" height="7.5" fill="#f0e68c"/>
<rect x="168.5" y="560.8" width="3.5" height="1.6" fill="#f0e68c"/>
<rect x="174.5" y="575.9" width="3.5" height="1.6" fill="#f0e68c"/>
<rect x="176.0" y="575.9" width="3.5" height="1.6" fill="#ff0000"/>
<rect x="178.0" y="569.2" width="2.2" height="23.6" fill="#1e90ff"/>
<rect x="179.5" y="584.2" width="1.2" height="7.5" fill="#f0e68c"/>
<rect x="179.0" y="583.4" width="3.5" height="1.6" fill="#f0e68c"/>
<rect x="181.0" y="569.2" width="2.2" height="16.0" fill="#ff0000"/>
<rect x="182.0" y="568.4" width="3.5" height="1.6" fill="#f0e68c"/>
<rect x="185.0" y="560.8" width="3.5" height="1.6" fill="#f0e68c"/>
<rect x="186.5" y="553.3" width="3.5" height="1.6" fill="#f0e68c"/>
<rect x="188.0" y="553.3" width="3.5" height="1.6" fill="#f0e68c"/>
<rect x="189.5" y="553.3" width="3.5" height="1.6" fill="#f0e68c"/>
<rect x="191.5" y="546.6" width="2.2" height="8.5" fill="#ff0000"/>
<rect x="197.5" y="531.6" width="1.2" height="15.0" fill="#f0e68c"/>
<rect x="197.0" y="538.3" width="3.5" height="1.6" fill="#f0e68c"/>
<rect x="199.0" y="539.1" width="1.2" height="7.5" fill="#ff0000"/>
<rect x="198.5" y="538.3" width="3.5" height="1.6" fill="#ff0000"/>
<rect x="201.5" y="538.3" width="3.5" height="1.6" fill="#f0e68c"/>
<rect x="203.5" y="531.6" width="1.2" height="7.5" fill="#ff0000"/>
<rect x="203.0" y="538.3" width="3.5" height="1.6" fill="#ff0000"/>
<rect x="206.0" y="545.8" width="3.5" height="1.6" fill="#f0e68c"/>
<rect x="207.5" y="538.3" width="3.5" height="1.6" fill="#f0e68c"/>
<rect x="209.5" y="531.6" width="1.2" height="7.5" fill="#f0e68c"/>
<rect x="209.0" y="538.3" width="3.5" height="1.6" fill="#f0e68c"/>
<rect x="210.5" y="545.8" width="3.5" height="1.6" fill="#f0e68c"/>
<rect x="212.5" y="546.6" width="2.2" height="8.5" fill="#1e90ff"/>
<rect x="217.0" y="561.6" width="2.2" height="16.0" fill="#1e90ff"/>
<rect x="218.0" y="568.4" width="3.5" height="1.6" fill="#f0e68c"/>
<rect x="220.0" y="561.6" width="2.2" height="8.5" fill="#ff0000"/>
<rect x="221.5" y="554.1" width="2.2" height="8.5" fill="#ff0000"/>
<rect x="223.0" y="539.1" width="2.2" height="23.6" fill="#ff0000"/>
<rect x="224.5" y="539.1" width="2.2" height="8.5" fill="#ff0000"/>
<rect x="226.0" y="531.6" width="2.2" height="8.5" fill="#ff0000"/>
<rect x="227.0" y="523.2" width="3.5" height="1.6" fill="#f0e68c"/>
<rect x="229.0" y="516.5" width="2.2" height="8.5" fill="#ff0000"/>
<rect x="231.5" y="500.7" width="3.5" height="1.6" fill="#f0e68c"/>
<rect x="233.0" y="493.2" width="3.5" height="1.6" fill="#f0e68c"/>
<rect x="236.5" y="478.9" width="1.2" height="7.5" fill="#f0e68c"/>
<rect x="236.0" y="485.6" width="3.5" height="1.6" fill="#f0e68c"/>
<rect x="237.5" y="485.6" width="3.5" height="1.6" fill="#f0e68c"/>
<rect x="239.0" y="493.2" width="3.5" height="1.6" fill="#f0e68c"/>
<rect x="240.5" y="500.7" width="3.5" height="1.6" fill="#f0e68c"/>
<rect x="242.5" y="494.0" width="1.2" height="7.5" fill="#f0e68c"/>
<rect x="242.0" y="500.7" width="3.5" height="1.6" fill="#f0e68c"/>
<rect x="243.5" y="508.2" width="3.5" height="1.6" fill="#f0e68c"/>
<rect x="247.0" y="516.5" width="2.2" height="16.0" fill="#f0e68c"/>
<rect x="250.0" y="531.6" width="2.2" height="8.5" fill="#1e90ff"/>
<rect x="251.0" y="553.3" width="3.5" height="1.6" fill="#f0e68c"/>
<rect x="252.5" y="560.8" width="3.5" height="1.6" fill="#f0e68c"/>
<rect x="255.5" y="575.9" width="3.5" height="1.6" fill="#f0e68c"/>
<rect x="257.5" y="576.7" width="1.2" height="30.1" fill="#f0e68c"/>
<rect x="257.0" y="575.9" width="3.5" height="1.6" fill="#f0e68c"/>
<rect x="258.5" y="568.4" width="3.5" height="1.6" fill="#f0e68c"/>
<rect x="260.0" y="568.4" width="3.5" height="1.6" fill="#f0e68c"/>
<rect x="262.0" y="569.2" width="1.2" height="7.5" fill="#f0e68c"/>
<rect x="261.5" y="568.4" width="3.5" height="1.6" fill="#f0e68c"/>
<rect x="263.5" y="569.2" width="1.2" height="7.5" fill="#f0e68c"/>
<rect x="263.0" y="568.4" width="3.5" height="1.6" fill="#f0e68c"/>
<rect x="264.5" y="568.4" width="3.5" height="1.6" fill="#f0e68c"/>
<rect x="266.0" y="568.4" width="3.5" height="1.6" fill="#f0e68c"/>
<rect x="268.0" y="569.2" width="1.2" height="15.0" fill="#f0e68c"/>
<rect x="267.5" y="568.4" width="3.5" height="1.6" fill="#f0e68c"/>
<rect x="271.0" y="569.2" width="1.2" height="7.5" fill="#f0e68c"/>
<rect x="270.5" y="568.4" width="3.5" height="1.6" fill="#f0e68c"/>
<rect x="272.0" y="575.9" width="3.5" height="1.6" fill="#f0e68c"/>
<rect x="273.5" y="568.4" width="3.5" height="1.6" fill="#f0e68c"/>
<rect x="277.0" y="569.2" width="1.2" height="15.0" fill="#f0e68c"/>
<rect x="276.5" y="575.9" width="3.5" height="1.6" fill="#f0e68c"/>
<rect x="278.5" y="576.7" width="1.2" height="22.6" fill="#f0e68c"/>
<rect x="278.0" y="575.9" width="3.5" height="1.6" fill="#f0e68c"/>
<rect x="279.5" y="583.4" width="3.5" height="1.6" fill="#f0e68c"/>
<rect x="281.0" y="583.4" width="3.5" height="1.6" fill="#f0e68c"/>
<rect x="284.5" y="584.2" width="1.2" height="7.5" fill="#f0e68c"/>
<rect x="284.0" y="590.9" width="3.5" height="1.6" fill="#f0e68c"/>
<rect x="286.0" y="584.2" width="1.2" height="7.5" fill="#f0e68c"/>
<rect x="285.5" y="590.9" width="3.5" height="1.6" fill="#f0e68c"/>
<rect x="287.0" y="590.9" width="3.5" height="1.6" fill="#f0e68c"/>
<rect x="291.5" y="590.9" width="3.5" height="1.6" fill="#f0e68c"/>
<rect x="293.5" y="591.7" width="2.2" height="8.5" fill="#1e90ff"/>
<rect x="295.0" y="591.7" width="1.2" height="7.5" fill="#f0e68c"/>
<rect x="294.5" y="598.4" width="3.5" height="1.6" fill="#f0e68c"/>
<rect x="296.0" y="606.0" width="3.5" height="1.6" fill="#f0e68c"/>
<rect x="298.0" y="606.8" width="2.2" height="16.0" fill="#1e90ff"/>
<rect x="300.5" y="621.0" width="3.5" height="1.6" fill="#f0e68c"/>
<rect x="302.5" y="621.8" width="2.2" height="16.0" fill="#1e90ff"/>
<rect x="304.0" y="621.8" width="2.2" height="38.6" fill="#1e90ff"/>
<rect x="305.5" y="644.4" width="2.2" height="23.6" fill="#1e90ff"/>
<rect x="307.0" y="666.9" width="2.2" height="8.5" fill="#1e90ff"/>
<rect x="308.0" y="673.6" width="3.5" height="1.6" fill="#f0e68c"/>
<rect x="311.5" y="659.4" width="2.2" height="8.5" fill="#ff0000"/>
<rect x="313.0" y="659.4" width="1.2" height="7.5" fill="#f0e68c"/>
<rect x="312.5" y="658.6" width="3.5" height="1.6" fill="#f0e68c"/>
<rect x="314.5" y="651.9" width="2.2" height="8.5" fill="#ff0000"/>
<rect x="316.0" y="651.9" width="1.2" height="7.5" fill="#1e90ff"/>
<rect x="315.5" y="651.1" width="3.5" height="1.6" fill="#1e90ff"/>
<rect x="317.5" y="644.4" width="2.2" height="8.5" fill="#ff0000"/>
<rect x="319.0" y="636.8" width="1.2" height="7.5" fill="#1e90ff"/>
<rect x="318.5" y="643.6" width="3.5" height="1.6" fill="#1e90ff"/>
<rect x="320.5" y="636.8" width="2.2" height="8.5" fill="#ff0000"/>
<rect x="322.0" y="629.3" width="2.2" height="8.5" fill="#f0e68c"/>
<rect x="323.0" y="628.5" width="3.5" height="1.6" fill="#f0e68c"/>
<rect x="325.0" y="621.8" width="2.2" height="8.5" fill="#ff0000"/>
<rect x="328.0" y="606.8" width="1.2" height="15.0" fill="#f0e68c"/>
<rect x="327.5" y="613.5" width="3.5" height="1.6" fill="#f0e68c"/>
<rect x="329.5" y="599.2" width="2.2" height="16.0" fill="#f0e68c"/>
<rect x="331.0" y="599.2" width="1.2" height="7.5" fill="#f0e68c"/>
<rect x="330.5" y="606.0" width="3.5" height="1.6" fill="#f0e68c"/>
<rect x="332.5" y="599.2" width="2.2" height="16.0" fill="#ff0000"/>
<rect x="334.0" y="591.7" width="2.2" height="31.1" fill="#ff0000"/>
<rect x="335.5" y="591.7" width="2.2" height="8.5" fill="#1e90ff"/>
<rect x="337.0" y="599.2" width="2.2" height="8.5" fill="#1e90ff"/>
<rect x="338.0" y="606.0" width="3.5" height="1.6" fill="#f0e68c"/>
<rect x="339.5" y="606.0" width="3.5" height="1.6" fill="#f0e68c"/>
<rect x="341.5" y="584.2" width="2.2" height="31.1" fill="#f0e68c"/>
<rect x="343.0" y="614.3" width="2.2" height="16.0" fill="#1e90ff"/>
<rect x="344.5" y="606.8" width="2.2" height="23.6" fill="#ff0000"/>
<rect x="346.0" y="629.3" width="2.2" height="8.5" fill="#f0e68c"/>
<rect x="347.5" y="636.8" width="2.2" height="8.5" fill="#1e90ff"/>
<rect x="348.5" y="643.6" width="3.5" height="1.6" fill="#1e90ff"/>
<rect x="350.5" y="644.4" width="2.2" height="23.6" fill="#1e90ff"/>
<rect x="352.0" y="651.9" width="2.2" height="16.0" fill="#1e90ff"/>
<rect x="353.0" y="666.1" width="3.5" height="1.6" fill="#f0e68c"/>
<rect x="355.0" y="666.9" width="2.2" height="8.5" fill="#1e90ff"/>
<rect x="356.5" y="674.4" width="2.2" height="8.5" fill="#1e90ff"/>
<rect x="359.5" y="674.4" width="2.2" height="16.0" fill="#1e90ff"/>
<rect x="360.5" y="688.7" width="3.5" height="1.6" fill="#f0e68c"/>
<rect x="362.0" y="688.7" width="3.5" height="1.6" fill="#f0e68c"/>
<rect x="363.5" y="688.7" width="3.5" height="1.6" fill="#f0e68c"/>
<rect x="365.0" y="688.7" width="3.5" height="1.6" fill="#1e90ff"/>
<rect x="367.0" y="666.9" width="2.2" height="23.6" fill="#ff0000"/>
<rect x="368.5" y="659.4" width="2.2" height="16.0" fill="#ff0000"/>
<rect x="370.0" y="659.4" width="1.2" height="7.5" fill="#f0e68c"/>
<rect x="369.5" y="658.6" width="3.5" height="1.6" fill="#f0e68c"/>
<rect x="371.5" y="651.9" width="2.2" height="8.5" fill="#ff0000"/>
<rect x="372.5" y="651.1" width="3.5" height="1.6" fill="#f0e68c"/>
<rect x="376.0" y="644.4" width="2.2" height="16.0" fill="#1e90ff"/>
<rect x="377.0" y="658.6" width="3.5" height="1.6" fill="#ff0000"/>
<rect x="378.5" y="658.6" width="3.5" height="1.6" fill="#1e90ff"/>
<rect x="380.0" y="658.6" width="3.5" height="1.6" fill="#f0e68c"/>
<rect x="382.0" y="659.4" width="1.2" height="7.5" fill="#f0e68c"/>
<rect x="381.5" y="658.6" width="3.5" height="1.6" fill="#f0e68c"/>
<rect x="385.0" y="651.9" width="1.2" height="15.0" fill="#f0e68c"/>
<rect x="384.5" y="658.6" width="3.5" height="1.6" fill="#f0e68c"/>
<rect x="386.5" y="651.9" width="1.2" height="7.5" fill="#f0e68c"/>
<rect x="386.0" y="658.6" width="3.5" height="1.6" fill="#f0e68c"/>
<rect x="388.0" y="659.4" width="2.2" height="16.0" fill="#1e90ff"/>
<rect x="389.0" y="666.1" width="3.5" height="1.6" fill="#f0e68c"/>
<rect x="391.0" y="659.4" width="2.2" height="16.0" fill="#1e90ff"/>
<rect x="392.0" y="673.6" width="3.5" height="1.6" fill="#f0e68c"/>
<rect x="394.0" y="674.4" width="1.2" height="7.5" fill="#f0e68c"/>
<rect x="393.5" y="673.6" width="3.5" height="1.6" fill="#f0e68c"/>
<rect x="395.0" y="673.6" width="3.5" height="1.6" fill="#f0e68c"/>
<rect x="397.0" y="674.4" width="2.2" height="16.0" fill="#1e90ff"/>
<rect x="398.0" y="681.2" width="3.5" height="1.6" fill="#ff0000"/>
<rect x="400.0" y="674.4" width="2.2" height="16.0" fill="#ff0000"/>
<rect x="401.5" y="666.9" width="2.2" height="8.5" fill="#ff0000"/>
<rect x="403.0" y="659.4" width="2.2" height="8.5" fill="#ff0000"/>
<rect x="404.5" y="644.4" width="2.2" height="16.0" fill="#ff0000"/>
<rect x="406.0" y="644.4" width="1.2" height="7.5" fill="#f0e68c"/>
<rect x="405.5" y="643.6" width="3.5" height="1.6" fill="#f0e68c"/>
<rect x="407.5" y="644.4" width="1.2" height="22.6" fill="#f0e68c"/>
<rect x="407.0" y="643.6" width="3.5" height="1.6" fill="#f0e68c"/>
<rect x="408.5" y="643.6" width="3.5" height="1.6" fill="#f0e68c"/>
<rect x="410.0" y="643.6" width="3.5" height="1.6" fill="#f0e68c"/>
<rect x="412.0" y="644.4" width="1.2" height="7.5" fill="#f0e68c"/>
<rect x="411.5" y="643.6" width="3.5" height="1.6" fill="#f0e68c"/>
<rect x="413.5" y="636.8" width="2.2" height="8.5" fill="#ff0000"/>
<rect x="414.5" y="636.0" width="3.5" height="1.6" fill="#f0e68c"/>
<rect x="416.5" y="629.3" width="1.2" height="15.0" fill="#f0e68c"/>
<rect x="416.0" y="636.0" width="3.5" height="1.6" fill="#f0e68c"/>
<rect x="417.5" y="636.0" width="3.5" height="1.6" fill="#f0e68c"/>
<rect x="419.0" y="636.0" width="3.5" height="1.6" fill="#f0e68c"/>
<rect x="420.5" y="636.0" width="3.5" height="1.6" fill="#f0e68c"/>
<rect x="422.0" y="636.0" width="3.5" height="1.6" fill="#f0e68c"/>
<rect x="424.0" y="636.8" width="2.2" height="8.5" fill="#1e90ff"/>
<rect x="425.0" y="643.6" width="3.5" height="1.6" fill="#f0e68c"/>
<rect x="426.5" y="643.6" width="3.5" height="1.6" fill="#f0e68c"/>
<rect x="428.0" y="643.6" width="3.5" height="1.6" fill="#f0e68c"/>
<rect x="430.0" y="644.4" width="2.2" height="8.5" fill="#1e90ff"/>
<rect x="431.5" y="644.4" width="2.2" height="8.5" fill="#ff0000"/>
<rect x="433.0" y="621.8" width="1.2" height="22.6" fill="#f0e68c"/>
<rect x="432.5" y="643.6" width="3.5" height="1.6" fill="#f0e68c"/>
<rect x="434.0" y="643.6" width="3.5" height="1.6" fill="#f0e68c"/>
<rect x="435.5" y="643.6" width="3.5" height="1.6" fill="#f0e68c"/>
<rect x="437.0" y="643.6" width="3.5" height="1.6" fill="#f0e68c"/>
<rect x="438.5" y="643.6" width="3.5" height="1.6" fill="#f0e68c"/>
<rect x="440.5" y="644.4" width="2.2" height="8.5" fill="#1e90ff"/>
<rect x="442.0" y="651.9" width="1.2" height="7.5" fill="#f0e68c"/>
<rect x="441.5" y="651.1" width="3.5" height="1.6" fill="#f0e68c"/>
<rect x="443.0" y="651.1" width="3.5" height="1.6" fill="#1e90ff"/>
<rect x="445.0" y="651.9" width="1.2" height="7.5" fill="#1e90ff"/>
<rect x="444.5" y="651.1" width="3.5" height="1.6" fill="#1e90ff"/>
<rect x="446.5" y="644.4" width="2.2" height="8.5" fill="#ff0000"/>
<rect x="449.5" y="621.8" width="2.2" height="31.1" fill="#ff0000"/>
<rect x="450.5" y="613.5" width="3.5" height="1.6" fill="#f0e68c"/>
<rect x="453.5" y="598.4" width="3.5" height="1.6" fill="#f0e68c"/>
<rect x="455.0" y="590.9" width="3.5" height="1.6" fill="#f0e68c"/>
<rect x="457.0" y="584.2" width="1.2" height="7.5" fill="#f0e68c"/>
<rect x="456.5" y="590.9" width="3.5" height="1.6" fill="#f0e68c"/>
<rect x="458.0" y="590.9" width="3.5" height="1.6" fill="#f0e68c"/>
<rect x="459.5" y="590.9" width="3.5" height="1.6" fill="#f0e68c"/>
<rect x="464.0" y="598.4" width="3.5" height="1.6" fill="#f0e68c"/>
<rect x="465.5" y="598.4" width="3.5" height="1.6" fill="#f0e68c"/>
<rect x="470.0" y="598.4" width="3.5" height="1.6" fill="#f0e68c"/>
<rect x="473.0" y="598.4" width="3.5" height="1.6" fill="#f0e68c"/>
<rect x="477.5" y="606.0" width="3.5" height="1.6" fill="#f0e68c"/>
<rect x="479.0" y="598.4" width="3.5" height="1.6" fill="#f0e68c"/>
<rect x="485.0" y="606.0" width="3.5" height="1.6" fill="#f0e68c"/>
<rect x="487.0" y="606.8" width="2.2" height="23.6" fill="#1e90ff"/>
<rect x="489.5" y="606.0" width="3.5" height="1.6" fill="#f0e68c"/>
<rect x="491.0" y="606.0" width="3.5" height="1.6" fill="#f0e68c"/>
<rect x="492.5" y="606.0" width="3.5" height="1.6" fill="#f0e68c"/>
<rect x="494.0" y="606.0" width="3.5" height="1.6" fill="#f0e68c"/>
<rect x="497.0" y="613.5" width="3.5" height="1.6" fill="#f0e68c"/>
<rect x="500.0" y="613.5" width="3.5" height="1.6" fill="#1e90ff"/>
<rect x="501.5" y="621.0" width="3.5" height="1.6" fill="#f0e68c"/>
<rect x="503.5" y="614.3" width="1.2" height="7.5" fill="#f0e68c"/>
<rect x="503.0" y="621.0" width="3.5" height="1.6" fill="#f0e68c"/>
<rect x="505.0" y="614.3" width="1.2" height="15.0" fill="#f0e68c"/>
<rect x="504.5" y="621.0" width="3.5" height="1.6" fill="#f0e68c"/>
<rect x="506.0" y="621.0" width="3.5" height="1.6" fill="#f0e68c"/>
<rect x="508.0" y="621.8" width="1.2" height="7.5" fill="#f0e68c"/>
<rect x="507.5" y="621.0" width="3.5" height="1.6" fill="#f0e68c"/>
<rect x="513.5" y="628.5" width="3.5" height="1.6" fill="#f0e68c"/>
<rect x="517.0" y="636.8" width="1.2" height="7.5" fill="#f0e68c"/>
<rect x="516.5" y="636.0" width="3.5" height="1.6" fill="#f0e68c"/>
<rect x="518.0" y="636.0" width="3.5" height="1.6" fill="#f0e68c"/>
<rect x="520.0" y="629.3" width="2.2" height="16.0" fill="#1e90ff"/>
<rect x="521.0" y="643.6" width="3.5" height="1.6" fill="#f0e68c"/>
<rect x="525.5" y="658.6" width="3.5" height="1.6" fill="#f0e68c"/>
<rect x="527.5" y="651.9" width="2.2" height="23.6" fill="#1e90ff"/>
<rect x="528.5" y="673.6" width="3.5" height="1.6" fill="#f0e68c"/>
<rect x="530.0" y="666.1" width="3.5" height="1.6" fill="#f0e68c"/>
<rect x="531.5" y="666.1" width="3.5" height="1.6" fill="#f0e68c"/>
<rect x="533.5" y="666.9" width="1.2" height="7.5" fill="#f0e68c"/>
<rect x="533.0" y="666.1" width="3.5" height="1.6" fill="#f0e68c"/>
<rect x="535.0" y="659.4" width="2.2" height="8.5" fill="#ff0000"/>
<rect x="537.5" y="651.1" width="3.5" height="1.6" fill="#f0e68c"/>
<rect x="539.0" y="651.1" width="3.5" height="1.6" fill="#f0e68c"/>
<rect x="540.5" y="651.1" width="3.5" height="1.6" fill="#f0e68c"/>
<rect x="543.5" y="651.1" width="3.5" height="1.6" fill="#f0e68c"/>
<rect x="547.0" y="644.4" width="1.2" height="7.5" fill="#f0e68c"/>
<rect x="546.5" y="651.1" width="3.5" height="1.6" fill="#f0e68c"/>
<rect x="554.0" y="651.1" width="3.5" height="1.6" fill="#f0e68c"/>
<rect x="555.5" y="643.6" width="3.5" height="1.6" fill="#f0e68c"/>
<rect x="560.5" y="636.8" width="2.2" height="8.5" fill="#1e90ff"/>
<rect x="561.5" y="643.6" width="3.5" height="1.6" fill="#f0e68c"/>
<rect x="563.0" y="636.0" width="3.5" height="1.6" fill="#f0e68c"/>
<rect x="566.5" y="636.8" width="1.2" height="7.5" fill="#f0e68c"/>
<rect x="566.0" y="636.0" width="3.5" height="1.6" fill="#f0e68c"/>
<rect x="569.5" y="629.3" width="1.2" height="7.5" fill="#f0e68c"/>
<rect x="569.0" y="636.0" width="3.5" height="1.6" fill="#f0e68c"/>
<rect x="572.0" y="636.0" width="3.5" height="1.6" fill="#f0e68c"/>
<rect x="575.0" y="628.5" width="3.5" height="1.6" fill="#f0e68c"/>
<rect x="576.5" y="628.5" width="3.5" height="1.6" fill="#f0e68c"/>
<rect x="578.0" y="621.0" width="3.5" height="1.6" fill="#f0e68c"/>
<rect x="580.0" y="621.8" width="1.2" height="7.5" fill="#f0e68c"/>
<rect x="579.5" y="621.0" width="3.5" height="1.6" fill="#f0e68c"/>
<rect x="582.5" y="621.0" width="3.5" height="1.6" fill="#f0e68c"/>
<rect x="584.0" y="613.5" width="3.5" height="1.6" fill="#f0e68c"/>
<rect x="585.5" y="613.5" width="3.5" height="1.6" fill="#f0e68c"/>
<rect x="590.0" y="606.0" width="3.5" height="1.6" fill="#f0e68c"/>
<rect x="592.0" y="599.2" width="2.2" height="16.0" fill="#1e90ff"/>
<rect x="594.5" y="606.0" width="3.5" height="1.6" fill="#f0e68c"/>
<rect x="596.0" y="598.4" width="3.5" height="1.6" fill="#f0e68c"/>
<rect x="599.0" y="598.4" width="3.5" height="1.6" fill="#f0e68c"/>
<rect x="601.0" y="584.2" width="2.2" height="31.1" fill="#ff0000"/>
<rect x="603.5" y="598.4" width="3.5" height="1.6" fill="#f0e68c"/>
<rect x="605.5" y="599.2" width="1.2" height="7.5" fill="#f0e68c"/>
<rect x="605.0" y="598.4" width="3.5" height="1.6" fill="#f0e68c"/>
<rect x="606.5" y="606.0" width="3.5" height="1.6" fill="#f0e68c"/>
<rect x="608.0" y="606.0" width="3.5" height="1.6" fill="#f0e68c"/>
<rect x="609.5" y="606.0" width="3.5" height="1.6" fill="#f0e68c"/>
<rect x="611.0" y="606.0" width="3.5" height="1.6" fill="#f0e68c"/>
<rect x="614.5" y="591.7" width="1.2" height="7.5" fill="#f0e68c"/>
<rect x="614.0" y="598.4" width="3.5" height="1.6" fill="#f0e68c"/>
<rect x="615.5" y="590.9" width="3.5" height="1.6" fill="#f0e68c"/>
<rect x="617.0" y="590.9" width="3.5" height="1.6" fill="#f0e68c"/>
<rect x="619.0" y="584.2" width="2.2" height="16.0" fill="#ff0000"/>
<rect x="621.5" y="575.9" width="3.5" height="1.6" fill="#f0e68c"/>
<rect x="625.0" y="569.2" width="2.2" height="16.0" fill="#1e90ff"/>
<rect x="626.5" y="584.2" width="1.2" height="7.5" fill="#f0e68c"/>
<rect x="626.0" y="583.4" width="3.5" height="1.6" fill="#f0e68c"/>
<rect x="627.5" y="583.4" width="3.5" height="1.6" fill="#f0e68c"/>
<rect x="629.5" y="584.2" width="1.2" height="7.5" fill="#f0e68c"/>
<rect x="629.0" y="583.4" width="3.5" height="1.6" fill="#f0e68c"/>
<rect x="630.5" y="583.4" width="3.5" height="1.6" fill="#f0e68c"/>
<rect x="632.0" y="583.4" width="3.5" height="1.6" fill="#f0e68c"/>
<rect x="635.5" y="584.2" width="1.2" height="7.5" fill="#f0e68c"/>
<rect x="635.0" y="583.4" width="3.5" height="1.6" fill="#f0e68c"/>
<rect x="636.5" y="583.4" width="3.5" height="1.6" fill="#f0e68c"/>
<rect x="638.5" y="584.2" width="1.2" height="7.5" fill="#f0e68c"/>
<rect x="638.0" y="583.4" width="3.5" height="1.6" fill="#f0e68c"/>
<rect x="641.5" y="584.2" width="1.2" height="7.5" fill="#f0e68c"/>
<rect x="641.0" y="583.4" width="3.5" height="1.6" fill="#f0e68c"/>
<rect x="643.0" y="576.7" width="1.2" height="7.5" fill="#f0e68c"/>
<rect x="642.5" y="583.4" width="3.5" height="1.6" fill="#f0e68c"/>
<rect x="646.0" y="569.2" width="1.2" height="15.0" fill="#f0e68c"/>
<rect x="645.5" y="575.9" width="3.5" height="1.6" fill="#f0e68c"/>
<rect x="647.0" y="575.9" width="3.5" height="1.6" fill="#f0e68c"/>
<rect x="648.5" y="575.9" width="3.5" height="1.6" fill="#f0e68c"/>
<rect x="650.5" y="569.2" width="1.2" height="7.5" fill="#f0e68c"/>
<rect x="650.0" y="575.9" width="3.5" height="1.6" fill="#f0e68c"/>
<rect x="653.0" y="575.9" width="3.5" height="1.6" fill="#f0e68c"/>
<rect x="654.5" y="568.4" width="3.5" height="1.6" fill="#f0e68c"/>
<rect x="656.5" y="569.2" width="1.2" height="22.6" fill="#f0e68c"/>
<rect x="656.0" y="568.4" width="3.5" height="1.6" fill="#f0e68c"/>
<rect x="657.5" y="568.4" width="3.5" height="1.6" fill="#f0e68c"/>
<rect x="659.0" y="575.9" width="3.5" height="1.6" fill="#f0e68c"/>
<rect x="661.0" y="569.2" width="2.2" height="8.5" fill="#ff0000"/>
<rect x="662.0" y="568.4" width="3.5" height="1.6" fill="#f0e68c"/>
<rect x="663.5" y="568.4" width="3.5" height="1.6" fill="#f0e68c"/>
<rect x="665.0" y="568.4" width="3.5" height="1.6" fill="#f0e68c"/>
<rect x="666.5" y="568.4" width="3.5" height="1.6" fill="#f0e68c"/>
<rect x="668.5" y="561.6" width="1.2" height="7.5" fill="#f0e68c"/>
<rect x="668.0" y="568.4" width="3.5" height="1.6" fill="#f0e68c"/>
<rect x="669.5" y="568.4" width="3.5" height="1.6" fill="#f0e68c"/>
<rect x="671.5" y="539.1" width="2.2" height="31.1" fill="#ff0000"/>
<rect x="673.0" y="561.6" width="1.2" height="30.1" fill="#f0e68c"/>
<rect x="672.5" y="560.8" width="3.5" height="1.6" fill="#f0e68c"/>
<rect x="674.0" y="560.8" width="3.5" height="1.6" fill="#f0e68c"/>
<rect x="676.0" y="561.6" width="1.2" height="7.5" fill="#f0e68c"/>
<rect x="675.5" y="560.8" width="3.5" height="1.6" fill="#f0e68c"/>
<rect x="678.5" y="568.4" width="3.5" height="1.6" fill="#f0e68c"/>
<rect x="681.5" y="568.4" width="3.5" height="1.6" fill="#f0e68c"/>
<rect x="683.0" y="568.4" width="3.5" height="1.6" fill="#f0e68c"/>
<rect x="684.5" y="568.4" width="3.5" height="1.6" fill="#f0e68c"/>
<rect x="686.5" y="561.6" width="1.2" height="7.5" fill="#f0e68c"/>
<rect x="686.0" y="568.4" width="3.5" height="1.6" fill="#f0e68c"/>
<rect x="687.5" y="568.4" width="3.5" height="1.6" fill="#f0e68c"/>
<rect x="689.5" y="569.2" width="2.2" height="38.6" fill="#ff0000"/>
<rect x="690.5" y="575.9" width="3.5" height="1.6" fill="#f0e68c"/>
<rect x="692.5" y="576.7" width="2.2" height="8.5" fill="#1e90ff"/>
<rect x="695.5" y="576.7" width="1.2" height="7.5" fill="#f0e68c"/>
<rect x="695.0" y="583.4" width="3.5" height="1.6" fill="#f0e68c"/>
<rect x="697.0" y="576.7" width="1.2" height="15.0" fill="#1e90ff"/>
<rect x="696.5" y="583.4" width="3.5" height="1.6" fill="#1e90ff"/>
<rect x="700.0" y="576.7" width="1.2" height="7.5" fill="#f0e68c"/>
<rect x="699.5" y="583.4" width="3.5" height="1.6" fill="#f0e68c"/>
<rect x="703.0" y="576.7" width="2.2" height="16.0" fill="#ff0000"/>
<rect x="707.5" y="561.6" width="2.2" height="23.6" fill="#ff0000"/>
<rect x="708.5" y="553.3" width="3.5" height="1.6" fill="#f0e68c"/>
<rect x="712.0" y="539.1" width="2.2" height="8.5" fill="#ff0000"/>
<rect x="713.0" y="530.8" width="3.5" height="1.6" fill="#f0e68c"/>
<rect x="714.5" y="523.2" width="3.5" height="1.6" fill="#f0e68c"/>
<rect x="716.5" y="524.0" width="1.2" height="7.5" fill="#f0e68c"/>
<rect x="716.0" y="523.2" width="3.5" height="1.6" fill="#f0e68c"/>
<rect x="717.5" y="515.7" width="3.5" height="1.6" fill="#f0e68c"/>
<rect x="719.0" y="515.7" width="3.5" height="1.6" fill="#f0e68c"/>
<rect x="722.5" y="509.0" width="2.2" height="16.0" fill="#1e90ff"/>
<rect x="723.5" y="523.2" width="3.5" height="1.6" fill="#f0e68c"/>
<rect x="728.0" y="530.8" width="3.5" height="1.6" fill="#f0e68c"/>
<rect x="729.5" y="530.8" width="3.5" height="1.6" fill="#f0e68c"/>
<rect x="731.0" y="538.3" width="3.5" height="1.6" fill="#f0e68c"/>
<rect x="733.0" y="539.1" width="1.2" height="7.5" fill="#f0e68c"/>
<rect x="732.5" y="538.3" width="3.5" height="1.6" fill="#f0e68c"/>
<rect x="734.0" y="538.3" width="3.5" height="1.6" fill="#f0e68c"/>
<rect x="736.0" y="516.5" width="1.2" height="30.1" fill="#f0e68c"/>
<rect x="735.5" y="538.3" width="3.5" height="1.6" fill="#f0e68c"/>
<rect x="737.5" y="531.6" width="1.2" height="15.0" fill="#f0e68c"/>
<rect x="737.0" y="538.3" width="3.5" height="1.6" fill="#f0e68c"/>
<rect x="739.0" y="531.6" width="2.2" height="8.5" fill="#ff0000"/>
<rect x="740.5" y="524.0" width="1.2" height="7.5" fill="#f0e68c"/>
<rect x="740.0" y="530.8" width="3.5" height="1.6" fill="#f0e68c"/>
<rect x="742.0" y="524.0" width="1.2" height="7.5" fill="#f0e68c"/>
<rect x="741.5" y="530.8" width="3.5" height="1.6" fill="#f0e68c"/>
<rect x="743.5" y="524.0" width="2.2" height="8.5" fill="#ff0000"/>
<rect x="746.5" y="509.0" width="1.2" height="7.5" fill="#f0e68c"/>
<rect x="746.0" y="515.7" width="3.5" height="1.6" fill="#f0e68c"/>
<rect x="748.0" y="509.0" width="2.2" height="8.5" fill="#1e90ff"/>
<rect x="749.5" y="494.0" width="2.2" height="16.0" fill="#ff0000"/>
<rect x="751.0" y="478.9" width="2.2" height="16.0" fill="#ff0000"/>
<rect x="752.0" y="470.6" width="3.5" height="1.6" fill="#f0e68c"/>
<rect x="754.0" y="448.8" width="2.2" height="23.6" fill="#ff0000"/>
<rect x="755.0" y="433.0" width="3.5" height="1.6" fill="#f0e68c"/>
<rect x="757.0" y="426.3" width="1.2" height="15.0" fill="#f0e68c"/>
<rect x="756.5" y="433.0" width="3.5" height="1.6" fill="#f0e68c"/>
<rect x="758.0" y="440.5" width="3.5" height="1.6" fill="#f0e68c"/>
<rect x="761.0" y="448.0" width="3.5" height="1.6" fill="#f0e68c"/>
<rect x="763.0" y="448.8" width="2.2" height="8.5" fill="#ff0000"/>
<rect x="764.0" y="448.0" width="3.5" height="1.6" fill="#f0e68c"/>
<rect x="765.5" y="440.5" width="3.5" height="1.6" fill="#f0e68c"/>
<rect x="767.0" y="440.5" width="3.5" height="1.6" fill="#f0e68c"/>
<rect x="768.5" y="455.6" width="3.5" height="1.6" fill="#f0e68c"/>
<rect x="770.0" y="478.1" width="3.5" height="1.6" fill="#f0e68c"/>
<rect x="772.0" y="478.9" width="2.2" height="23.6" fill="#1e90ff"/>
<rect x="773.0" y="515.7" width="3.5" height="1.6" fill="#f0e68c"/>
<rect x="774.5" y="545.8" width="3.5" height="1.6" fill="#f0e68c"/>
<rect x="776.0" y="560.8" width="3.5" height="1.6" fill="#f0e68c"/>
<rect x="778.0" y="554.1" width="2.2" height="8.5" fill="#ff0000"/>
<rect x="779.0" y="560.8" width="3.5" height="1.6" fill="#f0e68c"/>
<rect x="782.0" y="560.8" width="3.5" height="1.6" fill="#ff0000"/>
<rect x="783.5" y="560.8" width="3.5" height="1.6" fill="#f0e68c"/>
<rect x="785.0" y="560.8" width="3.5" height="1.6" fill="#f0e68c"/>
<rect x="787.0" y="561.6" width="2.2" height="8.5" fill="#f0e68c"/>
<rect x="790.0" y="569.2" width="2.2" height="8.5" fill="#1e90ff"/>
<rect x="791.5" y="569.2" width="2.2" height="23.6" fill="#1e90ff"/>
<rect x="793.0" y="584.2" width="2.2" height="8.5" fill="#1e90ff"/>
<rect x="794.5" y="584.2" width="2.2" height="31.1" fill="#1e90ff"/>
<rect x="796.0" y="599.2" width="2.2" height="8.5" fill="#ff0000"/>
<rect x="799.0" y="591.7" width="2.2" height="8.5" fill="#ff0000"/>
<rect x="800.5" y="584.2" width="2.2" height="16.0" fill="#ff0000"/>
<rect x="802.0" y="569.2" width="2.2" height="16.0" fill="#ff0000"/>
<rect x="805.0" y="539.1" width="2.2" height="38.6" fill="#f0e68c"/>
<rect x="806.0" y="568.4" width="3.5" height="1.6" fill="#f0e68c"/>
<rect x="812.5" y="561.6" width="2.2" height="8.5" fill="#1e90ff"/>
<rect x="813.5" y="568.4" width="3.5" height="1.6" fill="#f0e68c"/>
<rect x="815.0" y="568.4" width="3.5" height="1.6" fill="#f0e68c"/>
<rect x="817.0" y="561.6" width="1.2" height="7.5" fill="#f0e68c"/>
<rect x="816.5" y="568.4" width="3.5" height="1.6" fill="#f0e68c"/>
<rect x="818.0" y="568.4" width="3.5" height="1.6" fill="#f0e68c"/>
<rect x="820.0" y="554.1" width="1.2" height="15.0" fill="#f0e68c"/>
<rect x="819.5" y="568.4" width="3.5" height="1.6" fill="#f0e68c"/>
<rect x="821.5" y="569.2" width="2.2" height="16.0" fill="#1e90ff"/>
<rect x="822.5" y="583.4" width="3.5" height="1.6" fill="#f0e68c"/>
<rect x="824.0" y="583.4" width="3.5" height="1.6" fill="#f0e68c"/>
<rect x="826.0" y="584.2" width="1.2" height="7.5" fill="#f0e68c"/>
<rect x="825.5" y="583.4" width="3.5" height="1.6" fill="#f0e68c"/>
<rect x="827.5" y="584.2" width="2.2" height="16.0" fill="#1e90ff"/>
<rect x="829.0" y="584.2" width="2.2" height="16.0" fill="#ff0000"/>
<rect x="830.0" y="583.4" width="3.5" height="1.6" fill="#f0e68c"/>
<rect x="832.0" y="576.7" width="2.2" height="23.6" fill="#1e90ff"/>
<rect x="833.5" y="591.7" width="2.2" height="23.6" fill="#f0e68c"/>
<rect x="835.0" y="614.3" width="2.2" height="8.5" fill="#1e90ff"/>
<rect x="836.5" y="599.2" width="2.2" height="23.6" fill="#ff0000"/>
<rect x="838.0" y="591.7" width="2.2" height="31.1" fill="#ff0000"/>
<rect x="839.5" y="576.7" width="2.2" height="23.6" fill="#ff0000"/>
<rect x="841.0" y="569.2" width="2.2" height="8.5" fill="#ff0000"/>
<rect x="842.5" y="561.6" width="2.2" height="8.5" fill="#ff0000"/>
<rect x="844.0" y="554.1" width="1.2" height="7.5" fill="#ff0000"/>
<rect x="843.5" y="560.8" width="3.5" height="1.6" fill="#ff0000"/>
<rect x="845.5" y="554.1" width="1.2" height="7.5" fill="#f0e68c"/>
<rect x="845.0" y="560.8" width="3.5" height="1.6" fill="#f0e68c"/>
<rect x="847.0" y="554.1" width="1.2" height="7.5" fill="#f0e68c"/>
<rect x="846.5" y="560.8" width="3.5" height="1.6" fill="#f0e68c"/>
<rect x="848.5" y="554.1" width="1.2" height="7.5" fill="#f0e68c"/>
<rect x="848.0" y="560.8" width="3.5" height="1.6" fill="#f0e68c"/>
<rect x="850.0" y="561.6" width="2.2" height="8.5" fill="#1e90ff"/>
<rect x="851.5" y="569.2" width="2.2" height="8.5" fill="#1e90ff"/>
<rect x="852.5" y="575.9" width="3.5" height="1.6" fill="#f0e68c"/>
<rect x="856.0" y="576.7" width="1.2" height="7.5" fill="#f0e68c"/>
<rect x="855.5" y="575.9" width="3.5" height="1.6" fill="#f0e68c"/>
<rect x="860.5" y="554.1" width="2.2" height="16.0" fill="#ff0000"/>
<rect x="862.0" y="539.1" width="2.2" height="23.6" fill="#ff0000"/>
<rect x="863.5" y="539.1" width="2.2" height="8.5" fill="#ff0000"/>
<rect x="865.0" y="539.1" width="1.2" height="7.5" fill="#f0e68c"/>
<rect x="864.5" y="538.3" width="3.5" height="1.6" fill="#f0e68c"/>
<rect x="866.5" y="531.6" width="2.2" height="16.0" fill="#ff0000"/>
<rect x="867.5" y="530.8" width="3.5" height="1.6" fill="#f0e68c"/>
<rect x="871.0" y="516.5" width="2.2" height="16.0" fill="#ff0000"/>
<rect x="872.0" y="515.7" width="3.5" height="1.6" fill="#f0e68c"/>
<rect x="874.0" y="509.0" width="1.2" height="7.5" fill="#f0e68c"/>
<rect x="873.5" y="515.7" width="3.5" height="1.6" fill="#f0e68c"/>
<rect x="875.5" y="516.5" width="2.2" height="8.5" fill="#1e90ff"/>
<rect x="877.0" y="524.0" width="2.2" height="16.0" fill="#1e90ff"/>
<rect x="878.0" y="538.3" width="3.5" height="1.6" fill="#f0e68c"/>
<rect x="880.0" y="531.6" width="1.2" height="7.5" fill="#f0e68c"/>
<rect x="879.5" y="538.3" width="3.5" height="1.6" fill="#f0e68c"/>
<rect x="882.5" y="538.3" width="3.5" height="1.6" fill="#f0e68c"/>
<rect x="884.5" y="539.1" width="1.2" height="30.1" fill="#f0e68c"/>
<rect x="884.0" y="538.3" width="3.5" height="1.6" fill="#f0e68c"/>
<rect x="887.5" y="539.1" width="1.2" height="7.5" fill="#f0e68c"/>
<rect x="887.0" y="538.3" width="3.5" height="1.6" fill="#f0e68c"/>
<rect x="889.0" y="531.6" width="1.2" height="7.5" fill="#f0e68c"/>
<rect x="888.5" y="538.3" width="3.5" height="1.6" fill="#f0e68c"/>
<rect x="890.5" y="524.0" width="2.2" height="23.6" fill="#1e90ff"/>
<rect x="892.0" y="546.6" width="1.2" height="15.0" fill="#f0e68c"/>
<rect x="891.5" y="545.8" width="3.5" height="1.6" fill="#f0e68c"/>
<rect x="893.5" y="546.6" width="1.2" height="7.5" fill="#f0e68c"/>
<rect x="893.0" y="545.8" width="3.5" height="1.6" fill="#f0e68c"/>
<rect x="895.0" y="546.6" width="1.2" height="7.5" fill="#f0e68c"/>
<rect x="894.5" y="545.8" width="3.5" height="1.6" fill="#f0e68c"/>
<rect x="896.5" y="546.6" width="2.2" height="8.5" fill="#f0e68c"/>
<rect x="898.0" y="546.6" width="2.2" height="8.5" fill="#ff0000"/>
<rect x="899.0" y="545.8" width="3.5" height="1.6" fill="#f0e68c"/>
<rect x="901.0" y="546.6" width="2.2" height="8.5" fill="#1e90ff"/>
<rect x="902.5" y="554.1" width="2.2" height="8.5" fill="#1e90ff"/>
<rect x="904.0" y="554.1" width="1.2" height="7.5" fill="#f0e68c"/>
<rect x="903.5" y="560.8" width="3.5" height="1.6" fill="#f0e68c"/>
<rect x="907.0" y="569.2" width="2.2" height="8.5" fill="#1e90ff"/>
<rect x="908.5" y="576.7" width="1.2" height="22.6" fill="#f0e68c"/>
<rect x="908.0" y="575.9" width="3.5" height="1.6" fill="#f0e68c"/>
<rect x="910.0" y="576.7" width="2.2" height="16.0" fill="#1e90ff"/>
<rect x="911.5" y="576.7" width="2.2" height="16.0" fill="#1e90ff"/>
<rect x="912.5" y="590.9" width="3.5" height="1.6" fill="#f0e68c"/>
<rect x="914.5" y="591.7" width="2.2" height="16.0" fill="#1e90ff"/>
<rect x="916.0" y="599.2" width="2.2" height="16.0" fill="#1e90ff"/>
<rect x="917.5" y="606.8" width="2.2" height="8.5" fill="#1e90ff"/>
<rect x="919.0" y="614.3" width="1.2" height="7.5" fill="#f0e68c"/>
<rect x="918.5" y="613.5" width="3.5" height="1.6" fill="#f0e68c"/>
<rect x="921.5" y="613.5" width="3.5" height="1.6" fill="#f0e68c"/>
<rect x="929.0" y="613.5" width="3.5" height="1.6" fill="#f0e68c"/>
<rect x="932.5" y="606.8" width="1.2" height="30.1" fill="#f0e68c"/>
<rect x="932.0" y="613.5" width="3.5" height="1.6" fill="#f0e68c"/>
<rect x="934.0" y="614.3" width="2.2" height="8.5" fill="#1e90ff"/>
<rect x="939.5" y="628.5" width="3.5" height="1.6" fill="#f0e68c"/>
<rect x="946.0" y="621.8" width="1.2" height="7.5" fill="#f0e68c"/>
<rect x="945.5" y="628.5" width="3.5" height="1.6" fill="#f0e68c"/>
<rect x="950.0" y="636.0" width="3.5" height="1.6" fill="#f0e68c"/>
<rect x="953.0" y="636.0" width="3.5" height="1.6" fill="#f0e68c"/>
<rect x="955.0" y="629.3" width="2.2" height="8.5" fill="#ff0000"/>
<rect x="957.5" y="613.5" width="3.5" height="1.6" fill="#f0e68c"/>
<rect x="959.5" y="591.7" width="2.2" height="23.6" fill="#ff0000"/>
<rect x="962.5" y="584.2" width="1.2" height="15.0" fill="#f0e68c"/>
<rect x="962.0" y="598.4" width="3.5" height="1.6" fill="#f0e68c"/>
<rect x="964.0" y="599.2" width="2.2" height="8.5" fill="#1e90ff"/>
<rect x="965.0" y="613.5" width="3.5" height="1.6" fill="#f0e68c"/>
<rect x="968.5" y="621.8" width="2.2" height="8.5" fill="#1e90ff"/>
<rect x="969.5" y="628.5" width="3.5" height="1.6" fill="#f0e68c"/>
<rect x="973.0" y="621.8" width="1.2" height="7.5" fill="#f0e68c"/>
<rect x="972.5" y="628.5" width="3.5" height="1.6" fill="#f0e68c"/>
<rect x="974.0" y="628.5" width="3.5" height="1.6" fill="#f0e68c"/>
<rect x="975.5" y="628.5" width="3.5" height="1.6" fill="#f0e68c"/>
<rect x="977.0" y="621.0" width="3.5" height="1.6" fill="#f0e68c"/>
<rect x="980.0" y="621.0" width="3.5" height="1.6" fill="#f0e68c"/>
<rect x="981.5" y="621.0" width="3.5" height="1.6" fill="#ff0000"/>
<rect x="986.0" y="628.5" width="3.5" height="1.6" fill="#f0e68c"/>
<rect x="993.5" y="636.0" width="3.5" height="1.6" fill="#f0e68c"/>
<rect x="997.0" y="629.3" width="1.2" height="7.5" fill="#f0e68c"/>
<rect x="996.5" y="628.5" width="3.5" height="1.6" fill="#f0e68c"/>
<rect x="999.5" y="628.5" width="3.5" height="1.6" fill="#f0e68c"/>
<rect x="1004.0" y="628.5" width="3.5" height="1.6" fill="#1e90ff"/>
<rect x="1005.5" y="621.0" width="3.5" height="1.6" fill="#f0e68c"/>
<rect x="1008.5" y="621.0" width="3.5" height="1.6" fill="#f0e68c"/>
<rect x="1013.5" y="614.3" width="1.2" height="7.5" fill="#ff0000"/>
<rect x="1013.0" y="613.5" width="3.5" height="1.6" fill="#ff0000"/>
<rect x="1014.5" y="613.5" width="3.5" height="1.6" fill="#f0e68c"/>
<rect x="1016.0" y="613.5" width="3.5" height="1.6" fill="#f0e68c"/>
<rect x="1017.5" y="613.5" width="3.5" height="1.6" fill="#f0e68c"/>
<rect x="1023.5" y="606.0" width="3.5" height="1.6" fill="#f0e68c"/>
<rect x="1028.5" y="599.2" width="1.2" height="7.5" fill="#f0e68c"/>
<rect x="1028.0" y="606.0" width="3.5" height="1.6" fill="#f0e68c"/>
<rect x="1029.5" y="613.5" width="3.5" height="1.6" fill="#f0e68c"/>
<rect x="1033.0" y="621.8" width="1.2" height="7.5" fill="#f0e68c"/>
<rect x="1032.5" y="621.0" width="3.5" height="1.6" fill="#f0e68c"/>
<rect x="1034.0" y="628.5" width="3.5" height="1.6" fill="#f0e68c"/>
<rect x="1038.5" y="636.0" width="3.5" height="1.6" fill="#ff0000"/>
<rect x="1041.5" y="643.6" width="3.5" height="1.6" fill="#f0e68c"/>
<rect x="1043.0" y="651.1" width="3.5" height="1.6" fill="#f0e68c"/>
<rect x="1049.0" y="658.6" width="3.5" height="1.6" fill="#f0e68c"/>
<rect x="1050.5" y="651.1" width="3.5" height="1.6" fill="#f0e68c"/>
<rect x="1056.5" y="636.0" width="3.5" height="1.6" fill="#f0e68c"/>
<rect x="1058.5" y="629.3" width="2.2" height="8.5" fill="#ff0000"/>
<rect x="1061.5" y="606.8" width="1.2" height="30.1" fill="#f0e68c"/>
<rect x="1061.0" y="628.5" width="3.5" height="1.6" fill="#f0e68c"/>
<rect x="1062.5" y="613.5" width="3.5" height="1.6" fill="#f0e68c"/>
<rect x="1065.5" y="598.4" width="3.5" height="1.6" fill="#f0e68c"/>
<rect x="1067.5" y="591.7" width="1.2" height="7.5" fill="#f0e68c"/>
<rect x="1067.0" y="598.4" width="3.5" height="1.6" fill="#f0e68c"/>
<rect x="1069.0" y="599.2" width="2.2" height="16.0" fill="#1e90ff"/>
<rect x="1074.5" y="636.0" width="3.5" height="1.6" fill="#f0e68c"/>
<rect x="1076.5" y="629.3" width="2.2" height="8.5" fill="#ff0000"/>
<rect x="1082.0" y="621.0" width="3.5" height="1.6" fill="#f0e68c"/>
<rect x="1084.0" y="621.8" width="1.2" height="7.5" fill="#f0e68c"/>
<rect x="1083.5" y="621.0" width="3.5" height="1.6" fill="#f0e68c"/>
<rect x="1085.5" y="606.8" width="2.2" height="31.1" fill="#ff0000"/>
<rect x="1086.5" y="613.5" width="3.5" height="1.6" fill="#f0e68c"/>
<rect x="1090.0" y="606.8" width="1.2" height="30.1" fill="#ff0000"/>
<rect x="1089.5" y="606.0" width="3.5" height="1.6" fill="#ff0000"/>
<rect x="1092.5" y="590.9" width="3.5" height="1.6" fill="#f0e68c"/>
<rect x="1096.0" y="584.2" width="1.2" height="15.0" fill="#f0e68c"/>
<rect x="1095.5" y="590.9" width="3.5" height="1.6" fill="#f0e68c"/>
<rect x="1105.0" y="606.8" width="2.2" height="16.0" fill="#1e90ff"/>
<rect x="1106.0" y="628.5" width="3.5" height="1.6" fill="#f0e68c"/>
<rect x="1107.5" y="628.5" width="3.5" height="1.6" fill="#f0e68c"/>
<rect x="1117.0" y="636.8" width="1.2" height="7.5" fill="#f0e68c"/>
<rect x="1116.5" y="636.0" width="3.5" height="1.6" fill="#f0e68c"/>
<rect x="1124.0" y="666.1" width="3.5" height="1.6" fill="#f0e68c"/>
<rect x="1125.5" y="628.5" width="3.5" height="1.6" fill="#f0e68c"/>
<rect x="1127.0" y="606.0" width="3.5" height="1.6" fill="#f0e68c"/>
<rect x="1128.5" y="613.5" width="3.5" height="1.6" fill="#f0e68c"/>
<rect x="1130.5" y="591.7" width="1.2" height="22.6" fill="#f0e68c"/>
<rect x="1130.0" y="613.5" width="3.5" height="1.6" fill="#f0e68c"/>
<rect x="1135.0" y="614.3" width="2.2" height="8.5" fill="#1e90ff"/>
<rect x="1142.5" y="621.8" width="1.2" height="7.5" fill="#f0e68c"/>
<rect x="1142.0" y="628.5" width="3.5" height="1.6" fill="#f0e68c"/>
<rect x="1148.5" y="614.3" width="2.2" height="23.6" fill="#1e90ff"/>
<rect x="1150.0" y="621.8" width="1.2" height="15.0" fill="#1e90ff"/>
<rect x="1149.5" y="628.5" width="3.5" height="1.6" fill="#1e90ff"/>
<rect x="1152.5" y="621.0" width="3.5" height="1.6" fill="#f0e68c"/>
<rect x="1156.0" y="629.3" width="1.2" height="7.5" fill="#f0e68c"/>
<rect x="1155.5" y="628.5" width="3.5" height="1.6" fill="#f0e68c"/>
<rect x="1157.5" y="621.8" width="1.2" height="7.5" fill="#f0e68c"/>
<rect x="1157.0" y="628.5" width="3.5" height="1.6" fill="#f0e68c"/>
<rect x="1160.0" y="628.5" width="3.5" height="1.6" fill="#f0e68c"/>
<rect x="1166.0" y="613.5" width="3.5" height="1.6" fill="#f0e68c"/>
<rect x="1169.5" y="606.8" width="1.2" height="7.5" fill="#f0e68c"/>
<rect x="1169.0" y="613.5" width="3.5" height="1.6" fill="#f0e68c"/>
<rect x="1172.0" y="613.5" width="3.5" height="1.6" fill="#f0e68c"/>
<rect x="1173.5" y="613.5" width="3.5" height="1.6" fill="#f0e68c"/>
<rect x="1175.0" y="621.0" width="3.5" height="1.6" fill="#f0e68c"/>
<rect x="1183.0" y="636.8" width="2.2" height="8.5" fill="#1e90ff"/>
<rect x="1184.0" y="643.6" width="3.5" height="1.6" fill="#f0e68c"/>
<rect x="1190.0" y="666.1" width="3.5" height="1.6" fill="#f0e68c"/>
<rect x="1191.5" y="666.1" width="3.5" height="1.6" fill="#f0e68c"/>
<rect x="1193.0" y="673.6" width="3.5" height="1.6" fill="#f0e68c"/>
<rect x="1195.0" y="674.4" width="2.2" height="8.5" fill="#1e90ff"/>
<rect x="1196.5" y="651.9" width="2.2" height="31.1" fill="#1e90ff"/>
<rect x="1197.5" y="643.6" width="3.5" height="1.6" fill="#f0e68c"/>
<rect x="1199.5" y="629.3" width="2.2" height="16.0" fill="#ff0000"/>
<rect x="1200.5" y="628.5" width="3.5" height="1.6" fill="#f0e68c"/>
<rect x="1202.5" y="614.3" width="2.2" height="16.0" fill="#ff0000"/>
<rect x="1203.5" y="613.5" width="3.5" height="1.6" fill="#f0e68c"/>
<rect x="1205.5" y="591.7" width="1.2" height="22.6" fill="#f0e68c"/>
<rect x="1205.0" y="613.5" width="3.5" height="1.6" fill="#f0e68c"/>
<rect x="1206.5" y="613.5" width="3.5" height="1.6" fill="#f0e68c"/>
<rect x="1210.0" y="606.8" width="1.2" height="7.5" fill="#f0e68c"/>
<rect x="1209.5" y="613.5" width="3.5" height="1.6" fill="#f0e68c"/>
<rect x="1211.5" y="614.3" width="2.2" height="8.5" fill="#1e90ff"/>
<rect x="1212.5" y="613.5" width="3.5" height="1.6" fill="#f0e68c"/>
<rect x="1217.0" y="621.0" width="3.5" height="1.6" fill="#1e90ff"/>
<rect x="1218.5" y="628.5" width="3.5" height="1.6" fill="#f0e68c"/>
<rect x="1220.0" y="643.6" width="3.5" height="1.6" fill="#f0e68c"/>
<rect x="1221.5" y="651.1" width="3.5" height="1.6" fill="#f0e68c"/>
<rect x="1226.5" y="629.3" width="2.2" height="16.0" fill="#ff0000"/>
<rect x="1227.5" y="621.0" width="3.5" height="1.6" fill="#f0e68c"/>
<rect x="1229.5" y="614.3" width="2.2" height="8.5" fill="#ff0000"/>
<rect x="1232.0" y="606.0" width="3.5" height="1.6" fill="#f0e68c"/>
<rect x="1234.0" y="584.2" width="2.2" height="23.6" fill="#1e90ff"/>
<rect x="1235.5" y="554.1" width="2.2" height="38.6" fill="#ff0000"/>
<rect x="1236.5" y="575.9" width="3.5" height="1.6" fill="#f0e68c"/>
<rect x="1238.0" y="590.9" width="3.5" height="1.6" fill="#f0e68c"/>
<rect x="1240.0" y="591.7" width="2.2" height="23.6" fill="#1e90ff"/>
<rect x="1241.0" y="628.5" width="3.5" height="1.6" fill="#f0e68c"/>
<rect x="1243.0" y="606.8" width="2.2" height="23.6" fill="#ff0000"/>
<rect x="1244.5" y="606.8" width="2.2" height="16.0" fill="#ff0000"/>
<rect x="1245.5" y="590.9" width="3.5" height="1.6" fill="#f0e68c"/>
<rect x="1247.0" y="575.9" width="3.5" height="1.6" fill="#f0e68c"/>
<rect x="1249.0" y="561.6" width="1.2" height="22.6" fill="#f0e68c"/>
<rect x="1248.5" y="575.9" width="3.5" height="1.6" fill="#f0e68c"/>
<rect x="1252.0" y="569.2" width="2.2" height="8.5" fill="#ff0000"/>
<rect x="1253.0" y="568.4" width="3.5" height="1.6" fill="#f0e68c"/>
<rect x="1256.5" y="561.6" width="2.2" height="16.0" fill="#1e90ff"/>
<rect x="1259.0" y="598.4" width="3.5" height="1.6" fill="#f0e68c"/>
<rect x="1261.0" y="599.2" width="2.2" height="8.5" fill="#1e90ff"/>
<rect x="1262.5" y="599.2" width="2.2" height="8.5" fill="#f0e68c"/>
<rect x="1264.0" y="584.2" width="2.2" height="16.0" fill="#ff0000"/>
<rect x="1265.0" y="583.4" width="3.5" height="1.6" fill="#f0e68c"/>
<rect x="1267.0" y="569.2" width="1.2" height="22.6" fill="#f0e68c"/>
<rect x="1266.5" y="583.4" width="3.5" height="1.6" fill="#f0e68c"/>
<rect x="1273.0" y="591.7" width="2.2" height="16.0" fill="#1e90ff"/>
<rect x="1277.0" y="621.0" width="3.5" height="1.6" fill="#f0e68c"/>
<rect x="1278.5" y="621.0" width="3.5" height="1.6" fill="#f0e68c"/>
<rect x="1280.0" y="621.0" width="3.5" height="1.6" fill="#f0e68c"/>
<rect x="1284.5" y="628.5" width="3.5" height="1.6" fill="#ff0000"/>
<rect x="1286.5" y="599.2" width="1.2" height="30.1" fill="#f0e68c"/>
<rect x="1286.0" y="628.5" width="3.5" height="1.6" fill="#f0e68c"/>
<rect x="1289.5" y="629.3" width="1.2" height="7.5" fill="#f0e68c"/>
<rect x="1289.0" y="628.5" width="3.5" height="1.6" fill="#f0e68c"/>
<rect x="1292.0" y="613.5" width="3.5" height="1.6" fill="#f0e68c"/>
<rect x="1295.0" y="606.0" width="3.5" height="1.6" fill="#f0e68c"/>
<rect x="1298.5" y="599.2" width="1.2" height="7.5" fill="#ff0000"/>
<rect x="1298.0" y="606.0" width="3.5" height="1.6" fill="#ff0000"/>
<rect x="1303.0" y="606.8" width="1.2" height="7.5" fill="#f0e68c"/>
<rect x="1302.5" y="606.0" width="3.5" height="1.6" fill="#f0e68c"/>
<rect x="1304.0" y="606.0" width="3.5" height="1.6" fill="#ff0000"/>
<rect x="1306.0" y="606.8" width="1.2" height="7.5" fill="#f0e68c"/>
<rect x="1305.5" y="606.0" width="3.5" height="1.6" fill="#f0e68c"/>
<rect x="1307.5" y="606.8" width="1.2" height="7.5" fill="#f0e68c"/>
<rect x="1307.0" y="606.0" width="3.5" height="1.6" fill="#f0e68c"/>
<rect x="1308.5" y="606.0" width="3.5" height="1.6" fill="#f0e68c"/>
<rect x="1310.0" y="598.4" width="3.5" height="1.6" fill="#f0e68c"/>
<rect x="1313.0" y="590.9" width="3.5" height="1.6" fill="#f0e68c"/>
<rect x="1316.5" y="584.2" width="2.2" height="16.0" fill="#ff0000"/>
<rect x="1317.5" y="583.4" width="3.5" height="1.6" fill="#f0e68c"/>
<rect x="1319.5" y="576.7" width="2.2" height="8.5" fill="#ff0000"/>
<rect x="1321.0" y="569.2" width="2.2" height="16.0" fill="#1e90ff"/>
<rect x="1322.0" y="575.9" width="3.5" height="1.6" fill="#f0e68c"/>
<rect x="1323.5" y="575.9" width="3.5" height="1.6" fill="#f0e68c"/>
<rect x="1325.5" y="569.2" width="2.2" height="8.5" fill="#ff0000"/>
<rect x="1327.0" y="561.6" width="2.2" height="8.5" fill="#ff0000"/>
<rect x="1328.0" y="553.3" width="3.5" height="1.6" fill="#f0e68c"/>
<rect x="1329.5" y="560.8" width="3.5" height="1.6" fill="#f0e68c"/>
<rect x="1332.5" y="583.4" width="3.5" height="1.6" fill="#f0e68c"/>
<rect x="1334.0" y="598.4" width="3.5" height="1.6" fill="#f0e68c"/>
<rect x="1335.5" y="606.0" width="3.5" height="1.6" fill="#f0e68c"/>
<rect x="1337.5" y="606.8" width="2.2" height="8.5" fill="#1e90ff"/>
<rect x="1339.0" y="606.8" width="2.2" height="16.0" fill="#f0e68c"/>
<rect x="1342.0" y="621.8" width="1.2" height="7.5" fill="#f0e68c"/>
<rect x="1341.5" y="628.5" width="3.5" height="1.6" fill="#f0e68c"/>
<rect x="1343.5" y="629.3" width="2.2" height="8.5" fill="#1e90ff"/>
<rect x="1345.0" y="636.8" width="2.2" height="8.5" fill="#1e90ff"/>
<rect x="1346.5" y="644.4" width="2.2" height="8.5" fill="#1e90ff"/>
<rect x="1348.0" y="636.8" width="2.2" height="16.0" fill="#ff0000"/>
<rect x="1349.5" y="621.8" width="2.2" height="16.0" fill="#ff0000"/>
<rect x="1351.0" y="614.3" width="2.2" height="8.5" fill="#ff0000"/>
<rect x="1352.0" y="598.4" width="3.5" height="1.6" fill="#f0e68c"/>
<rect x="1353.5" y="583.4" width="3.5" height="1.6" fill="#f0e68c"/>
<rect x="1355.5" y="584.2" width="1.2" height="7.5" fill="#f0e68c"/>
<rect x="1355.0" y="583.4" width="3.5" height="1.6" fill="#f0e68c"/>
<rect x="1358.0" y="575.9" width="3.5" height="1.6" fill="#f0e68c"/>
<rect x="1362.5" y="575.9" width="3.5" height="1.6" fill="#f0e68c"/>
<rect x="1364.5" y="569.2" width="1.2" height="7.5" fill="#f0e68c"/>
<rect x="1364.0" y="575.9" width="3.5" height="1.6" fill="#f0e68c"/>
<rect x="1367.5" y="576.7" width="1.2" height="7.5" fill="#f0e68c"/>
<rect x="1367.0" y="575.9" width="3.5" height="1.6" fill="#f0e68c"/>
<rect x="1368.5" y="575.9" width="3.5" height="1.6" fill="#f0e68c"/>
<rect x="1371.5" y="575.9" width="3.5" height="1.6" fill="#f0e68c"/>
<rect x="1373.5" y="576.7" width="1.2" height="7.5" fill="#f0e68c"/>
<rect x="1373.0" y="575.9" width="3.5" height="1.6" fill="#f0e68c"/>
<rect x="1374.5" y="568.4" width="3.5" height="1.6" fill="#f0e68c"/>
<rect x="1377.5" y="560.8" width="3.5" height="1.6" fill="#f0e68c"/>
<rect x="1381.0" y="546.6" width="2.2" height="16.0" fill="#ff0000"/>
<rect x="1382.5" y="531.6" width="2.2" height="16.0" fill="#f0e68c"/>
<rect x="1384.0" y="516.5" width="2.2" height="16.0" fill="#ff0000"/>
<rect x="1385.5" y="501.5" width="2.2" height="23.6" fill="#ff0000"/>
<rect x="1387.0" y="478.9" width="2.2" height="23.6" fill="#ff0000"/>
<rect x="1388.5" y="471.4" width="2.2" height="16.0" fill="#ff0000"/>
<rect x="1390.0" y="456.4" width="2.2" height="31.1" fill="#1e90ff"/>
<rect x="1391.5" y="478.9" width="2.2" height="8.5" fill="#1e90ff"/>
<rect x="1393.0" y="486.4" width="2.2" height="8.5" fill="#1e90ff"/>
<rect x="1394.5" y="494.0" width="2.2" height="16.0" fill="#1e90ff"/>
<rect x="1396.0" y="509.0" width="2.2" height="8.5" fill="#1e90ff"/>
<rect x="1397.5" y="494.0" width="2.2" height="38.6" fill="#1e90ff"/>
<rect x="1399.0" y="524.0" width="1.2" height="22.6" fill="#f0e68c"/>
<rect x="1398.5" y="530.8" width="3.5" height="1.6" fill="#f0e68c"/>
<rect x="1400.0" y="530.8" width="3.5" height="1.6" fill="#f0e68c"/>
<rect x="1403.5" y="531.6" width="1.2" height="7.5" fill="#f0e68c"/>
<rect x="1403.0" y="530.8" width="3.5" height="1.6" fill="#f0e68c"/>
<rect x="1405.0" y="531.6" width="1.2" height="7.5" fill="#f0e68c"/>
<rect x="1404.5" y="530.8" width="3.5" height="1.6" fill="#f0e68c"/>
<rect x="1406.5" y="524.0" width="2.2" height="8.5" fill="#ff0000"/>
<rect x="1408.0" y="524.0" width="1.2" height="7.5" fill="#f0e68c"/>
<rect x="1407.5" y="523.2" width="3.5" height="1.6" fill="#f0e68c"/>
<rect x="1411.0" y="516.5" width="1.2" height="22.6" fill="#f0e68c"/>
<rect x="1410.5" y="515.7" width="3.5" height="1.6" fill="#f0e68c"/>
<rect x="1412.5" y="516.5" width="1.2" height="7.5" fill="#f0e68c"/>
<rect x="1412.0" y="515.7" width="3.5" height="1.6" fill="#f0e68c"/>
<rect x="1415.0" y="515.7" width="3.5" height="1.6" fill="#f0e68c"/>
<rect x="1417.0" y="509.0" width="2.2" height="8.5" fill="#1e90ff"/>
<rect x="1418.5" y="501.5" width="1.2" height="7.5" fill="#1e90ff"/>
<rect x="1418.0" y="508.2" width="3.5" height="1.6" fill="#1e90ff"/>
<rect x="1419.5" y="508.2" width="3.5" height="1.6" fill="#f0e68c"/>
<rect x="1421.0" y="508.2" width="3.5" height="1.6" fill="#f0e68c"/>
<rect x="1422.5" y="508.2" width="3.5" height="1.6" fill="#f0e68c"/>
<rect x="1424.5" y="509.0" width="1.2" height="7.5" fill="#f0e68c"/>
<rect x="1424.0" y="508.2" width="3.5" height="1.6" fill="#f0e68c"/>
<rect x="1426.0" y="509.0" width="1.2" height="7.5" fill="#f0e68c"/>
<rect x="1425.5" y="508.2" width="3.5" height="1.6" fill="#f0e68c"/>
<rect x="1428.5" y="508.2" width="3.5" height="1.6" fill="#f0e68c"/>
<rect x="1430.5" y="509.0" width="2.2" height="16.0" fill="#1e90ff"/>
<rect x="1432.0" y="524.0" width="2.2" height="8.5" fill="#1e90ff"/>
<rect x="1433.5" y="531.6" width="2.2" height="16.0" fill="#1e90ff"/>
<rect x="1435.0" y="539.1" width="2.2" height="8.5" fill="#1e90ff"/>
<rect x="1436.5" y="546.6" width="2.2" height="16.0" fill="#1e90ff"/>
<rect x="1438.0" y="554.1" width="2.2" height="8.5" fill="#1e90ff"/>
<rect x="1439.5" y="561.6" width="2.2" height="8.5" fill="#1e90ff"/>
<rect x="1440.5" y="568.4" width="3.5" height="1.6" fill="#f0e68c"/>
<rect x="1442.5" y="569.2" width="2.2" height="8.5" fill="#1e90ff"/>
<rect x="1444.0" y="576.7" width="1.2" height="7.5" fill="#f0e68c"/>
<rect x="1443.5" y="575.9" width="3.5" height="1.6" fill="#f0e68c"/>
<rect x="1445.0" y="575.9" width="3.5" height="1.6" fill="#f0e68c"/>
<rect x="1447.0" y="554.1" width="1.2" height="22.6" fill="#f0e68c"/>
<rect x="1446.5" y="575.9" width="3.5" height="1.6" fill="#f0e68c"/>
<rect x="1448.5" y="576.7" width="2.2" height="8.5" fill="#1e90ff"/>
<rect x="1449.5" y="583.4" width="3.5" height="1.6" fill="#f0e68c"/>
<rect x="1451.5" y="576.7" width="2.2" height="16.0" fill="#ff0000"/>
<rect x="1453.0" y="569.2" width="1.2" height="7.5" fill="#ff0000"/>
<rect x="1452.5" y="575.9" width="3.5" height="1.6" fill="#ff0000"/>
<rect x="1454.5" y="569.2" width="2.2" height="8.5" fill="#ff0000"/>
<rect x="1456.0" y="569.2" width="1.2" height="7.5" fill="#f0e68c"/>
<rect x="1455.5" y="568.4" width="3.5" height="1.6" fill="#f0e68c"/>
<rect x="1457.5" y="569.2" width="2.2" height="8.5" fill="#1e90ff"/>
<rect x="1459.0" y="576.7" width="1.2" height="7.5" fill="#f0e68c"/>
<rect x="1458.5" y="575.9" width="3.5" height="1.6" fill="#f0e68c"/>
<rect x="1460.0" y="575.9" width="3.5" height="1.6" fill="#ff0000"/>
<rect x="1462.0" y="576.7" width="2.2" height="16.0" fill="#1e90ff"/>
<rect x="1463.0" y="590.9" width="3.5" height="1.6" fill="#f0e68c"/>
<rect x="1464.5" y="590.9" width="3.5" height="1.6" fill="#f0e68c"/>
<rect x="1466.0" y="590.9" width="3.5" height="1.6" fill="#f0e68c"/>
<rect x="1468.0" y="584.2" width="2.2" height="16.0" fill="#ff0000"/>
<rect x="1469.0" y="583.4" width="3.5" height="1.6" fill="#f0e68c"/>
<rect x="1471.0" y="569.2" width="2.2" height="16.0" fill="#ff0000"/>
<rect x="1472.0" y="575.9" width="3.5" height="1.6" fill="#f0e68c"/>
<rect x="1474.0" y="569.2" width="1.2" height="7.5" fill="#f0e68c"/>
<rect x="1473.5" y="575.9" width="3.5" height="1.6" fill="#f0e68c"/>
<rect x="1475.5" y="576.7" width="2.2" height="16.0" fill="#1e90ff"/>
<rect x="1477.0" y="576.7" width="1.2" height="15.0" fill="#f0e68c"/>
<rect x="1476.5" y="583.4" width="3.5" height="1.6" fill="#f0e68c"/>
<rect x="1478.5" y="584.2" width="2.2" height="8.5" fill="#1e90ff"/>
<rect x="1480.0" y="591.7" width="2.2" height="8.5" fill="#f0e68c"/>
<rect x="1481.5" y="591.7" width="1.2" height="7.5" fill="#f0e68c"/>
<rect x="1481.0" y="598.4" width="3.5" height="1.6" fill="#f0e68c"/>
<rect x="1483.0" y="599.2" width="2.2" height="8.5" fill="#1e90ff"/>
<rect x="1484.0" y="606.0" width="3.5" height="1.6" fill="#f0e68c"/>
<rect x="1486.0" y="599.2" width="1.2" height="15.0" fill="#f0e68c"/>
<rect x="1485.5" y="606.0" width="3.5" height="1.6" fill="#f0e68c"/>
<rect x="1489.0" y="606.8" width="2.2" height="16.0" fill="#1e90ff"/>
<rect x="1490.0" y="613.5" width="3.5" height="1.6" fill="#f0e68c"/>
<rect x="1491.5" y="613.5" width="3.5" height="1.6" fill="#f0e68c"/>
<rect x="1493.5" y="606.8" width="2.2" height="23.6" fill="#1e90ff"/>
<rect x="1495.0" y="614.3" width="1.2" height="7.5" fill="#f0e68c"/>
<rect x="1494.5" y="621.0" width="3.5" height="1.6" fill="#f0e68c"/>
<rect x="1496.5" y="621.8" width="2.2" height="16.0" fill="#1e90ff"/>
<rect x="1499.5" y="629.3" width="2.2" height="8.5" fill="#f0e68c"/>
<rect x="1501.0" y="629.3" width="1.2" height="7.5" fill="#f0e68c"/>
<rect x="1500.5" y="636.0" width="3.5" height="1.6" fill="#f0e68c"/>
<rect x="1502.5" y="636.8" width="1.2" height="7.5" fill="#f0e68c"/>
<rect x="1502.0" y="636.0" width="3.5" height="1.6" fill="#f0e68c"/>
<rect x="1504.0" y="636.8" width="2.2" height="8.5" fill="#1e90ff"/>
<rect x="1505.0" y="643.6" width="3.5" height="1.6" fill="#f0e68c"/>
<rect x="1506.5" y="643.6" width="3.5" height="1.6" fill="#f0e68c"/>
<rect x="1508.5" y="636.8" width="2.2" height="8.5" fill="#ff0000"/>
<rect x="1510.0" y="636.8" width="2.2" height="16.0" fill="#1e90ff"/>
<rect x="1511.5" y="636.8" width="1.2" height="7.5" fill="#f0e68c"/>
<rect x="1511.0" y="643.6" width="3.5" height="1.6" fill="#f0e68c"/>
<rect x="1513.0" y="621.8" width="2.2" height="31.1" fill="#ff0000"/>
<rect x="1514.0" y="636.0" width="3.5" height="1.6" fill="#f0e68c"/>
<rect x="1515.5" y="636.0" width="3.5" height="1.6" fill="#f0e68c"/>
<rect x="1517.0" y="636.0" width="3.5" height="1.6" fill="#f0e68c"/>
<rect x="1518.5" y="636.0" width="3.5" height="1.6" fill="#f0e68c"/>
<rect x="1520.0" y="636.0" width="3.5" height="1.6" fill="#f0e68c"/>
<rect x="1521.5" y="636.0" width="3.5" height="1.6" fill="#f0e68c"/>
<rect x="1523.0" y="636.0" width="3.5" height="1.6" fill="#f0e68c"/>
<rect x="1525.0" y="636.8" width="2.2" height="8.5" fill="#1e90ff"/>
<rect x="1526.5" y="629.3" width="2.2" height="16.0" fill="#ff0000"/>
<rect x="1528.0" y="636.8" width="2.2" height="16.0" fill="#1e90ff"/>
<rect x="1531.0" y="659.4" width="2.2" height="8.5" fill="#ff0000"/>
<rect x="1532.5" y="666.9" width="2.2" height="8.5" fill="#1e90ff"/>
<rect x="1534.0" y="674.4" width="2.2" height="8.5" fill="#1e90ff"/>
<rect x="1535.5" y="682.0" width="2.2" height="23.6" fill="#1e90ff"/>
<rect x="1537.0" y="697.0" width="2.2" height="31.1" fill="#1e90ff"/>
<rect x="1538.5" y="719.6" width="2.2" height="16.0" fill="#1e90ff"/>
<rect x="1540.0" y="734.6" width="2.2" height="23.6" fill="#1e90ff"/>
<rect x="1541.5" y="757.2" width="2.2" height="8.5" fill="#1e90ff"/>
<rect x="1543.0" y="764.7" width="2.2" height="8.5" fill="#1e90ff"/>
<rect x="1544.5" y="772.2" width="2.2" height="8.5" fill="#1e90ff"/>
<rect x="1546.0" y="764.7" width="2.2" height="16.0" fill="#ff0000"/>
<rect x="1547.0" y="771.4" width="3.5" height="1.6" fill="#f0e68c"/>
<rect x="1549.0" y="764.7" width="2.2" height="8.5" fill="#ff0000"/>
<rect x="1550.5" y="764.7" width="1.2" height="7.5" fill="#f0e68c"/>
<rect x="1550.0" y="763.9" width="3.5" height="1.6" fill="#f0e68c"/>
<rect x="1552.0" y="749.6" width="2.2" height="23.6" fill="#ff0000"/>
<rect x="1553.5" y="757.2" width="2.2" height="8.5" fill="#1e90ff"/>
<rect x="1554.5" y="763.9" width="3.5" height="1.6" fill="#f0e68c"/>
<rect x="1556.0" y="763.9" width="3.5" height="1.6" fill="#f0e68c"/>
<rect x="1557.5" y="763.9" width="3.5" height="1.6" fill="#f0e68c"/>
<rect x="1559.0" y="763.9" width="3.5" height="1.6" fill="#f0e68c"/>
<rect x="1562.0" y="756.4" width="3.5" height="1.6" fill="#f0e68c"/>
<rect x="1564.0" y="757.2" width="2.2" height="8.5" fill="#ff0000"/>
<rect x="1565.5" y="764.7" width="1.2" height="7.5" fill="#f0e68c"/>
<rect x="1565.0" y="763.9" width="3.5" height="1.6" fill="#f0e68c"/>
<rect x="1567.0" y="734.6" width="1.2" height="37.6" fill="#f0e68c"/>
<rect x="1566.5" y="763.9" width="3.5" height="1.6" fill="#f0e68c"/>
<rect x="1568.5" y="757.2" width="1.2" height="7.5" fill="#f0e68c"/>
<rect x="1568.0" y="763.9" width="3.5" height="1.6" fill="#f0e68c"/>
<rect x="1569.5" y="763.9" width="3.5" height="1.6" fill="#f0e68c"/>
<rect x="1571.0" y="763.9" width="3.5" height="1.6" fill="#f0e68c"/>
<rect x="1573.0" y="749.6" width="2.2" height="16.0" fill="#ff0000"/>
<rect x="1574.0" y="748.8" width="3.5" height="1.6" fill="#f0e68c"/>
<rect x="1576.0" y="749.6" width="1.2" height="7.5" fill="#f0e68c"/>
<rect x="1575.5" y="748.8" width="3.5" height="1.6" fill="#f0e68c"/>
<rect x="1577.5" y="742.1" width="2.2" height="8.5" fill="#ff0000"/>
<rect x="1579.0" y="734.6" width="2.2" height="8.5" fill="#ff0000"/>
<rect x="1582.0" y="719.6" width="2.2" height="8.5" fill="#ff0000"/>
<rect x="1583.0" y="718.8" width="3.5" height="1.6" fill="#f0e68c"/>
<rect x="1588.0" y="697.0" width="2.2" height="16.0" fill="#ff0000"/>
<rect x="1589.0" y="696.2" width="3.5" height="1.6" fill="#f0e68c"/>
<rect x="1590.5" y="696.2" width="3.5" height="1.6" fill="#f0e68c"/>
<rect x="1592.0" y="696.2" width="3.5" height="1.6" fill="#f0e68c"/>
<rect x="1595.0" y="688.7" width="3.5" height="1.6" fill="#f0e68c"/>
<rect x="1596.5" y="688.7" width="3.5" height="1.6" fill="#f0e68c"/>
<rect x="1598.5" y="682.0" width="2.2" height="8.5" fill="#ff0000"/>
<rect x="1599.5" y="681.2" width="3.5" height="1.6" fill="#1e90ff"/>
<rect x="1601.0" y="681.2" width="3.5" height="1.6" fill="#f0e68c"/>
<rect x="1604.0" y="681.2" width="3.5" height="1.6" fill="#f0e68c"/>
<rect x="1610.0" y="673.6" width="3.5" height="1.6" fill="#f0e68c"/>
<rect x="1611.5" y="666.1" width="3.5" height="1.6" fill="#f0e68c"/>
<rect x="1613.0" y="666.1" width="3.5" height="1.6" fill="#f0e68c"/>
<rect x="1615.0" y="659.4" width="1.2" height="7.5" fill="#f0e68c"/>
<rect x="1614.5" y="666.1" width="3.5" height="1.6" fill="#f0e68c"/>
<rect x="1616.5" y="651.9" width="2.2" height="23.6" fill="#ff0000"/>
<rect x="1619.5" y="659.4" width="1.2" height="7.5" fill="#f0e68c"/>
<rect x="1619.0" y="658.6" width="3.5" height="1.6" fill="#f0e68c"/>
<rect x="1625.0" y="651.1" width="3.5" height="1.6" fill="#f0e68c"/>
<rect x="1629.5" y="636.0" width="3.5" height="1.6" fill="#f0e68c"/>
<rect x="1633.0" y="636.8" width="1.2" height="7.5" fill="#f0e68c"/>
<rect x="1632.5" y="636.0" width="3.5" height="1.6" fill="#f0e68c"/>
<rect x="1635.5" y="636.0" width="3.5" height="1.6" fill="#f0e68c"/>
<rect x="1638.5" y="636.0" width="3.5" height="1.6" fill="#f0e68c"/>
<rect x="1647.5" y="643.6" width="3.5" height="1.6" fill="#f0e68c"/>
<rect x="1650.5" y="651.1" width="3.5" height="1.6" fill="#f0e68c"/>
<rect x="1654.0" y="644.4" width="2.2" height="23.6" fill="#1e90ff"/>
<rect x="1657.0" y="659.4" width="1.2" height="7.5" fill="#f0e68c"/>
<rect x="1656.5" y="658.6" width="3.5" height="1.6" fill="#f0e68c"/>
<rect x="1658.0" y="651.1" width="3.5" height="1.6" fill="#f0e68c"/>
<rect x="1664.5" y="636.8" width="1.2" height="15.0" fill="#f0e68c"/>
<rect x="1664.0" y="643.6" width="3.5" height="1.6" fill="#f0e68c"/>
<rect x="1667.0" y="636.0" width="3.5" height="1.6" fill="#f0e68c"/>
<rect x="1668.5" y="643.6" width="3.5" height="1.6" fill="#f0e68c"/>
<rect x="1670.0" y="643.6" width="3.5" height="1.6" fill="#f0e68c"/>
<rect x="1673.5" y="636.8" width="1.2" height="7.5" fill="#f0e68c"/>
<rect x="1673.0" y="643.6" width="3.5" height="1.6" fill="#f0e68c"/>
<rect x="1680.5" y="651.1" width="3.5" height="1.6" fill="#f0e68c"/>
<rect x="1682.5" y="621.8" width="2.2" height="38.6" fill="#ff0000"/>
<rect x="1683.5" y="643.6" width="3.5" height="1.6" fill="#f0e68c"/>
<rect x="1686.5" y="651.1" width="3.5" height="1.6" fill="#f0e68c"/>
<rect x="1689.5" y="651.1" width="3.5" height="1.6" fill="#f0e68c"/>
<rect x="1691.5" y="644.4" width="1.2" height="7.5" fill="#f0e68c"/>
<rect x="1691.0" y="651.1" width="3.5" height="1.6" fill="#f0e68c"/>
<rect x="1692.5" y="651.1" width="3.5" height="1.6" fill="#f0e68c"/>
<rect x="1694.0" y="651.1" width="3.5" height="1.6" fill="#ff0000"/>
<rect x="1701.5" y="636.0" width="3.5" height="1.6" fill="#f0e68c"/>
<rect x="1703.5" y="629.3" width="1.2" height="7.5" fill="#f0e68c"/>
<rect x="1703.0" y="636.0" width="3.5" height="1.6" fill="#f0e68c"/>
<rect x="1705.0" y="621.8" width="2.2" height="16.0" fill="#ff0000"/>
<rect x="1707.5" y="628.5" width="3.5" height="1.6" fill="#f0e68c"/>
<rect x="1712.0" y="621.0" width="3.5" height="1.6" fill="#f0e68c"/>
<rect x="1715.0" y="628.5" width="3.5" height="1.6" fill="#f0e68c"/>
<rect x="1716.5" y="636.0" width="3.5" height="1.6" fill="#f0e68c"/>
<rect x="1720.0" y="636.8" width="2.2" height="8.5" fill="#1e90ff"/>
<rect x="1721.5" y="644.4" width="2.2" height="8.5" fill="#1e90ff"/>
<rect x="1722.5" y="651.1" width="3.5" height="1.6" fill="#1e90ff"/>
<rect x="1724.0" y="651.1" width="3.5" height="1.6" fill="#f0e68c"/>
<rect x="1725.5" y="636.0" width="3.5" height="1.6" fill="#f0e68c"/>
<rect x="1729.0" y="614.3" width="2.2" height="16.0" fill="#ff0000"/>
<rect x="1731.5" y="598.4" width="3.5" height="1.6" fill="#f0e68c"/>
<rect x="1733.0" y="590.9" width="3.5" height="1.6" fill="#f0e68c"/>
<rect x="1734.5" y="583.4" width="3.5" height="1.6" fill="#f0e68c"/>
<rect x="1738.0" y="576.7" width="1.2" height="7.5" fill="#f0e68c"/>
<rect x="1737.5" y="583.4" width="3.5" height="1.6" fill="#f0e68c"/>
<rect x="1740.5" y="575.9" width="3.5" height="1.6" fill="#f0e68c"/>
<rect x="1742.0" y="568.4" width="3.5" height="1.6" fill="#f0e68c"/>
<rect x="1744.0" y="569.2" width="1.2" height="22.6" fill="#f0e68c"/>
<rect x="1743.5" y="568.4" width="3.5" height="1.6" fill="#f0e68c"/>
<rect x="1747.0" y="561.6" width="1.2" height="7.5" fill="#f0e68c"/>
<rect x="1746.5" y="568.4" width="3.5" height="1.6" fill="#f0e68c"/>
<rect x="1748.5" y="569.2" width="2.2" height="16.0" fill="#1e90ff"/>
<rect x="1749.5" y="590.9" width="3.5" height="1.6" fill="#f0e68c"/>
<rect x="1752.5" y="606.0" width="3.5" height="1.6" fill="#f0e68c"/>
<rect x="1754.5" y="599.2" width="1.2" height="7.5" fill="#f0e68c"/>
<rect x="1754.0" y="606.0" width="3.5" height="1.6" fill="#f0e68c"/>
<rect x="1757.5" y="599.2" width="1.2" height="15.0" fill="#f0e68c"/>
<rect x="1757.0" y="606.0" width="3.5" height="1.6" fill="#f0e68c"/>
<rect x="1759.0" y="599.2" width="1.2" height="7.5" fill="#f0e68c"/>
<rect x="1758.5" y="606.0" width="3.5" height="1.6" fill="#f0e68c"/>
<rect x="1761.5" y="606.0" width="3.5" height="1.6" fill="#f0e68c"/>
<rect x="1764.5" y="613.5" width="3.5" height="1.6" fill="#f0e68c"/>
<rect x="1767.5" y="606.0" width="3.5" height="1.6" fill="#f0e68c"/>
<rect x="1769.5" y="599.2" width="1.2" height="15.0" fill="#f0e68c"/>
<rect x="1769.0" y="606.0" width="3.5" height="1.6" fill="#f0e68c"/>
<rect x="1771.0" y="576.7" width="2.2" height="31.1" fill="#ff0000"/>
<rect x="1772.0" y="598.4" width="3.5" height="1.6" fill="#f0e68c"/>
<rect x="1774.0" y="591.7" width="2.2" height="8.5" fill="#ff0000"/>
<rect x="1777.0" y="584.2" width="2.2" height="16.0" fill="#ff0000"/>
<rect x="1778.0" y="583.4" width="3.5" height="1.6" fill="#f0e68c"/>
<rect x="1781.0" y="575.9" width="3.5" height="1.6" fill="#f0e68c"/>
<rect x="1782.5" y="575.9" width="3.5" height="1.6" fill="#f0e68c"/>
<rect x="1784.0" y="575.9" width="3.5" height="1.6" fill="#f0e68c"/>
<rect x="1786.0" y="576.7" width="2.2" height="31.1" fill="#1e90ff"/>
<rect x="1787.5" y="591.7" width="2.2" height="8.5" fill="#1e90ff"/>
<rect x="1790.0" y="606.0" width="3.5" height="1.6" fill="#f0e68c"/>
<rect x="1791.5" y="606.0" width="3.5" height="1.6" fill="#f0e68c"/>
<rect x="1793.0" y="606.0" width="3.5" height="1.6" fill="#ff0000"/>
<rect x="1794.5" y="606.0" width="3.5" height="1.6" fill="#f0e68c"/>
<rect x="1796.0" y="606.0" width="3.5" height="1.6" fill="#f0e68c"/>
<rect x="1797.5" y="606.0" width="3.5" height="1.6" fill="#f0e68c"/>
<rect x="1801.0" y="606.8" width="1.2" height="7.5" fill="#ff0000"/>
<rect x="1800.5" y="606.0" width="3.5" height="1.6" fill="#ff0000"/>
<rect x="1803.5" y="613.5" width="3.5" height="1.6" fill="#f0e68c"/>
<rect x="1805.5" y="614.3" width="1.2" height="7.5" fill="#f0e68c"/>
<rect x="1805.0" y="613.5" width="3.5" height="1.6" fill="#f0e68c"/>
<rect x="1806.5" y="621.0" width="3.5" height="1.6" fill="#f0e68c"/>
<rect x="1811.5" y="629.3" width="1.2" height="7.5" fill="#f0e68c"/>
<rect x="1811.0" y="628.5" width="3.5" height="1.6" fill="#f0e68c"/>
<rect x="1812.5" y="636.0" width="3.5" height="1.6" fill="#f0e68c"/>
<rect x="1814.0" y="643.6" width="3.5" height="1.6" fill="#f0e68c"/>
<rect x="1822.0" y="651.9" width="1.2" height="15.0" fill="#f0e68c"/>
<rect x="1821.5" y="658.6" width="3.5" height="1.6" fill="#f0e68c"/>
<rect x="1823.0" y="666.1" width="3.5" height="1.6" fill="#f0e68c"/>
<rect x="1825.0" y="666.9" width="1.2" height="15.0" fill="#f0e68c"/>
<rect x="1824.5" y="666.1" width="3.5" height="1.6" fill="#f0e68c"/>
<rect x="1827.5" y="666.1" width="3.5" height="1.6" fill="#f0e68c"/>
<rect x="1829.5" y="651.9" width="1.2" height="22.6" fill="#f0e68c"/>
<rect x="1829.0" y="666.1" width="3.5" height="1.6" fill="#f0e68c"/>
<rect x="1832.0" y="666.1" width="3.5" height="1.6" fill="#1e90ff"/>
<rect x="1836.5" y="651.1" width="3.5" height="1.6" fill="#f0e68c"/>
<rect x="1838.0" y="651.1" width="3.5" height="1.6" fill="#f0e68c"/>
<rect x="1849.0" y="629.3" width="1.2" height="15.0" fill="#f0e68c"/>
<rect x="1848.5" y="643.6" width="3.5" height="1.6" fill="#f0e68c"/>
<rect x="1854.5" y="658.6" width="3.5" height="1.6" fill="#f0e68c"/>
<rect x="1860.5" y="666.1" width="3.5" height="1.6" fill="#f0e68c"/>
<rect x="1864.0" y="659.4" width="1.2" height="7.5" fill="#1e90ff"/>
<rect x="1863.5" y="666.1" width="3.5" height="1.6" fill="#1e90ff"/>
<rect x="1865.5" y="659.4" width="2.2" height="16.0" fill="#ff0000"/>
<rect x="1868.0" y="651.1" width="3.5" height="1.6" fill="#f0e68c"/>
<rect x="1869.5" y="643.6" width="3.5" height="1.6" fill="#f0e68c"/>
<rect x="1871.5" y="644.4" width="2.2" height="8.5" fill="#1e90ff"/>
<rect x="1874.0" y="651.1" width="3.5" height="1.6" fill="#ff0000"/>
<rect x="1879.0" y="644.4" width="1.2" height="7.5" fill="#f0e68c"/>
<rect x="1878.5" y="651.1" width="3.5" height="1.6" fill="#f0e68c"/>
<rect x="1882.0" y="629.3" width="1.2" height="22.6" fill="#f0e68c"/>
<rect x="1881.5" y="651.1" width="3.5" height="1.6" fill="#f0e68c"/>
<rect x="1887.5" y="651.1" width="3.5" height="1.6" fill="#f0e68c"/>
<rect x="1891.0" y="651.9" width="1.2" height="7.5" fill="#f0e68c"/>
<rect x="1890.5" y="651.1" width="3.5" height="1.6" fill="#f0e68c"/>
<rect x="1892.0" y="651.1" width="3.5" height="1.6" fill="#f0e68c"/>
<rect x="1895.0" y="651.1" width="3.5" height="1.6" fill="#f0e68c"/>
<rect x="1905.5" y="643.6" width="3.5" height="1.6" fill="#f0e68c"/>
<rect x="1907.0" y="643.6" width="3.5" height="1.6" fill="#f0e68c"/>
<rect x="1911.5" y="628.5" width="3.5" height="1.6" fill="#f0e68c"/>
<rect x="1913.0" y="636.0" width="3.5" height="1.6" fill="#f0e68c"/>
<rect x="1916.5" y="636.8" width="2.2" height="8.5" fill="#1e90ff"/>
<rect x="1919.5" y="651.9" width="1.2" height="7.5" fill="#f0e68c"/>
<rect x="1919.0" y="651.1" width="3.5" height="1.6" fill="#f0e68c"/>
</g>
<path d="M13.5 986.7H15.0V990.0H16.5V988.7H18.0V986.0H19.5V988.7H21.0V986.0H22.5V985.3H24.0V990.7H25.5V998.0H27.0V1001.3H28.5V1002.0H30.0V1004.0H31.5V1006.7H33.0V1006.0H34.5V1004.7H36.0V1002.7H37.5V1000.7H39.0V1005.3H40.5V1006.0H42.0V1003.3H43.5V1002.7H45.0V1006.0H46.5V1008.7H48.0V1010.7H49.5V1002.7H51.0V1002.7H52.5V1000.0H54.0V995.3H55.5V1000.7H57.0V998.7H58.5V1006.0H60.0V1004.0H61.5V1005.3H63.0V1012.7H64.5V1016.0H66.0V1016.7H67.5V1018.7H69.0V1020.7H70.5V1021.3H72.0V1026.7H73.5V1024.0H75.0V1022.0H76.5V1026.0H78.0V1022.0H79.5V1020.0H81.0V1022.0H82.5V1018.0H84.0V1013.3H85.5V1012.0H87.0V1010.7H88.5V1013.3H90.0V1010.0H91.5V1004.7H93.0V1006.7H94.5V1001.3H96.0V1001.3H97.5V996.0H99.0V1000.0H100.5V1000.0H102.0V998.0H103.5V999.3H105.0V1001.3H106.5V1005.3H108.0V1004.0H109.5V1002.0H111.0V1004.0H112.5V1004.7H114.0V1006.0H115.5V1000.0H117.0V1000.0H118.5V998.7H120.0V1001.3H121.5V1002.0H123.0V1006.7H124.5V1006.7H126.0V996.0H127.5V1004.7H129.0V1007.3H130.5V1000.7H132.0V997.3H133.5V993.3H135.0V996.0H136.5V999.3H138.0V1002.7H139.5V1002.7H141.0V1008.0H142.5V1008.7H144.0V1013.3H145.5V1014.7H147.0V1015.3H148.5V1012.7H150.0V1018.7H151.5V1020.0H153.0V1020.7H154.5V1017.3H156.0V1012.7H157.5V1009.3H159.0V1010.7H160.5V1012.0H162.0V1010.7H163.5V1004.0H165.0V1007.3H166.5V1002.7H168.0V1008.7H169.5V1014.7H171.0V1017.3H172.5V1018.7H174.0V1022.7H175.5V1020.7H177.0V1020.0H178.5V1022.0H180.0V1025.3H181.5V1028.0H183.0V1022.7H184.5V1020.7H186.0V1020.0H187.5V1019.3H189.0V1020.7H190.5V1018.0H192.0V1012.7H193.5V1010.7H195.0V1012.7H196.5V1009.3H198.0V1017.3H199.5V1010.0H201.0V1008.0H202.5V1010.0H204.0V1012.0H205.5V1014.7H207.0V1010.0H208.5V1006.7H210.0V1007.3H211.5V1002.7H213.0V1002.0H214.5V999.3H216.0V995.3H217.5V995.3H219.0V994.0H220.5V990.7H222.0V997.3H223.5V1001.3H225.0V1009.3H226.5V1013.3H228.0V1013.3H229.5V1015.3H231.0V1016.0H232.5V1014.7H234.0V1020.0H235.5V1020.0H237.0V1020.0H238.5V1025.3H240.0V1023.3H241.5V1027.3H243.0V1034.0H244.5V1024.7H246.0V1021.3H247.5V1022.7H249.0V1016.7H250.5V1016.7H252.0V1014.0H253.5V1010.0H255.0V1004.0H256.5V1002.7H258.0V1005.3H259.5V1006.0H261.0V1007.3H262.5V1008.0H264.0V1012.7H265.5V1014.7H267.0V1014.0H268.5V1012.7H270.0V1015.3H271.5V1014.0H273.0V1017.3H274.5V1018.7H276.0V1016.7H277.5V1012.7H279.0V1012.7H280.5V1015.3H282.0V1012.7H283.5V1010.7H285.0V1012.7H286.5V1008.7H288.0V1008.7H289.5V1004.7H291.0V1003.3H292.5V1005.3H294.0V1007.3H295.5V1011.3H297.0V1014.0H298.5V1014.7H300.0V1013.3H301.5V1015.3H303.0V1016.7H304.5V1015.3H306.0V1016.0H307.5V1014.7H309.0V1013.3H310.5V1009.3H312.0V1011.3H313.5V1006.7H315.0V1008.7H316.5V1008.7H318.0V1002.0H319.5V1006.7H321.0V1004.7H322.5V1008.0H324.0V1008.7H325.5V1009.3H327.0V1017.3H328.5V1019.3H330.0V1016.0H331.5V1013.3H333.0V1009.3H334.5V1007.3H336.0V1008.0H337.5V1004.7H339.0V1003.3H340.5V1007.3H342.0V1001.3H343.5V1004.7H345.0V1003.3H346.5V1000.0H348.0V998.0H349.5V993.3H351.0V995.3H352.5V992.0H354.0V988.7H355.5V984.7H357.0V980.0H358.5V982.7H360.0V982.7H361.5V977.3H363.0V976.0H364.5V979.3H366.0V982.7H367.5V984.0H369.0V983.3H370.5V987.3H372.0V998.7H373.5V1002.0H375.0V996.0H376.5V993.3H378.0V994.7H379.5V992.0H381.0V995.3H382.5V997.3H384.0V997.3H385.5V1001.3H387.0V1005.3H388.5V1014.0H390.0V1015.3H391.5V1012.7H393.0V1010.7H394.5V1009.3H396.0V1015.3H397.5V1014.7H399.0V1019.3H400.5V1024.0H402.0V1017.3H403.5V1007.3H405.0V1014.0H406.5V1016.7H408.0V1020.0H409.5V1020.0H411.0V1024.7H412.5V1030.0H414.0V1032.0H415.5V1034.7H417.0V1037.3H418.5V1034.7H420.0V1034.7H421.5V1037.3H423.0V1032.0H424.5V1019.3H426.0V1020.0H427.5V1018.0H429.0V1012.7H430.5V1007.3H432.0V1008.7H433.5V1004.0H435.0V1003.3H436.5V996.0H438.0V994.7H439.5V991.3H441.0V992.0H442.5V996.7H444.0V996.7H445.5V998.0H447.0V1000.0H448.5V1004.7H450.0V1002.0H451.5V1006.7H453.0V1007.3H454.5V1005.3H456.0V1008.0H457.5V1011.3H459.0V1011.3H460.5V1018.7H462.0V1014.7H463.5V1018.0H465.0V1020.0H466.5V1021.3H468.0V1018.7H469.5V1018.0H471.0V1014.7H472.5V1010.7H474.0V1010.7H475.5V1006.0H477.0V1008.0H478.5V1008.0H480.0V1004.0H481.5V1004.7H483.0V1003.3H484.5V1000.0H486.0V1001.3H487.5V998.7H489.0V994.7H490.5V992.7H492.0V995.3H493.5V997.3H495.0V999.3H496.5V996.0H498.0V994.7H499.5V998.7H501.0V997.3H502.5V997.3H504.0V998.0H505.5V1000.7H507.0V1003.3H508.5V1003.3H510.0V1001.3H511.5V996.7H513.0V998.7H514.5V994.0H516.0V992.0H517.5V990.7H519.0V988.0H520.5V990.7H522.0V990.7H523.5V986.0H525.0V988.0H526.5V982.0H528.0V982.7H529.5V985.3H531.0V985.3H532.5V984.0H534.0V980.0H535.5V983.3H537.0V980.0H538.5V978.7H540.0V982.0H541.5V980.7H543.0V982.0H544.5V981.3H546.0V988.0H547.5V990.0H549.0V994.0H550.5V999.3H552.0V1002.7H553.5V1003.3H555.0V1002.7H556.5V1002.7H558.0V999.3H559.5V1000.0H561.0V997.3H562.5V998.0H564.0V996.0H565.5V994.7H567.0V994.7H568.5V993.3H570.0V993.3H571.5V998.0H573.0V995.3H574.5V998.0H576.0V995.3H577.5V996.0H579.0V996.7H580.5V1000.0H582.0V998.7H583.5V998.0H585.0V999.3H586.5V1002.7H588.0V999.3H589.5V1002.0H591.0V1000.0H592.5V998.0H594.0V993.3H595.5V996.7H597.0V995.3H598.5V995.3H600.0V1002.0H601.5V1002.7H603.0V1002.0H604.5V1002.0H606.0V996.7H607.5V994.7H609.0V996.0H610.5V993.3H612.0V988.7H613.5V984.7H615.0V980.7H616.5V985.3H618.0V982.7H619.5V986.7H621.0V986.7H622.5V990.0H624.0V990.7H625.5V991.3H627.0V992.7H628.5V988.7H630.0V983.3H631.5V976.0H633.0V972.7H634.5V971.3H636.0V974.0H637.5V974.7H639.0V973.3H640.5V975.3H642.0V978.7H643.5V974.7H645.0V978.7H646.5V979.3H648.0V975.3H649.5V979.3H651.0V979.3H652.5V977.3H654.0V976.0H655.5V976.0H657.0V975.3H658.5V978.0H660.0V980.0H661.5V979.3H663.0V980.7H664.5V977.3H666.0V981.3H667.5V980.7H669.0V986.0H670.5V984.0H672.0V984.7H673.5V988.0H675.0V991.3H676.5V988.0H678.0V987.3H679.5V983.3H681.0V981.3H682.5V986.7H684.0V990.0H685.5V988.7H687.0V989.3H688.5V985.3H690.0V986.0H691.5V988.0H693.0V983.3H694.5V986.0H696.0V982.7H697.5V979.3H699.0V983.3H700.5V982.0H702.0V977.3H703.5V978.0H705.0V974.0H706.5V976.0H708.0V974.0H709.5V973.3H711.0V970.7H712.5V969.3H714.0V970.7H715.5V970.0H717.0V970.7H718.5V968.7H720.0V962.0H721.5V959.3H723.0V956.7H724.5V958.0H726.0V955.3H727.5V950.0H729.0V956.0H730.5V956.0H732.0V956.7H733.5V954.7H735.0V953.3H736.5V956.7H738.0V956.0H739.5V954.7H741.0V956.0H742.5V957.3H744.0V956.7H745.5V958.0H747.0V962.0H748.5V962.7H750.0V966.0H751.5V968.0H753.0V972.0H754.5V977.3H756.0V979.3H757.5V987.3H759.0V982.0H760.5V979.3H762.0V970.0H763.5V970.0H765.0V966.0H766.5V964.0H768.0V961.3H769.5V963.3H771.0V948.7H772.5V914.7H774.0V908.7H775.5V908.0H777.0V904.7H778.5V909.3H780.0V910.0H781.5V908.7H783.0V907.3H784.5V907.3H786.0V906.7H787.5V905.3H789.0V900.7H790.5V902.0H792.0V900.7H793.5V905.3H795.0V904.7H796.5V909.3H798.0V906.0H799.5V912.7H801.0V913.3H802.5V913.3H804.0V918.7H805.5V920.7H807.0V920.0H808.5V923.3H810.0V920.7H811.5V920.7H813.0V920.0H814.5V925.3H816.0V928.7H817.5V929.3H819.0V930.0H820.5V929.3H822.0V922.7H823.5V921.3H825.0V915.3H826.5V919.3H828.0V919.3H829.5V924.0H831.0V922.0H832.5V927.3H834.0V925.3H835.5V918.7H837.0V912.7H838.5V917.3H840.0V924.7H841.5V928.0H843.0V929.3H844.5V934.0H846.0V933.3H847.5V932.7H849.0V938.0H850.5V938.7H852.0V939.3H853.5V934.0H855.0V934.7H856.5V934.7H858.0V933.3H859.5V934.7H861.0V932.0H862.5V929.3H864.0V930.0H865.5V931.3H867.0V936.7H868.5V938.0H870.0V933.3H871.5V931.3H873.0V924.7H874.5V933.3H876.0V942.7H877.5V934.7H879.0V931.3H880.5V927.3H882.0V920.7H883.5V916.0H885.0V911.3H886.5V900.0H888.0V894.0H889.5V898.0H891.0V897.3H892.5V896.7H894.0V898.0H895.5V898.7H897.0V904.0H898.5V902.0H900.0V904.7H901.5V911.3H903.0V911.3H904.5V916.0H906.0V912.0H907.5V904.7H909.0V905.3H910.5V900.7H912.0V896.7H913.5V891.3H915.0V894.7H916.5V892.0H918.0V892.7H919.5V892.0H921.0V890.7H922.5V898.7H924.0V896.7H925.5V903.3H927.0V905.3H928.5V912.0H930.0V917.3H931.5V916.0H933.0V916.0H934.5V915.3H936.0V915.3H937.5V914.0H939.0V912.0H940.5V910.0H942.0V913.3H943.5V912.0H945.0V907.3H946.5V908.7H948.0V901.3H949.5V905.3H951.0V909.3H952.5V906.7H954.0V906.7H955.5V910.0H957.0V914.7H958.5V913.3H960.0V920.0H961.5V928.7H963.0V934.7H964.5V930.0H966.0V925.3H967.5V920.0H969.0V914.7H970.5V912.7H972.0V907.3H973.5V903.3H975.0V905.3H976.5V902.7H978.0V905.3H979.5V903.3H981.0V901.3H982.5V901.3H984.0V900.7H985.5V899.3H987.0V901.3H988.5V899.3H990.0V894.7H991.5V896.0H993.0V897.3H994.5V896.0H996.0V893.3H997.5V889.3H999.0V889.3H1000.5V890.0H1002.0V892.7H1003.5V892.7H1005.0V894.7H1006.5V896.7H1008.0V894.7H1009.5V896.0H1011.0V893.3H1012.5V890.7H1014.0V888.0H1015.5V886.7H1017.0V885.3H1018.5V880.7H1020.0V885.3H1021.5V881.3H1023.0V878.7H1024.5V880.0H1026.0V880.0H1027.5V886.0H1029.0V887.3H1030.5V887.3H1032.0V888.0H1033.5V894.0H1035.0V893.3H1036.5V902.0H1038.0V906.7H1039.5V906.0H1041.0V906.0H1042.5V906.0H1044.0V906.0H1045.5V906.7H1047.0V907.3H1048.5V907.3H1050.0V909.3H1051.5V904.7H1053.0V902.0H1054.5V903.3H1056.0V904.7H1057.5V898.7H1059.0V898.7H1060.5V898.0H1062.0V900.7H1063.5V898.0H1065.0V897.3H1066.5V900.0H1068.0V902.0H1069.5V906.0H1071.0V905.3H1072.5V908.0H1074.0V903.3H1075.5V905.3H1077.0V900.7H1078.5V901.3H1080.0V900.0H1081.5V898.0H1083.0V894.7H1084.5V897.3H1086.0V896.7H1087.5V897.3H1089.0V898.0H1090.5V894.0H1092.0V896.7H1093.5V898.7H1095.0V904.7H1096.5V903.3H1098.0V906.7H1099.5V909.3H1101.0V915.3H1102.5V917.3H1104.0V914.7H1105.5V918.7H1107.0V912.0H1108.5V906.7H1110.0V905.3H1111.5V901.3H1113.0V901.3H1114.5V898.7H1116.0V900.0H1117.5V897.3H1119.0V896.7H1120.5V893.3H1122.0V892.0H1123.5V897.3H1125.0V902.0H1126.5V906.0H1128.0V911.3H1129.5V917.3H1131.0V923.3H1132.5V921.3H1134.0V918.7H1135.5V918.7H1137.0V916.7H1138.5V921.3H1140.0V920.0H1141.5V915.3H1143.0V912.0H1144.5V910.0H1146.0V908.7H1147.5V909.3H1149.0V908.0H1150.5V906.7H1152.0V898.0H1153.5V901.3H1155.0V902.7H1156.5V903.3H1158.0V902.0H1159.5V908.7H1161.0V910.7H1162.5V912.0H1164.0V914.0H1165.5V915.3H1167.0V908.7H1168.5V907.3H1170.0V904.7H1171.5V901.3H1173.0V900.0H1174.5V899.3H1176.0V901.3H1177.5V900.7H1179.0V901.3H1180.5V904.0H1182.0V904.7H1183.5V902.7H1185.0V904.0H1186.5V902.0H1188.0V900.7H1189.5V901.3H1191.0V900.7H1192.5V898.0H1194.0V892.0H1195.5V888.0H1197.0V882.0H1198.5V880.0H1200.0V884.7H1201.5V894.0H1203.0V898.0H1204.5V904.0H1206.0V902.0H1207.5V908.0H1209.0V908.0H1210.5V906.0H1212.0V904.7H1213.5V904.7H1215.0V901.3H1216.5V896.0H1218.0V897.3H1219.5V908.0H1221.0V919.3H1222.5V929.3H1224.0V922.7H1225.5V912.0H1227.0V911.3H1228.5V913.3H1230.0V922.7H1231.5V924.0H1233.0V921.3H1234.5V909.3H1236.0V897.3H1237.5V880.0H1239.0V882.7H1240.5V890.0H1242.0V894.7H1243.5V896.7H1245.0V900.0H1246.5V900.7H1248.0V897.3H1249.5V893.3H1251.0V889.3H1252.5V883.3H1254.0V876.7H1255.5V872.0H1257.0V866.7H1258.5V861.3H1260.0V850.7H1261.5V840.7H1263.0V848.0H1264.5V845.3H1266.0V846.7H1267.5V848.7H1269.0V846.7H1270.5V850.7H1272.0V860.7H1273.5V862.0H1275.0V859.3H1276.5V860.0H1278.0V858.7H1279.5V860.7H1281.0V857.3H1282.5V868.0H1284.0V876.7H1285.5V887.3H1287.0V887.3H1288.5V892.0H1290.0V892.0H1291.5V894.0H1293.0V897.3H1294.5V900.7H1296.0V904.0H1297.5V912.7H1299.0V918.0H1300.5V922.7H1302.0V915.3H1303.5V902.7H1305.0V889.3H1306.5V885.3H1308.0V883.3H1309.5V877.3H1311.0V875.3H1312.5V877.3H1314.0V876.7H1315.5V873.3H1317.0V871.3H1318.5V871.3H1320.0V871.3H1321.5V875.3H1323.0V875.3H1324.5V880.0H1326.0V880.0H1327.5V884.0H1329.0V884.7H1330.5V892.0H1332.0V886.7H1333.5V885.3H1335.0V886.0H1336.5V887.3H1338.0V888.0H1339.5V894.7H1341.0V900.7H1342.5V903.3H1344.0V912.0H1345.5V918.0H1347.0V918.0H1348.5V915.3H1350.0V917.3H1351.5V912.7H1353.0V912.7H1354.5V909.3H1356.0V910.0H1357.5V904.7H1359.0V904.0H1360.5V911.3H1362.0V908.7H1363.5V912.7H1365.0V912.0H1366.5V914.7H1368.0V914.7H1369.5V912.7H1371.0V914.0H1372.5V916.0H1374.0V913.3H1375.5V910.0H1377.0V910.7H1378.5V918.7H1380.0V927.3H1381.5V936.0H1383.0V940.0H1384.5V944.0H1386.0V938.7H1387.5V946.7H1389.0V948.0H1390.5V942.7H1392.0V944.7H1393.5V944.0H1395.0V937.3H1396.5V933.3H1398.0V930.7H1399.5V929.3H1401.0V929.3H1402.5V929.3H1404.0V924.7H1405.5V922.0H1407.0V923.3H1408.5V921.3H1410.0V920.7H1411.5V920.0H1413.0V917.3H1414.5V916.0H1416.0V918.7H1417.5V917.3H1419.0V918.0H1420.5V918.7H1422.0V920.0H1423.5V915.3H1425.0V923.3H1426.5V927.3H1428.0V929.3H1429.5V930.0H1431.0V934.7H1432.5V938.0H1434.0V943.3H1435.5V938.7H1437.0V936.7H1438.5V936.0H1440.0V934.7H1441.5V935.3H1443.0V936.7H1444.5V932.0H1446.0V932.7H1447.5V928.7H1449.0V926.0H1450.5V921.3H1452.0V920.0H1453.5V910.7H1455.0V912.7H1456.5V908.0H1458.0V908.7H1459.5V912.7H1461.0V906.7H1462.5V906.7H1464.0V906.0H1465.5V906.0H1467.0V904.0H1468.5V901.3H1470.0V905.3H1471.5V904.0H1473.0V900.7H1474.5V907.3H1476.0V912.0H1477.5V912.0H1479.0V917.3H1480.5V921.3H1482.0V919.3H1483.5V922.7H1485.0V926.0H1486.5V925.3H1488.0V925.3H1489.5V924.7H1491.0V922.7H1492.5V920.0H1494.0V921.3H1495.5V925.3H1497.0V929.3H1498.5V932.0H1500.0V935.3H1501.5V936.7H1503.0V935.3H1504.5V938.7H1506.0V936.7H1507.5V940.0H1509.0V940.0H1510.5V939.3H1512.0V942.0H1513.5V940.0H1515.0V938.7H1516.5V938.7H1518.0V947.3H1519.5V946.0H1521.0V945.3H1522.5V950.7H1524.0V944.7H1525.5V938.7H1527.0V928.7H1528.5V924.7H1530.0V920.0H1531.5V917.3H1533.0V913.3H1534.5V912.0H1536.0V904.7H1537.5V903.3H1539.0V898.0H1540.5V894.7H1542.0V895.3H1543.5V897.3H1545.0V897.3H1546.5V899.3H1548.0V898.0H1549.5V900.7H1551.0V898.0H1552.5V896.0H1554.0V896.7H1555.5V891.3H1557.0V894.0H1558.5V896.0H1560.0V896.0H1561.5V899.3H1563.0V898.7H1564.5V894.7H1566.0V896.0H1567.5V894.7H1569.0V887.3H1570.5V888.7H1572.0V890.7H1573.5V894.0H1575.0V895.3H1576.5V898.7H1578.0V903.3H1579.5V903.3H1581.0V900.0H1582.5V898.0H1584.0V896.0H1585.5V896.7H1587.0V904.0H1588.5V909.3H1590.0V914.7H1591.5V922.7H1593.0V918.0H1594.5V918.7H1596.0V923.3H1597.5V926.0H1599.0V929.3H1600.5V927.3H1602.0V929.3H1603.5V926.0H1605.0V924.7H1606.5V918.7H1608.0V914.0H1609.5V923.3H1611.0V928.7H1612.5V932.0H1614.0V937.3H1615.5V938.0H1617.0V949.3H1618.5V954.7H1620.0V956.7H1621.5V958.0H1623.0V958.7H1624.5V960.7H1626.0V962.7H1627.5V960.0H1629.0V958.7H1630.5V958.0H1632.0V960.0H1633.5V955.3H1635.0V952.7H1636.5V950.7H1638.0V948.0H1639.5V946.7H1641.0V947.3H1642.5V946.7H1644.0V938.0H1645.5V933.3H1647.0V930.7H1648.5V928.7H1650.0V934.7H1651.5V934.7H1653.0V938.7H1654.5V938.7H1656.0V940.0H1657.5V944.0H1659.0V945.3H1660.5V944.0H1662.0V944.7H1663.5V948.7H1665.0V944.7H1666.5V948.0H1668.0V944.7H1669.5V941.3H1671.0V944.7H1672.5V936.7H1674.0V937.3H1675.5V935.3H1677.0V928.0H1678.5V922.7H1680.0V917.3H1681.5V914.7H1683.0V911.3H1684.5V906.0H1686.0V910.7H1687.5V916.0H1689.0V920.7H1690.5V916.0H1692.0V914.7H1693.5V918.7H1695.0V914.7H1696.5V916.0H1698.0V917.3H1699.5V916.0H1701.0V917.3H1702.5V916.7H1704.0V927.3H1705.5V924.0H1707.0V924.7H1708.5V930.7H1710.0V930.0H1711.5V936.7H1713.0V938.0H1714.5V933.3H1716.0V934.7H1717.5V939.3H1719.0V940.0H1720.5V940.0H1722.0V944.7H1723.5V943.3H1725.0V936.7H1726.5V934.0H1728.0V934.0H1729.5V943.3H1731.0V950.0H1732.5V956.0H1734.0V965.3H1735.5V967.3H1737.0V972.0H1738.5V969.3H1740.0V971.3H1741.5V974.0H1743.0V976.7H1744.5V978.0H1746.0V986.0H1747.5V995.3H1749.0V1000.0H1750.5V1002.7H1752.0V1000.7H1753.5V992.7H1755.0V988.7H1756.5V986.0H1758.0V983.3H1759.5V984.7H1761.0V986.0H1762.5V987.3H1764.0V986.7H1765.5V970.7H1767.0V958.7H1768.5V961.3H1770.0V962.0H1771.5V959.3H1773.0V958.7H1774.5V960.0H1776.0V962.0H1777.5V958.7H1779.0V957.3H1780.5V959.3H1782.0V960.0H1783.5V961.3H1785.0V954.0H1786.5V951.3H1788.0V954.0H1789.5V949.3H1791.0V950.7H1792.5V949.3H1794.0V948.0H1795.5V948.0H1797.0V946.7H1798.5V943.3H1800.0V942.7H1801.5V940.7H1803.0V937.3H1804.5V941.3H1806.0V941.3H1807.5V942.0H1809.0V939.3H1810.5V937.3H1812.0V940.0H1813.5V938.7H1815.0V942.0H1816.5V943.3H1818.0V944.0H1819.5V942.0H1821.0V949.3H1822.5V953.3H1824.0V963.3H1825.5V966.7H1827.0V938.7H1828.5V932.7H1830.0V930.7H1831.5V932.0H1833.0V936.7H1834.5V934.0H1836.0V932.0H1837.5V936.0H1839.0V938.0H1840.5V943.3H1842.0V947.3H1843.5V952.7H1845.0V950.7H1846.5V949.3H1848.0V950.7H1849.5V946.0H1851.0V945.3H1852.5V948.0H1854.0V948.7H1855.5V948.7H1857.0V946.0H1858.5V946.0H1860.0V950.7H1861.5V948.0H1863.0V952.7H1864.5V951.3H1866.0V954.7H1867.5V956.0H1869.0V959.3H1870.5V956.7H1872.0V957.3H1873.5V954.0H1875.0V961.3H1876.5V960.7H1878.0V966.0H1879.5V967.3H1881.0V970.7H1882.5V967.3H1884.0V966.7H1885.5V961.3H1887.0V962.7H1888.5V962.7H1890.0V960.7H1891.5V959.3H1893.0V958.7H1894.5V958.7H1896.0V961.3H1897.5V960.0H1899.0V959.3H1900.5V962.7H1902.0V962.7H1903.5V964.7H1905.0V966.0H1906.5V974.7H1908.0V978.0H1909.5V982.0H1911.0V987.3H1912.5V993.3H1914.0V992.0H1915.5V993.3H1917.0V992.0H1918.5V990.0H1920.0V985.3H1921.5V980.0H1923.0V981.3H1924.5V976.7H1926.0V980.7" fill="none" stroke="#ff0000" stroke-width="2.8" stroke-linejoin="miter" shape-rendering="crispEdges"/>
<path transform="translate(47.00,16.00) scale(1.0625)" d="M8 1L1 6.5M8 1L15 6.5M4.5 6.5H11.5M2.5 9.5H13.5M8 6.5V14.5M5 11L6 13M11 11L10 13M1.5 14.5H14.5" fill="none" stroke="#000" stroke-width="1.90"/>
<g transform="translate(0,31.50) scale(1,1.000)"><text x="68.30" y="0" textLength="7.10" lengthAdjust="spacingAndGlyphs" fill="#000" font-family="Liberation Sans" font-size="21" font-weight="normal">1</text></g>
<path transform="translate(76.60,16.00) scale(1.0625)" d="M6 1L1.5 7M10 1L14.5 7M4 8.5H12V14L10 15M7.5 8.5L6.5 12L3 15" fill="none" stroke="#000" stroke-width="1.90"/>
<path transform="translate(93.50,16.00) scale(1.0625)" d="M3.5 1.5H12.5V6H3.5ZM8 6V14M8 9.5H13M4.5 9V13.5M1.5 15L5 13.5H15" fill="none" stroke="#000" stroke-width="1.90"/>
<g transform="translate(0,31.50) scale(1,1.000)"><text x="113.70" y="0" textLength="107.70" lengthAdjust="spacingAndGlyphs" fill="#000" font-family="Liberation Sans" font-size="21" font-weight="normal">[2023/06]1.00</text></g>
<path d="M228.8 24.5H235.9" stroke="#000" stroke-width="1.6"/>
<path transform="translate(244.00,16.00) scale(1.0625)" d="M8.5 0.5L7 3M3.5 3H12.5V15H3.5ZM3.5 9H12.5" fill="none" stroke="#000" stroke-width="1.90"/>
<path transform="translate(263.00,16.00) scale(1.0625)" d="M8 1L1 6.5M8 1L15 6.5M4.5 6.5H11.5M2.5 9.5H13.5M8 6.5V14.5M5 11L6 13M11 11L10 13M1.5 14.5H14.5" fill="none" stroke="#000" stroke-width="1.90"/>
<g transform="translate(0,31.50) scale(1,1.000)"><text x="284.20" y="0" textLength="5.30" lengthAdjust="spacingAndGlyphs" fill="#000" font-family="Liberation Sans" font-size="21" font-weight="normal">1</text></g>
<path transform="translate(290.00,16.00) scale(1.0625)" d="M6 1L1.5 7M10 1L14.5 7M4 8.5H12V14L10 15M7.5 8.5L6.5 12L3 15" fill="none" stroke="#000" stroke-width="1.90"/>
<path transform="translate(309.00,16.00) scale(1.0625)" d="M3.5 1.5H12.5V6H3.5ZM8 6V14M8 9.5H13M4.5 9V13.5M1.5 15L5 13.5H15" fill="none" stroke="#000" stroke-width="1.90"/>
<g transform="translate(0,31.50) scale(1,1.000)"><text x="329.00" y="0" textLength="107.70" lengthAdjust="spacingAndGlyphs" fill="#000" font-family="Liberation Sans" font-size="21" font-weight="normal">[2023/06]1.00</text></g>
<path transform="translate(18.00,52.00) scale(1.0625)" d="M8 1L1 6.5M8 1L15 6.5M4.5 6.5H11.5M2.5 9.5H13.5M8 6.5V14.5M5 11L6 13M11 11L10 13M1.5 14.5H14.5" fill="none" stroke="#1c1c30" stroke-width="1.60"/>
<g transform="translate(0,68.30) scale(1,1.000)"><text x="53.60" y="0" textLength="63.60" lengthAdjust="spacingAndGlyphs" fill="#1c1c30" font-family="Liberation Sans" font-size="18.5" font-weight="normal">2023/06</text></g>
<g transform="translate(0,64.60) scale(1,1.000)"><text x="132.40" y="0" textLength="27.50" lengthAdjust="spacingAndGlyphs" fill="#000" font-family="Liberation Sans" font-size="19.5" font-weight="normal">1.00</text></g>
<path transform="translate(223.60,52.00) scale(1.0625)" d="M8.5 0.5L7 3M3.5 3H12.5V15H3.5ZM3.5 9H12.5" fill="none" stroke="#1c1c30" stroke-width="1.60"/>
<path transform="translate(241.50,52.00) scale(1.0625)" d="M8 1L1 6.5M8 1L15 6.5M4.5 6.5H11.5M2.5 9.5H13.5M8 6.5V14.5M5 11L6 13M11 11L10 13M1.5 14.5H14.5" fill="none" stroke="#1c1c30" stroke-width="1.60"/>
<g transform="translate(0,68.30) scale(1,1.000)"><text x="277.00" y="0" textLength="63.80" lengthAdjust="spacingAndGlyphs" fill="#1c1c30" font-family="Liberation Sans" font-size="18.5" font-weight="normal">2023/06</text></g>
<g transform="translate(0,64.60) scale(1,1.000)"><text x="355.50" y="0" textLength="27.50" lengthAdjust="spacingAndGlyphs" fill="#000" font-family="Liberation Sans" font-size="19.5" font-weight="normal">1.00</text></g>
<path transform="translate(446.00,52.00) scale(1.0625)" d="M6 1L1.5 7M10 1L14.5 7M4 8.5H12V14L10 15M7.5 8.5L6.5 12L3 15" fill="none" stroke="#1c1c30" stroke-width="1.60"/>
<path transform="translate(464.50,52.00) scale(1.0625)" d="M3.5 1.5H12.5V6H3.5ZM8 6V14M8 9.5H13M4.5 9V13.5M1.5 15L5 13.5H15" fill="none" stroke="#1c1c30" stroke-width="1.60"/>
<g transform="translate(0,64.60) scale(1,1.000)"><text x="512.40" y="0" textLength="33.60" lengthAdjust="spacingAndGlyphs" fill="#000" font-family="Liberation Sans" font-size="19.5" font-weight="normal">1200</text></g>
<g transform="translate(0,68.30) scale(1,1.000)"><text x="589.00" y="0" textLength="7.00" lengthAdjust="spacingAndGlyphs" fill="#1c1c30" font-family="Liberation Sans" font-size="18.5" font-weight="normal">1</text></g>
<path transform="translate(597.50,52.00) scale(1.0625)" d="M6 1L1.5 7M10 1L14.5 7M4 8.5H12V14L10 15M7.5 8.5L6.5 12L3 15" fill="none" stroke="#1c1c30" stroke-width="1.60"/>
<path transform="translate(616.00,52.00) scale(1.0625)" d="M3.5 1.5H12.5V6H3.5ZM8 6V14M8 9.5H13M4.5 9V13.5M1.5 15L5 13.5H15" fill="none" stroke="#1c1c30" stroke-width="1.60"/>
<rect x="180" y="49.5" width="20.5" height="20.5" fill="#f0f0f0" stroke="#b8b8b8" stroke-width="1.2"/>
<rect x="180" y="58.8" width="20.5" height="1.2" fill="#b8b8b8"/>
<path d="M185.5 56.6L190.2 51.8L194.9 56.6Z" fill="#000"/>
<path d="M185.5 62.6L190.2 67.4L194.9 62.6Z" fill="#000"/>
<rect x="403" y="49.5" width="20.5" height="20.5" fill="#f0f0f0" stroke="#b8b8b8" stroke-width="1.2"/>
<rect x="403" y="58.8" width="20.5" height="1.2" fill="#b8b8b8"/>
<path d="M408.5 56.6L413.2 51.8L417.9 56.6Z" fill="#000"/>
<path d="M408.5 62.6L413.2 67.4L417.9 62.6Z" fill="#000"/>
<rect x="555" y="49.5" width="20.5" height="20.5" fill="#f0f0f0" stroke="#b8b8b8" stroke-width="1.2"/>
<rect x="555" y="58.8" width="20.5" height="1.2" fill="#b8b8b8"/>
<path d="M560.5 56.6L565.2 51.8L569.9 56.6Z" fill="#000"/>
<path d="M560.5 62.6L565.2 67.4L569.9 62.6Z" fill="#000"/>
</svg>
</body></html>
